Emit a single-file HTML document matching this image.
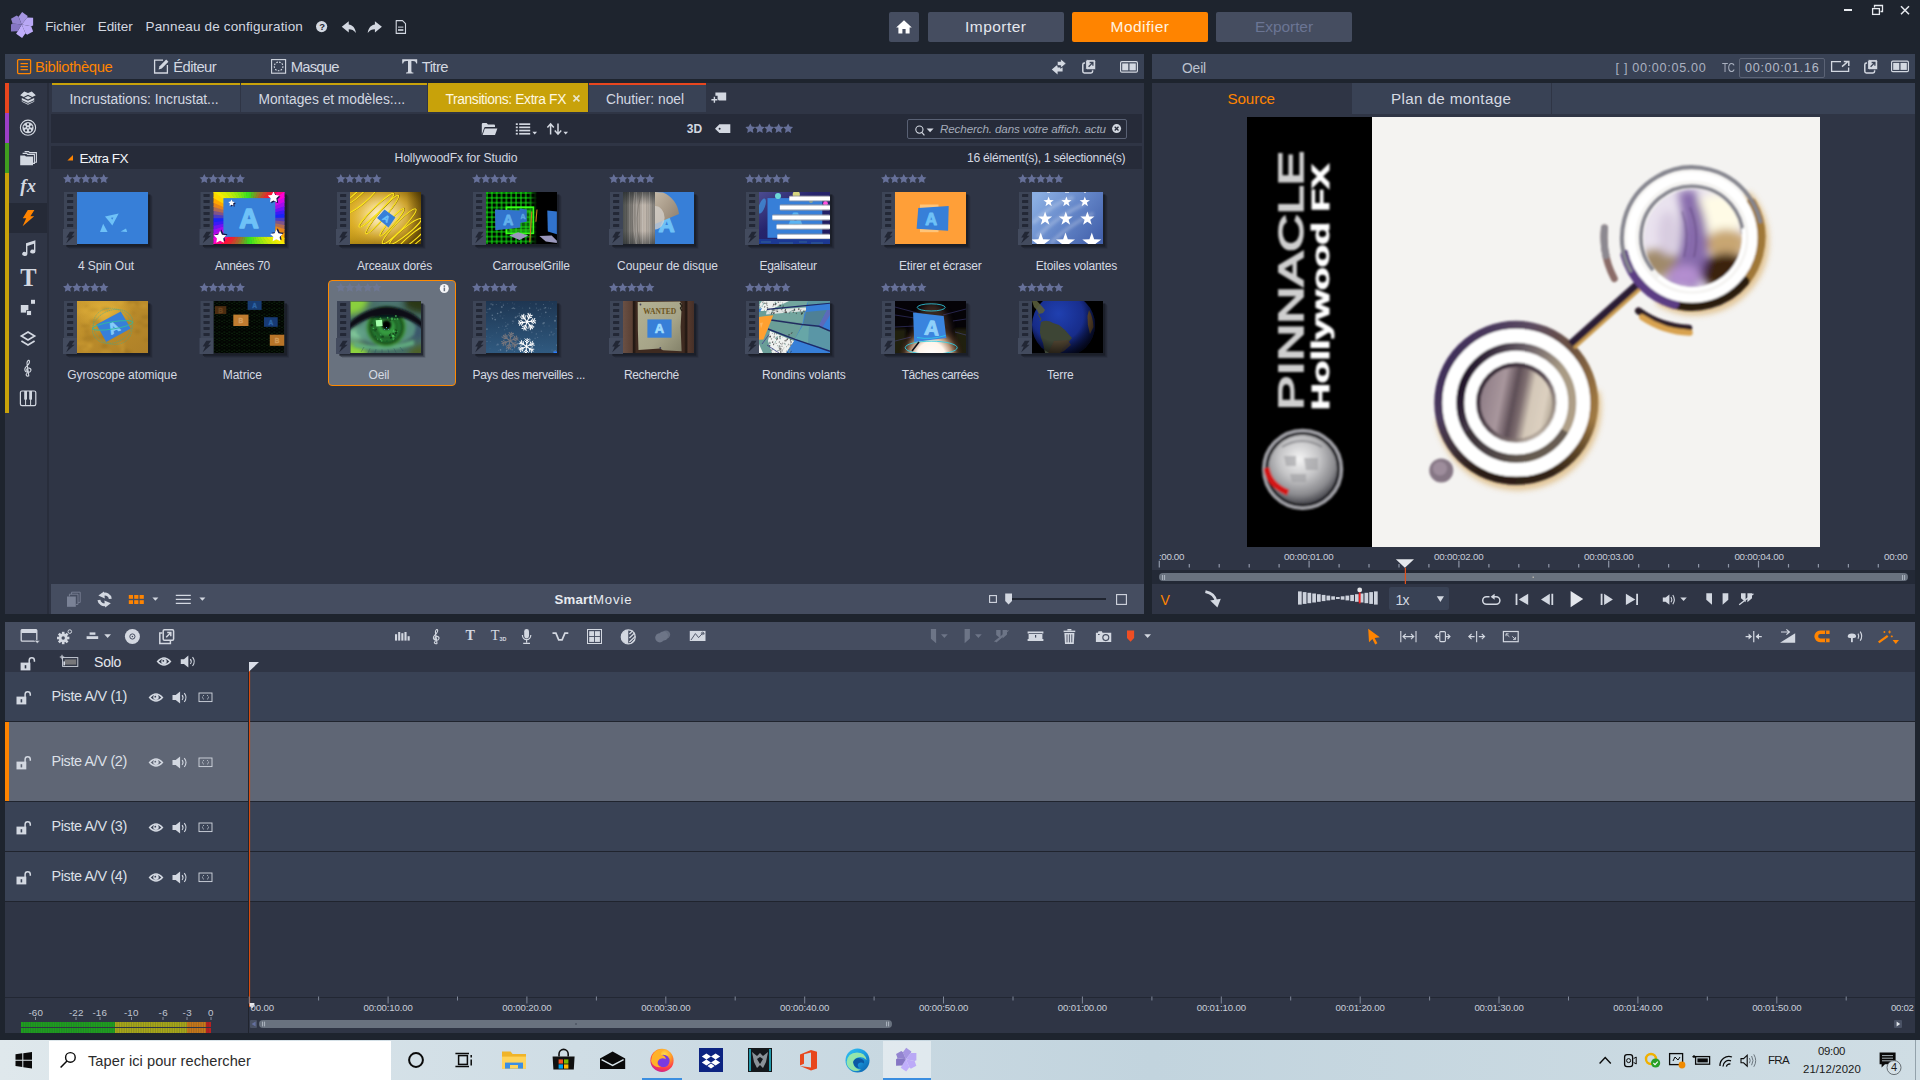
<!DOCTYPE html>
<html lang="fr"><head><meta charset="utf-8"><title>Pinnacle Studio</title><style>
html,body{margin:0;padding:0;}
body{width:1920px;height:1080px;overflow:hidden;background:#1e242e;position:relative;font-family:"Liberation Sans",sans-serif;}
.r{position:absolute;}
.t{position:absolute;white-space:nowrap;}
svg{position:absolute;overflow:visible;}
</style></head><body>
<!-- p_layout -->
<div class="r" style="left:5px;top:54px;width:1139px;height:25px;background:#394255;"></div>
<div class="r" style="left:1152px;top:54px;width:763px;height:25px;background:#394255;"></div>
<div class="r" style="left:5px;top:83px;width:1139px;height:531px;background:#2f3545;"></div>
<div class="r" style="left:47px;top:83px;width:1.5px;height:531px;background:#282d3b;"></div>
<div class="r" style="left:5px;top:83px;width:4px;height:30px;background:#e8461e;"></div>
<div class="r" style="left:5px;top:113px;width:4px;height:30px;background:#9b3fc8;"></div>
<div class="r" style="left:5px;top:143px;width:4px;height:30px;background:#3f9e1f;"></div>
<div class="r" style="left:5px;top:173px;width:4px;height:240px;background:#c8a20a;"></div>
<div class="r" style="left:9px;top:203px;width:38px;height:30px;background:#252a37;"></div>
<div class="r" style="left:52px;top:83px;width:188px;height:29px;background:#394255;border-top:2px solid #c8a20a;box-sizing:border-box;"></div>
<div class="r" style="left:241px;top:83px;width:186px;height:29px;background:#394255;border-top:2px solid #c8a20a;box-sizing:border-box;"></div>
<div class="r" style="left:428px;top:83px;width:160px;height:29px;background:#c8a20a;"></div>
<div class="r" style="left:589px;top:83px;width:117px;height:29px;background:#394255;border-top:2px solid #e8461e;box-sizing:border-box;"></div>
<div class="r" style="left:51px;top:114px;width:1091px;height:29px;background:#262b39;"></div>
<div class="r" style="left:51px;top:146px;width:1091px;height:23px;background:#262b39;"></div>
<div class="r" style="left:51px;top:584px;width:1093px;height:30px;background:#454d60;"></div>
<div class="r" style="left:1152px;top:83px;width:763px;height:531px;background:#2f3545;"></div>
<div class="r" style="left:1352px;top:83px;width:563px;height:31px;background:#394255;"></div>
<div class="r" style="left:1551px;top:83px;width:1px;height:31px;background:#2f3545;"></div>
<div class="r" style="left:5px;top:622px;width:1910px;height:28px;background:#454d60;"></div>
<div class="r" style="left:5px;top:650px;width:1910px;height:22px;background:#2f3545;"></div>
<div class="r" style="left:5px;top:672px;width:1910px;height:49px;background:#394255;"></div>
<div class="r" style="left:5px;top:722px;width:1910px;height:79px;background:#5f6675;"></div>
<div class="r" style="left:5px;top:722px;width:4px;height:79px;background:#ff8400;"></div>
<div class="r" style="left:5px;top:802px;width:1910px;height:49px;background:#394255;"></div>
<div class="r" style="left:5px;top:852px;width:1910px;height:49px;background:#394255;"></div>
<div class="r" style="left:5px;top:902px;width:1910px;height:95px;background:#2f3545;"></div>
<div class="r" style="left:5px;top:998px;width:1910px;height:35px;background:#2f3545;"></div>
<div class="r" style="left:5px;top:997px;width:1910px;height:1px;background:#222733;"></div>
<div class="r" style="left:0px;top:1040px;width:1920px;height:40px;background:linear-gradient(90deg,#dfe8ec 0%,#cfdde5 30%,#c2d4de 60%,#cfdde4 100%);"></div>
<div class="r" style="left:49px;top:1041px;width:342px;height:39px;background:#ffffff;"></div>
<!-- p_top -->
<div class="r" style="left:889px;top:12px;width:30px;height:30px;background:#454d60;border-radius:2px;"></div>
<div class="r" style="left:928px;top:12px;width:136px;height:30px;background:#454d60;border-radius:2px;"></div>
<div class="r" style="left:1072px;top:12px;width:136px;height:30px;background:#ff8400;border-radius:2px;"></div>
<div class="r" style="left:1216px;top:12px;width:136px;height:30px;background:#454d60;border-radius:2px;"></div>
<!-- p_library -->
<div class="r" style="left:907px;top:119px;width:220px;height:20px;background:#262b39;border:1px solid #596174;border-radius:2px;box-sizing:border-box;"></div>
<!-- p_thumbs -->
<div class="r" style="left:328.3px;top:279.6px;width:127.5px;height:106.39999999999998px;background:#69727f;border:1.6px solid #ff8a00;border-radius:4px;box-sizing:border-box;"></div>
<!-- p_preview -->
<div class="r" style="left:1739px;top:58px;width:86px;height:20px;background:transparent;border:1px solid #5b6375;border-radius:2px;box-sizing:border-box;"></div>
<div class="r" style="left:1247px;top:117px;width:125px;height:430px;background:#000;"></div>
<div class="r" style="left:1372px;top:117px;width:448px;height:430px;background:#f4f3f1;"></div>
<div class="r" style="left:1152px;top:570px;width:763px;height:14px;background:#232936;"></div>
<div class="r" style="left:1159px;top:573.4px;width:749px;height:7.800000000000068px;background:#69727f;border-radius:4px;"></div>
<div class="r" style="left:1389.3px;top:587.2px;width:59.299999999999955px;height:23.199999999999932px;background:#394255;border-radius:2px;"></div>
<!-- p_timeline -->
<div class="r" style="left:5px;top:721px;width:1910px;height:1px;background:#20242e;"></div>
<div class="r" style="left:5px;top:801px;width:1910px;height:1px;background:#20242e;"></div>
<div class="r" style="left:5px;top:851px;width:1910px;height:1px;background:#20242e;"></div>
<div class="r" style="left:5px;top:901px;width:1910px;height:1px;background:#20242e;"></div>
<div class="r" style="left:1908.5px;top:1003px;width:6.5px;height:13px;background:#2f3545;"></div>
<div class="r" style="left:259px;top:1020px;width:633px;height:8px;background:#69727f;border-radius:4px;"></div>
<div class="r" style="left:250px;top:1020px;width:7px;height:8px;background:#4a5265;border-radius:1px;"></div>
<div class="r" style="left:1894px;top:1020px;width:8px;height:8px;background:#4a5265;border-radius:1px;"></div>
<div class="r" style="left:248px;top:998px;width:1px;height:35px;background:#20242e;"></div>
<div class="r" style="left:21px;top:1022px;width:190px;height:5px;background:linear-gradient(90deg,#1e9e1e 0,#1ea01e 94px,#a8a818 94px,#a8a818 166px,#c87818 166px,#c87818 185px,#b82020 185px,#b82020 190px);"></div>
<div class="r" style="left:21px;top:1028px;width:190px;height:5px;background:linear-gradient(90deg,#1e9e1e 0,#1ea01e 94px,#a8a818 94px,#a8a818 166px,#c87818 166px,#c87818 185px,#b82020 185px,#b82020 190px);"></div>
<!-- p_taskbar -->
<div class="r" style="left:642px;top:1078px;width:40px;height:2px;background:#3b8ee0;"></div>
<div class="r" style="left:883px;top:1041px;width:48px;height:39px;background:rgba(255,255,255,0.45);"></div>
<div class="r" style="left:883px;top:1078px;width:48px;height:2px;background:#3b8ee0;"></div>
<div class="r" style="left:1915px;top:1040px;width:1px;height:40px;background:#93a2ab;"></div>
<svg width="1920" height="1080" viewBox="0 0 1920 1080" style="left:0;top:0">
<!-- p_layout -->
<!-- p_top -->
<g>
<polygon points="18.6,16.8 22.1,12.1 27.7,16.0 27.1,17.6 21.7,24.4" fill="#a696e2"/>
<polygon points="27.1,17.6 33.1,17.8 33.1,25.6 31.2,26.3 21.7,24.4" fill="#b9a8f5"/>
<polygon points="31.2,26.3 33.1,31.6 27.1,34.8 25.5,33.2 21.7,24.4" fill="#bcaaf8"/>
<polygon points="25.5,33.2 22.1,37.9 16.1,33.8 17.7,31.3 21.7,24.4" fill="#c0aefb"/>
<polygon points="17.7,31.3 11.0,31.6 11.0,24.4 12.6,23.4 21.7,24.4" fill="#8676c4"/>
<polygon points="12.6,23.4 11.0,18.7 16.7,15.6 18.6,16.8 21.7,24.4" fill="#9384d0"/>
</g>
<circle cx="321.6" cy="26.6" r="5.6" fill="#d3d8e1"/>
<path transform="translate(341.75,21.25)" d="M0,5.6 L7,0 L7,3.3 C10.5,3.5 13.4,6.5 14.2,11.8 C12,8.6 10,7.9 7,7.9 L7,11.2 Z" fill="#d3d8e1"/>
<path transform="translate(381.9,21.25) scale(-1,1)" d="M0,5.6 L7,0 L7,3.3 C10.5,3.5 13.4,6.5 14.2,11.8 C12,8.6 10,7.9 7,7.9 L7,11.2 Z" fill="#d3d8e1"/>
<path d="M396.2,20.6 h6.3 l3,3 v9.8 h-9.3 z" fill="none" stroke="#d3d8e1" stroke-width="1.1" stroke-linejoin="round"/><rect x="398" y="26.6" width="5.4" height="1" fill="#d3d8e1"/><rect x="398" y="29.2" width="5.4" height="1.6" fill="#d3d8e1"/>
<path d="M896.2,27.4 L904,20.2 L911.8,27.4 H909.6 V33.4 H905.6 V29 H902.4 V33.4 H898.4 V27.4 Z" fill="#ffffff"/>
<rect x="1844" y="9" width="8" height="2" fill="#e8ebf0"/>
<path d="M1874.5,7.5 v-2 h8 v6 h-2" fill="none" stroke="#e8ebf0" stroke-width="1.3"/><rect x="1872.6" y="8.6" width="6.8" height="5.8" fill="none" stroke="#e8ebf0" stroke-width="1.3"/>
<path d="M1901,6.2 l8,8 M1909,6.2 l-8,8" stroke="#e8ebf0" stroke-width="1.5"/>
<!-- p_library -->
<rect x="17.6" y="59.6" width="13" height="14" rx="1" fill="none" stroke="#ff8400" stroke-width="1.3"/><path d="M20.5,63.6 h7.4 M20.5,66.6 h7.4 M20.5,69.6 h7.4" stroke="#ff8400" stroke-width="1.2"/>
<path d="M163,60.2 h-8.4 v12.8 h12.8 v-8" fill="none" stroke="#d3d8e1" stroke-width="1.3"/><path d="M158.6,69.4 l1,-3.2 l6.6,-6.6 l2.2,2.2 l-6.6,6.6 z" fill="#d3d8e1"/>
<rect x="271.6" y="59.6" width="14" height="13.6" fill="none" stroke="#d3d8e1" stroke-width="1.1"/><circle cx="278.6" cy="66.4" r="4.3" fill="none" stroke="#d3d8e1" stroke-width="1.1" stroke-dasharray="1.6 1.3"/>
<path d="M402.2,59.2 h15 v4.4 h-1 c-0.3,-1.8 -1.2,-2.6 -3.2,-2.6 h-1.6 v10 c0,1 0.6,1.5 2,1.6 v1 h-7.4 v-1 c1.4,-0.1 2,-0.6 2,-1.6 v-10 h-1.6 c-2,0 -2.9,0.8 -3.2,2.6 h-1 z" fill="#d3d8e1"/>
<path d="M1062.600,67.400 h-5 v-2.800 l-5.800,4.900 l5.800,4.900 v-2.800 h5z" fill="#d3d8e1"/><path d="M1057.200,61.300 h3.500 v-2.600 l5.500,4.800 l-5.500,4.800 v-2.600 h-3.500z" fill="#d3d8e1" stroke="#394255" stroke-width="0.900"/>
<rect x="1082.8" y="63.1" width="9.8" height="9.8" rx="1.6" fill="none" stroke="#d3d8e1" stroke-width="1.5"/><rect x="1085.6" y="59.6" width="10.2" height="10.2" rx="1.6" fill="#d3d8e1" stroke="#394255" stroke-width="1"/><path d="M1088.6,66.8 l4.2,-4.200 M1089.6,62.5 h3.300 v3.300" fill="none" stroke="#394255" stroke-width="1.300"/>
<rect x="1120.6" y="61.7" width="16.8" height="10.4" rx="1.200" fill="none" stroke="#d3d8e1" stroke-width="1.200"/><rect x="1122.2" y="63.4" width="6.100" height="7" fill="#d3d8e1"/><rect x="1129.5" y="63.4" width="6.300" height="7" fill="#d3d8e1"/>
<path d="M573.4,95.4 l6,6 M579.4,95.4 l-6,6" stroke="#e9e4c6" stroke-width="1.7"/>
<path d="M715.4,92.6 h10.8 v8 h-7.4 l-1.2,-1.6 v-3.2 h-2.2z" fill="#d3d8e1"/><path d="M714.4,96.8 v6 M711.4,99.8 h6" stroke="#d3d8e1" stroke-width="1.4"/>
<path d="M481.8,134.8 v-10.6 q0,-1.2 1.2,-1.2 h3.6 l1.4,1.6 h6 q1,0 1,1 v1.4 h-9.6 q-1,0 -1.3,1 z" fill="#d3d8e1"/><path d="M482.6,134.9 l2.2,-6.3 h12.6 l-2.4,6.3 z" fill="#d3d8e1"/>
<rect x="515.8" y="123.3" width="2" height="1.7" fill="#d3d8e1"/><rect x="519.2" y="123.3" width="11" height="1.7" fill="#d3d8e1"/>
<rect x="515.8" y="126.5" width="2" height="1.7" fill="#d3d8e1"/><rect x="519.2" y="126.5" width="11" height="1.7" fill="#d3d8e1"/>
<rect x="515.8" y="129.7" width="2" height="1.7" fill="#d3d8e1"/><rect x="519.2" y="129.7" width="11" height="1.7" fill="#d3d8e1"/>
<rect x="515.8" y="132.9" width="2" height="1.7" fill="#d3d8e1"/><rect x="519.2" y="132.9" width="11" height="1.7" fill="#d3d8e1"/>
<path d="M532.4,131.8 h4.6 l-2.3,2.6z" fill="#d3d8e1"/>
<path d="M550.6,134.4 v-9.6 M547.4,127.6 l3.2,-3.6 l3.2,3.6 M558,123.6 v9.8 M554.8,130.6 l3.2,3.6 l3.2,-3.6" fill="none" stroke="#d3d8e1" stroke-width="1.5"/><path d="M563.4,131.8 h4.6 l-2.3,2.6z" fill="#d3d8e1"/>
<path d="M715,128.7 l4.4,-4.4 h10.9 v8.8 h-10.9 z" fill="#d3d8e1"/><circle cx="719.6" cy="128.7" r="1" fill="#262b39"/>
<polygon points="750.30,123.50 751.83,126.60 755.25,127.09 752.77,129.50 753.36,132.91 750.30,131.30 747.24,132.91 747.83,129.50 745.35,127.09 748.77,126.60" fill="#667099"/><polygon points="759.75,123.50 761.28,126.60 764.70,127.09 762.22,129.50 762.81,132.91 759.75,131.30 756.69,132.91 757.28,129.50 754.80,127.09 758.22,126.60" fill="#667099"/><polygon points="769.20,123.50 770.73,126.60 774.15,127.09 771.67,129.50 772.26,132.91 769.20,131.30 766.14,132.91 766.73,129.50 764.25,127.09 767.67,126.60" fill="#667099"/><polygon points="778.65,123.50 780.18,126.60 783.60,127.09 781.12,129.50 781.71,132.91 778.65,131.30 775.59,132.91 776.18,129.50 773.70,127.09 777.12,126.60" fill="#667099"/><polygon points="788.10,123.50 789.63,126.60 793.05,127.09 790.57,129.50 791.16,132.91 788.10,131.30 785.04,132.91 785.63,129.50 783.15,127.09 786.57,126.60" fill="#667099"/>
<circle cx="919.4" cy="129.6" r="3.6" fill="none" stroke="#d3d8e1" stroke-width="1.1"/><path d="M921.8,132.4 l2.6,3" stroke="#d3d8e1" stroke-width="1.2"/><path d="M926.6,128.6 h7 l-3.5,3.6z" fill="#d3d8e1"/>
<circle cx="1116.6" cy="128.6" r="4.5" fill="#d3d8e1"/><path d="M1114.7,126.7 l3.8,3.8 M1118.5,126.7 l-3.8,3.8" stroke="#262b39" stroke-width="1.3"/>
<path d="M73,155 v5.6 h-5.6 z" fill="#ff8400"/>
<g fill="#d3d8e1"><path d="M20.2,95.2 l4,-3.800 l3.800,1.700 l3.800,-1.700 l4,3.800 l-3.500,1.700 l-4.300,-2.100 l-4.300,2.100z"/><path d="M28,96 l3.600,1.800 l-3.600,1.600 l-3.600,-1.600z"/><path d="M21.800,98 l6.200,2.800 l6.200,-2.800 v3.800 l-6.200,3 l-6.200,-3z"/></g><path d="M21.800,100.600 l6.200,2.800 l6.200,-2.800" fill="none" stroke="#2f3545" stroke-width="0.900"/>
<circle cx="28" cy="127.7" r="7.6" fill="none" stroke="#d3d8e1" stroke-width="1.1"/><circle cx="28" cy="127.7" r="5.6" fill="#d3d8e1"/>
<circle cx="28.00" cy="124.30" r="1.15" fill="#2f3545"/>
<circle cx="31.23" cy="126.65" r="1.15" fill="#2f3545"/>
<circle cx="30.00" cy="130.45" r="1.15" fill="#2f3545"/>
<circle cx="26.00" cy="130.45" r="1.15" fill="#2f3545"/>
<circle cx="24.77" cy="126.65" r="1.15" fill="#2f3545"/>
<circle cx="28" cy="127.7" r="0.8" fill="#2f3545"/>
<path d="M24.6,151.6 h4 l1,1 h6.8 v9.6 h-1.6" fill="none" stroke="#d3d8e1" stroke-width="1.1"/><path d="M22.6,153.4 h4 l1,1 h6.8 v9 h-1.6" fill="none" stroke="#d3d8e1" stroke-width="1.1"/><path d="M20.2,155.4 h4.6 l1.2,1.2 h7 v8.6 h-12.8z" fill="#d3d8e1"/>
<path d="M27.8,210 h6.6 l-4,6.2 h3.8 l-11.6,10 l3.6,-8 h-3.4 z" fill="#ff8400"/>
<path d="M26,243.2 l9.4,-3 v11.4 a2.6,2 0 1 1 -1.4,-1.8 v-6 l-6.6,2.2 v8 a2.6,2 0 1 1 -1.4,-1.8 z" fill="#d3d8e1"/>
<rect x="20.8" y="305" width="7.6" height="7.6" fill="#d3d8e1"/><rect x="26.6" y="310.6" width="4.8" height="4.8" fill="#d3d8e1" stroke="#2f3545" stroke-width="0.8"/><rect x="31" y="299.8" width="4" height="4" fill="#d3d8e1"/>
<path d="M28,332 l6.6,4 l-6.6,4 l-6.6,-4z" fill="none" stroke="#d3d8e1" stroke-width="1.7" stroke-linejoin="miter"/><path d="M21.4,341 l6.6,4 l6.6,-4" fill="none" stroke="#d3d8e1" stroke-width="1.7"/>
<path d="M28.6,376 c-2.4,0.6 -3.2,-1.8 -1.6,-2.4 M28.8,375.8 l-1.8,-12.4 c-0.2,-2 1.6,-3.6 2.2,-3 c0.8,1.4 -0.2,3.6 -2.6,5.8 c-2.6,2.4 -2.6,5.600 1.400,6.200 c3.400,0.200 4,-3.800 1,-4.400 c-2.400,-0.200 -3.200,2.400 -1.400,3.200" fill="none" stroke="#d3d8e1" stroke-width="1.1" stroke-linecap="round"/>
<rect x="20.4" y="391" width="15.4" height="14.6" rx="1.6" fill="none" stroke="#d3d8e1" stroke-width="1.2"/><path d="M25.6,391 v14.6 M30.6,391 v14.6" stroke="#d3d8e1" stroke-width="1"/><rect x="24.2" y="391" width="2.8" height="8.6" fill="#d3d8e1"/><rect x="29.2" y="391" width="2.8" height="8.6" fill="#d3d8e1"/>
<path d="M69.400,596.400 v-2.200 h8.600 v10.200 h-2 M71.600,594.200 v-2 h8.600 v10.200 h-2" fill="none" stroke="#7a8296" stroke-width="0.900"/><rect x="67" y="596.500" width="8.800" height="10.300" fill="#7a8296"/>
<path d="M110.300,598.800 A5.300,5.300 0 0 0 102.800,594.600" fill="none" stroke="#d3d8e1" stroke-width="2.900"/><path d="M104,591.400 L98.400,595.600 L104.800,598.400z" fill="#d3d8e1"/><g transform="rotate(180 104.6 599.4)"><path d="M110.300,598.800 A5.300,5.300 0 0 0 102.800,594.600" fill="none" stroke="#d3d8e1" stroke-width="2.900"/><path d="M104,591.400 L98.400,595.600 L104.800,598.400z" fill="#d3d8e1"/></g>
<rect x="128.8" y="595.0" width="4.2" height="3.8" fill="#ff8400"/>
<rect x="134.2" y="595.0" width="4.2" height="3.8" fill="#ff8400"/>
<rect x="139.6" y="595.0" width="4.2" height="3.8" fill="#ff8400"/>
<rect x="128.8" y="600.2" width="4.2" height="3.8" fill="#ff8400"/>
<rect x="134.2" y="600.2" width="4.2" height="3.8" fill="#ff8400"/>
<rect x="139.6" y="600.2" width="4.2" height="3.8" fill="#ff8400"/>
<path d="M152.4,597.4 h6 l-3,3.400z" fill="#d3d8e1"/>
<path d="M175.800,595.400 h15 M175.800,599.400 h15 M175.800,603.400 h15" stroke="#d3d8e1" stroke-width="1.2"/><path d="M199.400,597.400 h6 l-3,3.400z" fill="#d3d8e1"/>
<rect x="989.6" y="595.6" width="6.8" height="6.8" fill="none" stroke="#d3d8e1" stroke-width="1.1"/><rect x="1116.600" y="594.600" width="9.800" height="9.800" fill="none" stroke="#d3d8e1" stroke-width="1.1"/><rect x="1008" y="598" width="98" height="2" fill="#1f242f"/><path d="M1005.2,593.400 h6.800 v7.600 l-3.400,3.600 l-3.400,-3.600z" fill="#d3d8e1"/>
<!-- p_thumbs -->
<defs>
<clipPath id="tc"><rect width="71" height="52"/></clipPath>
<filter id="fT1" x="-20%" y="-20%" width="140%" height="140%"><feGaussianBlur stdDeviation="1.6"/></filter>
<filter id="fT3" x="-30%" y="-30%" width="160%" height="160%"><feGaussianBlur stdDeviation="3.2"/></filter>
<filter id="fT1b" x="-20%" y="-20%" width="140%" height="140%"><feGaussianBlur stdDeviation="1.1"/></filter>
<filter id="fT05" x="-20%" y="-20%" width="140%" height="140%"><feGaussianBlur stdDeviation="0.45"/></filter>
<filter id="fT03" x="-20%" y="-20%" width="140%" height="140%"><feGaussianBlur stdDeviation="0.3"/></filter>
<radialGradient id="gGold" cx="0.42" cy="0.45" r="0.72"><stop offset="0" stop-color="#fff4d6"/><stop offset="0.28" stop-color="#f2d88a"/><stop offset="0.58" stop-color="#cfa530"/><stop offset="0.82" stop-color="#9a7412"/><stop offset="1" stop-color="#5e4606"/></radialGradient>
<linearGradient id="gGoldL" x1="0" x2="1"><stop offset="0" stop-color="#e8b820" stop-opacity="0.55"/><stop offset="0.35" stop-color="#e8b820" stop-opacity="0"/><stop offset="0.8" stop-color="#3a2a04" stop-opacity="0"/><stop offset="1" stop-color="#3a2a04" stop-opacity="0.45"/></linearGradient>
<pattern id="pGrid" width="4.85" height="4.85" patternUnits="userSpaceOnUse"><rect width="4.85" height="4.85" fill="#000600"/><path d="M1,0 V4.850 M0,1 H4.850" stroke="#12f012" stroke-width="1"/></pattern>
<linearGradient id="gGridFade" x1="0" x2="1"><stop offset="0.600" stop-color="#000" stop-opacity="0"/><stop offset="0.720" stop-color="#000" stop-opacity="1"/></linearGradient>
<linearGradient id="gMetal" x1="0" x2="1"><stop offset="0" stop-color="#4c504e"/><stop offset="0.200" stop-color="#6e6c68"/><stop offset="0.500" stop-color="#a8a098"/><stop offset="0.700" stop-color="#c0b6ac"/><stop offset="0.850" stop-color="#9c968e"/><stop offset="1" stop-color="#7e7c78"/></linearGradient>
<linearGradient id="gMetalV" x1="0" x2="0" y1="0" y2="1"><stop offset="0" stop-color="#20262a" stop-opacity="0.650"/><stop offset="0.250" stop-color="#20262a" stop-opacity="0"/><stop offset="0.750" stop-color="#20262a" stop-opacity="0"/><stop offset="1" stop-color="#20262a" stop-opacity="0.500"/></linearGradient>
<linearGradient id="gSaw" x1="0" x2="1" y1="0" y2="1"><stop offset="0" stop-color="#c4b8a6"/><stop offset="0.500" stop-color="#a89a88"/><stop offset="1" stop-color="#8a7c6c"/></linearGradient>
<linearGradient id="gEq" x1="0" x2="1" y1="0" y2="1"><stop offset="0" stop-color="#4c4c90"/><stop offset="0.400" stop-color="#26246c"/><stop offset="1" stop-color="#201a5c"/></linearGradient>
<linearGradient id="gBar" x1="0" x2="0" y1="0" y2="1"><stop offset="0" stop-color="#8a8a92" stop-opacity="0.7"/><stop offset="0.300" stop-color="#ffffff"/><stop offset="0.700" stop-color="#ffffff"/><stop offset="1" stop-color="#8a8a92" stop-opacity="0.7"/></linearGradient>
<linearGradient id="gSky" x1="0" x2="1" y1="0.200" y2="0.800"><stop offset="0" stop-color="#8aaee2"/><stop offset="0.500" stop-color="#6486c8"/><stop offset="1" stop-color="#4462ac"/></linearGradient>
<linearGradient id="gGold2" x1="0" x2="1" y1="0" y2="1"><stop offset="0" stop-color="#cc9c30"/><stop offset="0.500" stop-color="#b98a2a"/><stop offset="1" stop-color="#ae8028"/></linearGradient>
<radialGradient id="gGold2b" cx="0.400" cy="0.220" r="0.400"><stop offset="0" stop-color="#f0c040" stop-opacity="0.800"/><stop offset="1" stop-color="#f0c040" stop-opacity="0"/></radialGradient>
<pattern id="pMatrix" width="5" height="6" patternUnits="userSpaceOnUse"><rect x="0.500" y="0.500" width="0.800" height="1.200" fill="#1c5a1c"/><rect x="0.500" y="3" width="0.800" height="1.200" fill="#144014"/><rect x="3" y="1.800" width="0.800" height="1.200" fill="#1a4a1a"/><rect x="3" y="4.600" width="0.800" height="1" fill="#0e300e"/></pattern>
<linearGradient id="gEyeBg" x1="0" x2="1"><stop offset="0" stop-color="#86c24a"/><stop offset="0.500" stop-color="#6c9a7c"/><stop offset="1" stop-color="#44606e"/></linearGradient>
<linearGradient id="gEyeTop" x1="0" x2="1"><stop offset="0" stop-color="#78c23a"/><stop offset="0.450" stop-color="#4a7a44"/><stop offset="1" stop-color="#5a6a3a"/></linearGradient>
<radialGradient id="gIris" cx="0.500" cy="0.480" r="0.500"><stop offset="0" stop-color="#0a2a10"/><stop offset="0.350" stop-color="#2c8a34"/><stop offset="0.700" stop-color="#2a7a30"/><stop offset="0.880" stop-color="#144a20"/><stop offset="1" stop-color="#0c2a1a"/></radialGradient>
<linearGradient id="gEyeLow" x1="0" x2="1"><stop offset="0" stop-color="#8ed048"/><stop offset="0.400" stop-color="#6aa066"/><stop offset="1" stop-color="#3e5868"/></linearGradient>
<linearGradient id="gSnow" x1="0" x2="0" y1="0" y2="1"><stop offset="0" stop-color="#1e3652"/><stop offset="1" stop-color="#305a80"/></linearGradient>
<linearGradient id="gWood" x1="0" x2="1"><stop offset="0" stop-color="#6a5044"/><stop offset="0.130" stop-color="#5a4034"/><stop offset="0.150" stop-color="#1c1410"/><stop offset="0.190" stop-color="#3e2a20"/><stop offset="0.860" stop-color="#3e2a20"/><stop offset="0.890" stop-color="#1c1410"/><stop offset="0.920" stop-color="#54382c"/><stop offset="1" stop-color="#463028"/></linearGradient>
<linearGradient id="gPaper" x1="0" x2="1" y1="0" y2="1"><stop offset="0" stop-color="#b4b294"/><stop offset="0.600" stop-color="#a6a488"/><stop offset="1" stop-color="#84826a"/></linearGradient>
<radialGradient id="gGlow" cx="36" cy="56" r="34" gradientUnits="userSpaceOnUse" gradientTransform="translate(36 56) scale(1 1.05) translate(-36 -56)"><stop offset="0" stop-color="#ffffff"/><stop offset="0.420" stop-color="#fff4ea"/><stop offset="0.620" stop-color="#b89478"/><stop offset="0.800" stop-color="#4a3424" stop-opacity="0.850"/><stop offset="1" stop-color="#201008" stop-opacity="0"/></radialGradient>
<radialGradient id="gEarth" cx="0.420" cy="0.320" r="0.700"><stop offset="0" stop-color="#2040b0"/><stop offset="0.600" stop-color="#172c8a"/><stop offset="1" stop-color="#081040"/></radialGradient>
<radialGradient id="gEarthShade" cx="0.400" cy="0.350" r="0.680"><stop offset="0.600" stop-color="#000" stop-opacity="0"/><stop offset="1" stop-color="#000" stop-opacity="0.700"/></radialGradient>
</defs>
<polygon points="67.80,174.00 69.27,176.98 72.56,177.45 70.18,179.77 70.74,183.05 67.80,181.50 64.86,183.05 65.42,179.77 63.04,177.45 66.33,176.98" fill="#667099"/><polygon points="76.78,174.00 78.25,176.98 81.54,177.45 79.16,179.77 79.72,183.05 76.78,181.50 73.84,183.05 74.40,179.77 72.02,177.45 75.31,176.98" fill="#667099"/><polygon points="85.76,174.00 87.23,176.98 90.52,177.45 88.14,179.77 88.70,183.05 85.76,181.50 82.82,183.05 83.38,179.77 81.00,177.45 84.29,176.98" fill="#667099"/><polygon points="94.74,174.00 96.21,176.98 99.50,177.45 97.12,179.77 97.68,183.05 94.74,181.50 91.80,183.05 92.36,179.77 89.98,177.45 93.27,176.98" fill="#667099"/><polygon points="103.72,174.00 105.19,176.98 108.48,177.45 106.10,179.77 106.66,183.05 103.72,181.50 100.78,183.05 101.34,179.77 98.96,177.45 102.25,176.98" fill="#667099"/>
<g transform="translate(64.00,192)"><path d="M84,2.5 h2.400 v52.300 h-84 v-2.800 h81.600z" fill="#171b25" opacity="0.850"/><path d="M86.400,3.500 h1.200 v52.500 h-84 v-1.200 h82.800z" fill="#171b25" opacity="0.450"/><path d="M87.600,4.500 h0.800 v52.300 h-83.400 v-0.800 h82.600z" fill="#171b25" opacity="0.200"/><rect width="13" height="52" fill="#3d4557"/><rect x="-1" y="37" width="14" height="16" fill="#434b5e"/><rect x="3" y="2" width="6.200" height="2.900" rx="0.400" fill="#232836"/><rect x="3" y="8" width="6.200" height="2.900" rx="0.400" fill="#232836"/><rect x="3" y="14" width="6.200" height="2.900" rx="0.400" fill="#232836"/><rect x="3" y="20" width="6.200" height="2.900" rx="0.400" fill="#232836"/><rect x="3" y="26" width="6.200" height="2.900" rx="0.400" fill="#232836"/><rect x="3" y="32" width="6.200" height="2.900" rx="0.400" fill="#232836"/><path d="M5.800,39.800 h4.800 l-2.800,4 h2.800 l-8.400,7.400 l2.600,-5.600 h-2.600 z" fill="#222735"/><g transform="translate(13,0)" clip-path="url(#tc)"><rect width="71" height="52" fill="#377fd8"/><path d="M28,24.5 L41.7,21.6 L35.3,33.5 L32,29.2 Z M34,25.800 L35.200,27.800 L36.400,25.400Z" fill="#6ec1f7" fill-rule="evenodd"/><polygon points="23.0,40.0 26.2,31.8 30.6,40.0" fill="#6ec1f7" /><polygon points="43.7,39.4 49.0,36.5 50.2,40.0" fill="#6ec1f7" /></g></g>
<polygon points="204.30,174.00 205.77,176.98 209.06,177.45 206.68,179.77 207.24,183.05 204.30,181.50 201.36,183.05 201.92,179.77 199.54,177.45 202.83,176.98" fill="#667099"/><polygon points="213.28,174.00 214.75,176.98 218.04,177.45 215.66,179.77 216.22,183.05 213.28,181.50 210.34,183.05 210.90,179.77 208.52,177.45 211.81,176.98" fill="#667099"/><polygon points="222.26,174.00 223.73,176.98 227.02,177.45 224.64,179.77 225.20,183.05 222.26,181.50 219.32,183.05 219.88,179.77 217.50,177.45 220.79,176.98" fill="#667099"/><polygon points="231.24,174.00 232.71,176.98 236.00,177.45 233.62,179.77 234.18,183.05 231.24,181.50 228.30,183.05 228.86,179.77 226.48,177.45 229.77,176.98" fill="#667099"/><polygon points="240.22,174.00 241.69,176.98 244.98,177.45 242.60,179.77 243.16,183.05 240.22,181.50 237.28,183.05 237.84,179.77 235.46,177.45 238.75,176.98" fill="#667099"/>
<g transform="translate(200.50,192)"><path d="M84,2.5 h2.400 v52.300 h-84 v-2.800 h81.600z" fill="#171b25" opacity="0.850"/><path d="M86.400,3.500 h1.200 v52.500 h-84 v-1.200 h82.800z" fill="#171b25" opacity="0.450"/><path d="M87.600,4.500 h0.800 v52.300 h-83.400 v-0.800 h82.600z" fill="#171b25" opacity="0.200"/><rect width="13" height="52" fill="#3d4557"/><rect x="-1" y="37" width="14" height="16" fill="#434b5e"/><rect x="3" y="2" width="6.200" height="2.900" rx="0.400" fill="#232836"/><rect x="3" y="8" width="6.200" height="2.900" rx="0.400" fill="#232836"/><rect x="3" y="14" width="6.200" height="2.900" rx="0.400" fill="#232836"/><rect x="3" y="20" width="6.200" height="2.900" rx="0.400" fill="#232836"/><rect x="3" y="26" width="6.200" height="2.900" rx="0.400" fill="#232836"/><rect x="3" y="32" width="6.200" height="2.900" rx="0.400" fill="#232836"/><path d="M5.800,39.800 h4.800 l-2.800,4 h2.800 l-8.400,7.400 l2.600,-5.600 h-2.600 z" fill="#222735"/><g transform="translate(13,0)" clip-path="url(#tc)"><polygon points="35.5,26.0 -13.4,-8.8 -8.7,-14.6" fill="#f4ed02" /><polygon points="35.5,26.0 -9.5,-13.7 -4.2,-19.0" fill="#dcec05" /><polygon points="35.5,26.0 -5.1,-18.2 0.7,-22.9" fill="#c6ea09" /><polygon points="35.5,26.0 -0.3,-22.2 6.0,-26.3" fill="#aee90c" /><polygon points="35.5,26.0 5.0,-25.6 11.7,-29.1" fill="#98e710" /><polygon points="35.5,26.0 10.5,-28.6 17.6,-31.3" fill="#80e514" /><polygon points="35.5,26.0 16.4,-30.9 23.6,-32.8" fill="#6ae417" /><polygon points="35.5,26.0 22.4,-32.6 29.9,-33.7" fill="#52e21b" /><polygon points="35.5,26.0 28.6,-33.6 36.1,-34.0" fill="#3ce11e" /><polygon points="35.5,26.0 34.9,-34.0 42.4,-33.6" fill="#3ed221" /><polygon points="35.5,26.0 41.1,-33.7 48.6,-32.6" fill="#5ab523" /><polygon points="35.5,26.0 47.4,-32.8 54.6,-30.9" fill="#779925" /><polygon points="35.5,26.0 53.4,-31.3 60.5,-28.6" fill="#937d28" /><polygon points="35.5,26.0 59.3,-29.1 66.0,-25.6" fill="#af602a" /><polygon points="35.5,26.0 65.0,-26.3 71.3,-22.2" fill="#cb442c" /><polygon points="35.5,26.0 70.3,-22.9 76.1,-18.2" fill="#e7282e" /><polygon points="35.5,26.0 75.2,-19.0 80.5,-13.7" fill="#ff0f3d" /><polygon points="35.5,26.0 79.7,-14.6 84.4,-8.8" fill="#ff0888" /><polygon points="35.5,26.0 83.7,-9.8 87.8,-3.5" fill="#ff01d3" /><polygon points="35.5,26.0 87.1,-4.5 90.6,2.2" fill="#d406e6" /><polygon points="35.5,26.0 90.1,1.0 92.8,8.1" fill="#a10dec" /><polygon points="35.5,26.0 92.4,6.9 94.3,14.1" fill="#6e13f3" /><polygon points="35.5,26.0 94.1,12.9 95.2,20.4" fill="#3b1af9" /><polygon points="35.5,26.0 95.1,19.1 95.5,26.6" fill="#1924f6" /><polygon points="35.5,26.0 95.5,25.4 95.1,32.9" fill="#4c3cbf" /><polygon points="35.5,26.0 95.2,31.6 94.1,39.1" fill="#7f5489" /><polygon points="35.5,26.0 94.3,37.9 92.4,45.1" fill="#b26c52" /><polygon points="35.5,26.0 92.8,43.9 90.1,51.0" fill="#e5841b" /><polygon points="35.5,26.0 90.6,49.8 87.1,56.5" fill="#ffa800" /><polygon points="35.5,26.0 87.8,55.5 83.7,61.8" fill="#ffd600" /><polygon points="35.5,26.0 84.4,60.8 79.7,66.6" fill="#f4ed02" /><polygon points="35.5,26.0 80.5,65.7 75.2,71.0" fill="#dcec05" /><polygon points="35.5,26.0 76.1,70.2 70.3,74.9" fill="#c6ea09" /><polygon points="35.5,26.0 71.3,74.2 65.0,78.3" fill="#aee90c" /><polygon points="35.5,26.0 66.0,77.6 59.3,81.1" fill="#98e710" /><polygon points="35.5,26.0 60.5,80.6 53.4,83.3" fill="#80e514" /><polygon points="35.5,26.0 54.6,82.9 47.4,84.8" fill="#6ae417" /><polygon points="35.5,26.0 48.6,84.6 41.1,85.7" fill="#52e21b" /><polygon points="35.5,26.0 42.4,85.6 34.9,86.0" fill="#3ce11e" /><polygon points="35.5,26.0 36.1,86.0 28.6,85.6" fill="#3ed221" /><polygon points="35.5,26.0 29.9,85.7 22.4,84.6" fill="#5ab523" /><polygon points="35.5,26.0 23.6,84.8 16.4,82.9" fill="#779925" /><polygon points="35.5,26.0 17.6,83.3 10.5,80.6" fill="#937d28" /><polygon points="35.5,26.0 11.7,81.1 5.0,77.6" fill="#af602a" /><polygon points="35.5,26.0 6.0,78.3 -0.3,74.2" fill="#cb442c" /><polygon points="35.5,26.0 0.7,74.9 -5.1,70.2" fill="#e7282e" /><polygon points="35.5,26.0 -4.2,71.0 -9.5,65.7" fill="#ff0f3d" /><polygon points="35.5,26.0 -8.7,66.6 -13.4,60.8" fill="#ff0888" /><polygon points="35.5,26.0 -12.7,61.8 -16.8,55.5" fill="#ff01d3" /><polygon points="35.5,26.0 -16.1,56.5 -19.6,49.8" fill="#d406e6" /><polygon points="35.5,26.0 -19.1,51.0 -21.8,43.9" fill="#a10dec" /><polygon points="35.5,26.0 -21.4,45.1 -23.3,37.9" fill="#6e13f3" /><polygon points="35.5,26.0 -23.1,39.1 -24.2,31.6" fill="#3b1af9" /><polygon points="35.5,26.0 -24.1,32.9 -24.5,25.4" fill="#1924f6" /><polygon points="35.5,26.0 -24.5,26.6 -24.1,19.1" fill="#4c3cbf" /><polygon points="35.5,26.0 -24.2,20.4 -23.1,12.9" fill="#7f5489" /><polygon points="35.5,26.0 -23.3,14.1 -21.4,6.9" fill="#b26c52" /><polygon points="35.5,26.0 -21.8,8.1 -19.1,1.0" fill="#e5841b" /><polygon points="35.5,26.0 -19.6,2.2 -16.1,-4.5" fill="#ffa800" /><polygon points="35.5,26.0 -16.8,-3.5 -12.7,-9.8" fill="#ffd600" /><rect x="9.9" y="6.1" width="51.9" height="38.8" fill="#377fd8"/><text x="35.6" y="35.87" font-size="27" font-weight="bold" text-anchor="middle" fill="#6ec1f7" stroke="#6ec1f7" stroke-width="1.49" stroke-linejoin="round" opacity="1">A</text><polygon points="19.20,8.60 20.20,10.62 22.43,10.95 20.82,12.53 21.20,14.75 19.20,13.70 17.20,14.75 17.58,12.53 15.97,10.95 18.20,10.62" fill="#14184a"/><polygon points="18.00,7.60 19.00,9.62 21.23,9.95 19.62,11.53 20.00,13.75 18.00,12.70 16.00,13.75 16.38,11.53 14.77,9.95 17.00,9.62" fill="#ffffff"/><polygon points="61.20,0.40 62.96,3.97 66.91,4.55 64.05,7.33 64.73,11.25 61.20,9.40 57.67,11.25 58.35,7.33 55.49,4.55 59.44,3.97" fill="#14184a"/><polygon points="60.00,-0.60 61.76,2.97 65.71,3.55 62.85,6.33 63.53,10.25 60.00,8.40 56.47,10.25 57.15,6.33 54.29,3.55 58.24,2.97" fill="#ffffff"/><polygon points="7.80,37.60 9.74,41.53 14.08,42.16 10.94,45.22 11.68,49.54 7.80,47.50 3.92,49.54 4.66,45.22 1.52,42.16 5.86,41.53" fill="#14184a"/><polygon points="6.60,38.80 8.54,42.73 12.88,43.36 9.74,46.42 10.48,50.74 6.60,48.70 2.72,50.74 3.46,46.42 0.32,43.36 4.66,42.73" fill="#ffffff"/><polygon points="64.20,36.20 66.14,40.13 70.48,40.76 67.34,43.82 68.08,48.14 64.20,46.10 60.32,48.14 61.06,43.82 57.92,40.76 62.26,40.13" fill="#14184a"/><polygon points="63.00,37.40 64.94,41.33 69.28,41.96 66.14,45.02 66.88,49.34 63.00,47.30 59.12,49.34 59.86,45.02 56.72,41.96 61.06,41.33" fill="#ffffff"/></g></g>
<polygon points="340.80,174.00 342.27,176.98 345.56,177.45 343.18,179.77 343.74,183.05 340.80,181.50 337.86,183.05 338.42,179.77 336.04,177.45 339.33,176.98" fill="#667099"/><polygon points="349.78,174.00 351.25,176.98 354.54,177.45 352.16,179.77 352.72,183.05 349.78,181.50 346.84,183.05 347.40,179.77 345.02,177.45 348.31,176.98" fill="#667099"/><polygon points="358.76,174.00 360.23,176.98 363.52,177.45 361.14,179.77 361.70,183.05 358.76,181.50 355.82,183.05 356.38,179.77 354.00,177.45 357.29,176.98" fill="#667099"/><polygon points="367.74,174.00 369.21,176.98 372.50,177.45 370.12,179.77 370.68,183.05 367.74,181.50 364.80,183.05 365.36,179.77 362.98,177.45 366.27,176.98" fill="#667099"/><polygon points="376.72,174.00 378.19,176.98 381.48,177.45 379.10,179.77 379.66,183.05 376.72,181.50 373.78,183.05 374.34,179.77 371.96,177.45 375.25,176.98" fill="#667099"/>
<g transform="translate(337.00,192)"><path d="M84,2.5 h2.400 v52.300 h-84 v-2.800 h81.600z" fill="#171b25" opacity="0.850"/><path d="M86.400,3.500 h1.200 v52.500 h-84 v-1.200 h82.800z" fill="#171b25" opacity="0.450"/><path d="M87.600,4.500 h0.800 v52.300 h-83.400 v-0.800 h82.600z" fill="#171b25" opacity="0.200"/><rect width="13" height="52" fill="#3d4557"/><rect x="-1" y="37" width="14" height="16" fill="#434b5e"/><rect x="3" y="2" width="6.200" height="2.900" rx="0.400" fill="#232836"/><rect x="3" y="8" width="6.200" height="2.900" rx="0.400" fill="#232836"/><rect x="3" y="14" width="6.200" height="2.900" rx="0.400" fill="#232836"/><rect x="3" y="20" width="6.200" height="2.900" rx="0.400" fill="#232836"/><rect x="3" y="26" width="6.200" height="2.900" rx="0.400" fill="#232836"/><rect x="3" y="32" width="6.200" height="2.900" rx="0.400" fill="#232836"/><path d="M5.800,39.800 h4.800 l-2.800,4 h2.800 l-8.400,7.400 l2.600,-5.600 h-2.600 z" fill="#222735"/><g transform="translate(13,0)" clip-path="url(#tc)"><rect width="71" height="52" fill="url(#gGold)"/><rect width="71" height="52" fill="url(#gGoldL)"/><ellipse cx="4.7" cy="2.3" rx="20" ry="5" transform="rotate(-40 4 2)" fill="none" stroke="#6a4c04" stroke-width="1" opacity="0.8"/><ellipse cx="4" cy="2" rx="20" ry="5" transform="rotate(-40 4 2)" fill="none" stroke="#ffe81c" stroke-width="1.1"/><ellipse cx="10.7" cy="6.3" rx="25" ry="6.5" transform="rotate(-40 10 6)" fill="none" stroke="#6a4c04" stroke-width="1" opacity="0.8"/><ellipse cx="10" cy="6" rx="25" ry="6.5" transform="rotate(-40 10 6)" fill="none" stroke="#ffe81c" stroke-width="1.1"/><ellipse cx="27.099999999999998" cy="18.5" rx="24" ry="3.2" transform="rotate(-44 26.4 18.2)" fill="none" stroke="#6a4c04" stroke-width="1" opacity="0.8"/><ellipse cx="26.4" cy="18.2" rx="24" ry="3.2" transform="rotate(-44 26.4 18.2)" fill="none" stroke="#ffe81c" stroke-width="1.1"/><ellipse cx="32.900000000000006" cy="22.8" rx="25" ry="3.6" transform="rotate(-49.5 32.2 22.5)" fill="none" stroke="#6a4c04" stroke-width="1" opacity="0.8"/><ellipse cx="32.2" cy="22.5" rx="25" ry="3.6" transform="rotate(-49.5 32.2 22.5)" fill="none" stroke="#ffe81c" stroke-width="1.1"/><ellipse cx="42.6" cy="30.6" rx="18" ry="2.6" transform="rotate(-49 41.9 30.3)" fill="none" stroke="#6a4c04" stroke-width="1" opacity="0.8"/><ellipse cx="41.9" cy="30.3" rx="18" ry="2.6" transform="rotate(-49 41.9 30.3)" fill="none" stroke="#ffe81c" stroke-width="1.1"/><ellipse cx="49.900000000000006" cy="34.599999999999994" rx="24" ry="4" transform="rotate(-46 49.2 34.3)" fill="none" stroke="#6a4c04" stroke-width="1" opacity="0.8"/><ellipse cx="49.2" cy="34.3" rx="24" ry="4" transform="rotate(-46 49.2 34.3)" fill="none" stroke="#ffe81c" stroke-width="1.1"/><ellipse cx="56.2" cy="39.699999999999996" rx="20" ry="3.4" transform="rotate(-39 55.5 39.4)" fill="none" stroke="#6a4c04" stroke-width="1" opacity="0.8"/><ellipse cx="55.5" cy="39.4" rx="20" ry="3.4" transform="rotate(-39 55.5 39.4)" fill="none" stroke="#ffe81c" stroke-width="1.1"/><ellipse cx="62.7" cy="46.3" rx="18" ry="3.2" transform="rotate(-40 62 46)" fill="none" stroke="#6a4c04" stroke-width="1" opacity="0.8"/><ellipse cx="62" cy="46" rx="18" ry="3.2" transform="rotate(-40 62 46)" fill="none" stroke="#ffe81c" stroke-width="1.1"/><ellipse cx="70.7" cy="52.3" rx="14" ry="3" transform="rotate(-40 70 52)" fill="none" stroke="#6a4c04" stroke-width="1" opacity="0.8"/><ellipse cx="70" cy="52" rx="14" ry="3" transform="rotate(-40 70 52)" fill="none" stroke="#ffe81c" stroke-width="1.1"/><polygon points="27.0,26.0 34.5,17.5 45.4,25.6 38.5,35.4" fill="#377fd8" /><text x="36.3" y="29.62" font-size="9" font-weight="bold" text-anchor="middle" fill="#6ec1f7" stroke="#6ec1f7" stroke-width="0.49" stroke-linejoin="round" opacity="1" transform="rotate(35 36.3 26.4)">A</text></g></g>
<polygon points="476.80,174.00 478.27,176.98 481.56,177.45 479.18,179.77 479.74,183.05 476.80,181.50 473.86,183.05 474.42,179.77 472.04,177.45 475.33,176.98" fill="#667099"/><polygon points="485.78,174.00 487.25,176.98 490.54,177.45 488.16,179.77 488.72,183.05 485.78,181.50 482.84,183.05 483.40,179.77 481.02,177.45 484.31,176.98" fill="#667099"/><polygon points="494.76,174.00 496.23,176.98 499.52,177.45 497.14,179.77 497.70,183.05 494.76,181.50 491.82,183.05 492.38,179.77 490.00,177.45 493.29,176.98" fill="#667099"/><polygon points="503.74,174.00 505.21,176.98 508.50,177.45 506.12,179.77 506.68,183.05 503.74,181.50 500.80,183.05 501.36,179.77 498.98,177.45 502.27,176.98" fill="#667099"/><polygon points="512.72,174.00 514.19,176.98 517.48,177.45 515.10,179.77 515.66,183.05 512.72,181.50 509.78,183.05 510.34,179.77 507.96,177.45 511.25,176.98" fill="#667099"/>
<g transform="translate(473.00,192)"><path d="M84,2.5 h2.400 v52.300 h-84 v-2.800 h81.600z" fill="#171b25" opacity="0.850"/><path d="M86.400,3.500 h1.200 v52.500 h-84 v-1.200 h82.800z" fill="#171b25" opacity="0.450"/><path d="M87.600,4.500 h0.800 v52.300 h-83.400 v-0.800 h82.600z" fill="#171b25" opacity="0.200"/><rect width="13" height="52" fill="#3d4557"/><rect x="-1" y="37" width="14" height="16" fill="#434b5e"/><rect x="3" y="2" width="6.200" height="2.900" rx="0.400" fill="#232836"/><rect x="3" y="8" width="6.200" height="2.900" rx="0.400" fill="#232836"/><rect x="3" y="14" width="6.200" height="2.900" rx="0.400" fill="#232836"/><rect x="3" y="20" width="6.200" height="2.900" rx="0.400" fill="#232836"/><rect x="3" y="26" width="6.200" height="2.900" rx="0.400" fill="#232836"/><rect x="3" y="32" width="6.200" height="2.900" rx="0.400" fill="#232836"/><path d="M5.800,39.800 h4.800 l-2.800,4 h2.800 l-8.400,7.400 l2.600,-5.600 h-2.600 z" fill="#222735"/><g transform="translate(13,0)" clip-path="url(#tc)"><rect width="71" height="52" fill="#000"/><rect width="52" height="52" fill="url(#pGrid)"/><rect width="71" height="52" fill="url(#gGridFade)"/><rect x="20.4" y="15.2" width="27" height="26.2" fill="#22c81a" opacity="0.450"/><rect x="20.4" y="15.2" width="27" height="26.2" fill="none" stroke="#38ff18" stroke-width="1.6"/><rect x="24" y="19" width="20" height="19" fill="none" stroke="#2cd814" stroke-width="1"/><polygon points="33.5,16.6 40.8,17.6 40.8,29.8 33.5,31.0" fill="#2f6fc4" /><text x="37" y="26.86" font-size="8" font-weight="bold" text-anchor="middle" fill="#5aa6e0" stroke="#5aa6e0" stroke-width="0.44" stroke-linejoin="round" opacity="1">A</text><polygon points="9.0,17.5 34.7,18.4 34.4,35.6 9.3,38.2" fill="#3173cc" /><text x="22.4" y="33.01" font-size="14" font-weight="bold" text-anchor="middle" fill="#62b0ec" stroke="#62b0ec" stroke-width="0.77" stroke-linejoin="round" opacity="1">A</text><path d="M45.8,19.5 L43.8,50.2 M51,17.5 L49.9,29.8" stroke="#c87820" stroke-width="1.1"/><polygon points="61.3,18.4 70.9,19.5 70.9,42.3 61.8,39.4" fill="#3173cc" /><polygon points="23.3,43.6 32.1,40.3 42.3,43.6 33.5,48.0" fill="#9a98bc" /><polygon points="53.4,44.0 65.6,43.6 70.9,48.7 70.9,50.9 59.8,49.4" fill="#9a98bc" /></g></g>
<polygon points="613.80,174.00 615.27,176.98 618.56,177.45 616.18,179.77 616.74,183.05 613.80,181.50 610.86,183.05 611.42,179.77 609.04,177.45 612.33,176.98" fill="#667099"/><polygon points="622.78,174.00 624.25,176.98 627.54,177.45 625.16,179.77 625.72,183.05 622.78,181.50 619.84,183.05 620.40,179.77 618.02,177.45 621.31,176.98" fill="#667099"/><polygon points="631.76,174.00 633.23,176.98 636.52,177.45 634.14,179.77 634.70,183.05 631.76,181.50 628.82,183.05 629.38,179.77 627.00,177.45 630.29,176.98" fill="#667099"/><polygon points="640.74,174.00 642.21,176.98 645.50,177.45 643.12,179.77 643.68,183.05 640.74,181.50 637.80,183.05 638.36,179.77 635.98,177.45 639.27,176.98" fill="#667099"/><polygon points="649.72,174.00 651.19,176.98 654.48,177.45 652.10,179.77 652.66,183.05 649.72,181.50 646.78,183.05 647.34,179.77 644.96,177.45 648.25,176.98" fill="#667099"/>
<g transform="translate(610.00,192)"><path d="M84,2.5 h2.400 v52.300 h-84 v-2.800 h81.600z" fill="#171b25" opacity="0.850"/><path d="M86.400,3.500 h1.200 v52.500 h-84 v-1.200 h82.800z" fill="#171b25" opacity="0.450"/><path d="M87.600,4.500 h0.800 v52.300 h-83.400 v-0.800 h82.600z" fill="#171b25" opacity="0.200"/><rect width="13" height="52" fill="#3d4557"/><rect x="-1" y="37" width="14" height="16" fill="#434b5e"/><rect x="3" y="2" width="6.200" height="2.900" rx="0.400" fill="#232836"/><rect x="3" y="8" width="6.200" height="2.900" rx="0.400" fill="#232836"/><rect x="3" y="14" width="6.200" height="2.900" rx="0.400" fill="#232836"/><rect x="3" y="20" width="6.200" height="2.900" rx="0.400" fill="#232836"/><rect x="3" y="26" width="6.200" height="2.900" rx="0.400" fill="#232836"/><rect x="3" y="32" width="6.200" height="2.900" rx="0.400" fill="#232836"/><path d="M5.800,39.800 h4.800 l-2.800,4 h2.800 l-8.400,7.400 l2.600,-5.600 h-2.600 z" fill="#222735"/><g transform="translate(13,0)" clip-path="url(#tc)"><rect width="71" height="52" fill="#377fd8"/><text x="43.5" y="39.66" font-size="22.5" font-weight="bold" text-anchor="middle" fill="#6ec1f7" stroke="#6ec1f7" stroke-width="1.24" stroke-linejoin="round" opacity="1">A</text><rect width="32" height="52" fill="url(#gMetal)"/><rect width="32" height="52" fill="url(#gMetalV)"/><rect x="3" y="0" width="0.5" height="52" fill="#222" opacity="0.35"/><rect x="6.5" y="0" width="0.5" height="52" fill="#ddd" opacity="0.35"/><rect x="9" y="0" width="0.5" height="52" fill="#333" opacity="0.35"/><rect x="13" y="0" width="0.5" height="52" fill="#eee" opacity="0.35"/><rect x="16" y="0" width="0.5" height="52" fill="#444" opacity="0.35"/><rect x="19.5" y="0" width="0.5" height="52" fill="#fff" opacity="0.35"/><rect x="23" y="0" width="0.5" height="52" fill="#555" opacity="0.35"/><rect x="26" y="0" width="0.5" height="52" fill="#eee" opacity="0.35"/><rect x="29" y="0" width="0.5" height="52" fill="#444" opacity="0.35"/><path d="M12,0 Q8,26 13,52" stroke="#d8d0c8" stroke-width="0.5" fill="none" opacity="0.6"/><path d="M19,0 Q10,26 17,52" stroke="#55524c" stroke-width="0.6" fill="none" opacity="0.6"/><path d="M32,0 L40,0.500 A26,26 0 0 1 56,22 L32,32 Z" fill="url(#gSaw)"/><path d="M32,14 A9,11 0 0 1 32,37.500 Z" fill="#d6d2cc" opacity="0.75"/></g></g>
<polygon points="749.80,174.00 751.27,176.98 754.56,177.45 752.18,179.77 752.74,183.05 749.80,181.50 746.86,183.05 747.42,179.77 745.04,177.45 748.33,176.98" fill="#667099"/><polygon points="758.78,174.00 760.25,176.98 763.54,177.45 761.16,179.77 761.72,183.05 758.78,181.50 755.84,183.05 756.40,179.77 754.02,177.45 757.31,176.98" fill="#667099"/><polygon points="767.76,174.00 769.23,176.98 772.52,177.45 770.14,179.77 770.70,183.05 767.76,181.50 764.82,183.05 765.38,179.77 763.00,177.45 766.29,176.98" fill="#667099"/><polygon points="776.74,174.00 778.21,176.98 781.50,177.45 779.12,179.77 779.68,183.05 776.74,181.50 773.80,183.05 774.36,179.77 771.98,177.45 775.27,176.98" fill="#667099"/><polygon points="785.72,174.00 787.19,176.98 790.48,177.45 788.10,179.77 788.66,183.05 785.72,181.50 782.78,183.05 783.34,179.77 780.96,177.45 784.25,176.98" fill="#667099"/>
<g transform="translate(746.00,192)"><path d="M84,2.5 h2.400 v52.300 h-84 v-2.800 h81.600z" fill="#171b25" opacity="0.850"/><path d="M86.400,3.500 h1.200 v52.500 h-84 v-1.200 h82.800z" fill="#171b25" opacity="0.450"/><path d="M87.600,4.500 h0.800 v52.300 h-83.400 v-0.800 h82.600z" fill="#171b25" opacity="0.200"/><rect width="13" height="52" fill="#3d4557"/><rect x="-1" y="37" width="14" height="16" fill="#434b5e"/><rect x="3" y="2" width="6.200" height="2.900" rx="0.400" fill="#232836"/><rect x="3" y="8" width="6.200" height="2.900" rx="0.400" fill="#232836"/><rect x="3" y="14" width="6.200" height="2.900" rx="0.400" fill="#232836"/><rect x="3" y="20" width="6.200" height="2.900" rx="0.400" fill="#232836"/><rect x="3" y="26" width="6.200" height="2.900" rx="0.400" fill="#232836"/><rect x="3" y="32" width="6.200" height="2.900" rx="0.400" fill="#232836"/><path d="M5.800,39.800 h4.800 l-2.800,4 h2.800 l-8.400,7.400 l2.600,-5.600 h-2.600 z" fill="#222735"/><g transform="translate(13,0)" clip-path="url(#tc)"><rect width="71" height="52" fill="url(#gEq)"/><ellipse cx="3" cy="14" rx="3" ry="8" fill="#40b0ff" opacity="0.55" transform="rotate(20 3 14)"/><rect x="8.500" y="6.100" width="54.800" height="39.700" fill="#377fd8"/><circle cx="19" cy="4" r="3" fill="#70e8e0" opacity="0.9"/><circle cx="37.300" cy="2.600" r="3.600" fill="#e8e880" opacity="0.9"/><circle cx="66.500" cy="11.400" r="2.400" fill="#ff50e0"/><circle cx="52" cy="9" r="2" fill="#c8c060" opacity="0.6"/><text x="36.5" y="35.88" font-size="22" font-weight="bold" text-anchor="middle" fill="#5ab4f4" stroke="#5ab4f4" stroke-width="1.21" stroke-linejoin="round" opacity="1">A</text><rect x="30.3" y="3.4" width="40.7" height="6.2" rx="1.2" fill="url(#gBar)"/><rect x="20.8" y="12.3" width="50.2" height="6.4" rx="1.2" fill="url(#gBar)"/><rect x="13.3" y="22.3" width="57.7" height="6.4" rx="1.2" fill="url(#gBar)"/><rect x="17.5" y="31.8" width="53.5" height="6" rx="1.2" fill="url(#gBar)"/><rect x="18.3" y="41.5" width="52.7" height="6.4" rx="1.2" fill="url(#gBar)"/><rect y="47" width="71" height="5" fill="#1c3c98" opacity="0.9"/><path d="M2,50 h10 M20,51 h14 M40,50 h8 M52,51 h12" stroke="#50a0a0" stroke-width="0.6" opacity="0.7"/></g></g>
<polygon points="885.80,174.00 887.27,176.98 890.56,177.45 888.18,179.77 888.74,183.05 885.80,181.50 882.86,183.05 883.42,179.77 881.04,177.45 884.33,176.98" fill="#667099"/><polygon points="894.78,174.00 896.25,176.98 899.54,177.45 897.16,179.77 897.72,183.05 894.78,181.50 891.84,183.05 892.40,179.77 890.02,177.45 893.31,176.98" fill="#667099"/><polygon points="903.76,174.00 905.23,176.98 908.52,177.45 906.14,179.77 906.70,183.05 903.76,181.50 900.82,183.05 901.38,179.77 899.00,177.45 902.29,176.98" fill="#667099"/><polygon points="912.74,174.00 914.21,176.98 917.50,177.45 915.12,179.77 915.68,183.05 912.74,181.50 909.80,183.05 910.36,179.77 907.98,177.45 911.27,176.98" fill="#667099"/><polygon points="921.72,174.00 923.19,176.98 926.48,177.45 924.10,179.77 924.66,183.05 921.72,181.50 918.78,183.05 919.34,179.77 916.96,177.45 920.25,176.98" fill="#667099"/>
<g transform="translate(882.00,192)"><path d="M84,2.5 h2.400 v52.300 h-84 v-2.800 h81.600z" fill="#171b25" opacity="0.850"/><path d="M86.400,3.500 h1.200 v52.500 h-84 v-1.200 h82.800z" fill="#171b25" opacity="0.450"/><path d="M87.600,4.500 h0.800 v52.300 h-83.400 v-0.800 h82.600z" fill="#171b25" opacity="0.200"/><rect width="13" height="52" fill="#3d4557"/><rect x="-1" y="37" width="14" height="16" fill="#434b5e"/><rect x="3" y="2" width="6.200" height="2.900" rx="0.400" fill="#232836"/><rect x="3" y="8" width="6.200" height="2.900" rx="0.400" fill="#232836"/><rect x="3" y="14" width="6.200" height="2.900" rx="0.400" fill="#232836"/><rect x="3" y="20" width="6.200" height="2.900" rx="0.400" fill="#232836"/><rect x="3" y="26" width="6.200" height="2.900" rx="0.400" fill="#232836"/><rect x="3" y="32" width="6.200" height="2.900" rx="0.400" fill="#232836"/><path d="M5.800,39.800 h4.800 l-2.800,4 h2.800 l-8.400,7.400 l2.600,-5.600 h-2.600 z" fill="#222735"/><g transform="translate(13,0)" clip-path="url(#tc)"><rect width="71" height="52" fill="#ff9f38"/><rect x="25" y="12.500" width="18.500" height="27.700" fill="#ffc478"/><polygon points="23.3,16.0 53.7,14.0 53.1,38.8 21.6,36.7" fill="#377fd8" /><text x="36.2" y="32.51" font-size="16.5" font-weight="bold" text-anchor="middle" fill="#6ec1f7" stroke="#6ec1f7" stroke-width="0.91" stroke-linejoin="round" opacity="1">A</text></g></g>
<polygon points="1022.80,174.00 1024.27,176.98 1027.56,177.45 1025.18,179.77 1025.74,183.05 1022.80,181.50 1019.86,183.05 1020.42,179.77 1018.04,177.45 1021.33,176.98" fill="#667099"/><polygon points="1031.78,174.00 1033.25,176.98 1036.54,177.45 1034.16,179.77 1034.72,183.05 1031.78,181.50 1028.84,183.05 1029.40,179.77 1027.02,177.45 1030.31,176.98" fill="#667099"/><polygon points="1040.76,174.00 1042.23,176.98 1045.52,177.45 1043.14,179.77 1043.70,183.05 1040.76,181.50 1037.82,183.05 1038.38,179.77 1036.00,177.45 1039.29,176.98" fill="#667099"/><polygon points="1049.74,174.00 1051.21,176.98 1054.50,177.45 1052.12,179.77 1052.68,183.05 1049.74,181.50 1046.80,183.05 1047.36,179.77 1044.98,177.45 1048.27,176.98" fill="#667099"/><polygon points="1058.72,174.00 1060.19,176.98 1063.48,177.45 1061.10,179.77 1061.66,183.05 1058.72,181.50 1055.78,183.05 1056.34,179.77 1053.96,177.45 1057.25,176.98" fill="#667099"/>
<g transform="translate(1019.00,192)"><path d="M84,2.5 h2.400 v52.300 h-84 v-2.800 h81.600z" fill="#171b25" opacity="0.850"/><path d="M86.400,3.500 h1.200 v52.500 h-84 v-1.200 h82.800z" fill="#171b25" opacity="0.450"/><path d="M87.600,4.500 h0.800 v52.300 h-83.400 v-0.800 h82.600z" fill="#171b25" opacity="0.200"/><rect width="13" height="52" fill="#3d4557"/><rect x="-1" y="37" width="14" height="16" fill="#434b5e"/><rect x="3" y="2" width="6.200" height="2.900" rx="0.400" fill="#232836"/><rect x="3" y="8" width="6.200" height="2.900" rx="0.400" fill="#232836"/><rect x="3" y="14" width="6.200" height="2.900" rx="0.400" fill="#232836"/><rect x="3" y="20" width="6.200" height="2.900" rx="0.400" fill="#232836"/><rect x="3" y="26" width="6.200" height="2.900" rx="0.400" fill="#232836"/><rect x="3" y="32" width="6.200" height="2.900" rx="0.400" fill="#232836"/><path d="M5.800,39.800 h4.800 l-2.800,4 h2.800 l-8.400,7.400 l2.600,-5.600 h-2.600 z" fill="#222735"/><g transform="translate(13,0)" clip-path="url(#tc)"><rect width="71" height="52" fill="url(#gSky)"/><path d="M2,30 Q20,12 40,6 M6,44 Q26,24 52,12 M20,50 Q36,34 60,22" stroke="#fff" stroke-width="4" fill="none" opacity="0.22" stroke-linecap="round" filter="url(#fT1)"/><polygon points="16.60,4.40 17.87,8.05 21.74,8.13 18.65,10.47 19.77,14.17 16.60,11.96 13.43,14.17 14.55,10.47 11.46,8.13 15.33,8.05" fill="#ffffff"/><polygon points="34.40,4.40 35.67,8.05 39.54,8.13 36.45,10.47 37.57,14.17 34.40,11.96 31.23,14.17 32.35,10.47 29.26,8.13 33.13,8.05" fill="#ffffff"/><polygon points="52.80,4.40 54.07,8.05 57.94,8.13 54.85,10.47 55.97,14.17 52.80,11.96 49.63,14.17 50.75,10.47 47.66,8.13 51.53,8.05" fill="#ffffff"/><polygon points="13.10,19.40 14.84,24.41 20.14,24.51 15.92,27.71 17.45,32.79 13.10,29.76 8.75,32.79 10.28,27.71 6.06,24.51 11.36,24.41" fill="#ffffff"/><polygon points="33.80,19.40 35.54,24.41 40.84,24.51 36.62,27.71 38.15,32.79 33.80,29.76 29.45,32.79 30.98,27.71 26.76,24.51 32.06,24.41" fill="#ffffff"/><polygon points="55.40,19.40 57.14,24.41 62.44,24.51 58.22,27.71 59.75,32.79 55.40,29.76 51.05,32.79 52.58,27.71 48.36,24.51 53.66,24.41" fill="#ffffff"/><polygon points="8.75,40.50 11.10,47.26 18.26,47.41 12.55,51.74 14.63,58.59 8.75,54.50 2.87,58.59 4.95,51.74 -0.76,47.41 6.40,47.26" fill="#ffffff"/><polygon points="33.50,40.50 35.85,47.26 43.01,47.41 37.30,51.74 39.38,58.59 33.50,54.50 27.62,58.59 29.70,51.74 23.99,47.41 31.15,47.26" fill="#ffffff"/><polygon points="59.80,40.50 62.15,47.26 69.31,47.41 63.60,51.74 65.68,58.59 59.80,54.50 53.92,58.59 56.00,51.74 50.29,47.41 57.45,47.26" fill="#ffffff"/><path d="M15,0.300 h3 M33,0.300 h4 M52,0.300 h2" stroke="#fff" stroke-width="0.8"/></g></g>
<polygon points="67.80,282.70 69.27,285.68 72.56,286.15 70.18,288.47 70.74,291.75 67.80,290.20 64.86,291.75 65.42,288.47 63.04,286.15 66.33,285.68" fill="#667099"/><polygon points="76.78,282.70 78.25,285.68 81.54,286.15 79.16,288.47 79.72,291.75 76.78,290.20 73.84,291.75 74.40,288.47 72.02,286.15 75.31,285.68" fill="#667099"/><polygon points="85.76,282.70 87.23,285.68 90.52,286.15 88.14,288.47 88.70,291.75 85.76,290.20 82.82,291.75 83.38,288.47 81.00,286.15 84.29,285.68" fill="#667099"/><polygon points="94.74,282.70 96.21,285.68 99.50,286.15 97.12,288.47 97.68,291.75 94.74,290.20 91.80,291.75 92.36,288.47 89.98,286.15 93.27,285.68" fill="#667099"/><polygon points="103.72,282.70 105.19,285.68 108.48,286.15 106.10,288.47 106.66,291.75 103.72,290.20 100.78,291.75 101.34,288.47 98.96,286.15 102.25,285.68" fill="#667099"/>
<g transform="translate(64.00,301)"><path d="M84,2.5 h2.400 v52.300 h-84 v-2.800 h81.600z" fill="#171b25" opacity="0.850"/><path d="M86.400,3.500 h1.200 v52.500 h-84 v-1.200 h82.800z" fill="#171b25" opacity="0.450"/><path d="M87.600,4.500 h0.800 v52.300 h-83.400 v-0.800 h82.600z" fill="#171b25" opacity="0.200"/><rect width="13" height="52" fill="#3d4557"/><rect x="-1" y="37" width="14" height="16" fill="#434b5e"/><rect x="3" y="2" width="6.200" height="2.900" rx="0.400" fill="#232836"/><rect x="3" y="8" width="6.200" height="2.900" rx="0.400" fill="#232836"/><rect x="3" y="14" width="6.200" height="2.900" rx="0.400" fill="#232836"/><rect x="3" y="20" width="6.200" height="2.900" rx="0.400" fill="#232836"/><rect x="3" y="26" width="6.200" height="2.900" rx="0.400" fill="#232836"/><rect x="3" y="32" width="6.200" height="2.900" rx="0.400" fill="#232836"/><path d="M5.800,39.800 h4.800 l-2.800,4 h2.800 l-8.400,7.400 l2.600,-5.600 h-2.600 z" fill="#222735"/><g transform="translate(13,0)" clip-path="url(#tc)"><rect width="71" height="52" fill="url(#gGold2)"/><rect width="71" height="52" fill="url(#gGold2b)"/><g filter="url(#fT1)" opacity="0.35"><ellipse cx="11.7" cy="35.9" rx="4.5" ry="2.0" fill="#8a6418"/><ellipse cx="70.3" cy="24.7" rx="5.9" ry="1.4" fill="#8a6418"/><ellipse cx="56.0" cy="0.7" rx="5.7" ry="1.9" fill="#8a6418"/><ellipse cx="56.4" cy="12.1" rx="2.9" ry="1.1" fill="#966e1c"/><ellipse cx="43.7" cy="1.8" rx="3.3" ry="2.0" fill="#e8b840"/><ellipse cx="46.1" cy="48.8" rx="2.1" ry="2.5" fill="#e8b840"/><ellipse cx="8.9" cy="48.3" rx="3.8" ry="2.1" fill="#d8a838"/><ellipse cx="28.5" cy="7.9" rx="4.7" ry="1.9" fill="#8a6418"/><ellipse cx="5.3" cy="10.3" rx="4.7" ry="2.6" fill="#e8b840"/><ellipse cx="8.7" cy="24.8" rx="5.3" ry="1.4" fill="#8a6418"/><ellipse cx="63.0" cy="21.3" rx="3.5" ry="1.9" fill="#966e1c"/><ellipse cx="22.6" cy="25.2" rx="3.1" ry="2.7" fill="#8a6418"/><ellipse cx="51.0" cy="51.6" rx="4.0" ry="2.0" fill="#8a6418"/><ellipse cx="40.6" cy="16.6" rx="5.9" ry="1.2" fill="#8a6418"/><ellipse cx="44.5" cy="43.4" rx="3.3" ry="2.5" fill="#d8a838"/><ellipse cx="17.4" cy="8.8" rx="5.7" ry="1.3" fill="#966e1c"/><ellipse cx="26.6" cy="35.5" rx="4.7" ry="2.8" fill="#8a6418"/><ellipse cx="28.9" cy="51.4" rx="5.8" ry="2.2" fill="#d8a838"/><ellipse cx="34.9" cy="19.5" rx="3.0" ry="2.8" fill="#8a6418"/><ellipse cx="39.9" cy="22.8" rx="3.6" ry="2.5" fill="#e8b840"/><ellipse cx="59.4" cy="2.7" rx="3.0" ry="1.6" fill="#966e1c"/><ellipse cx="17.7" cy="20.5" rx="5.5" ry="2.3" fill="#8a6418"/><ellipse cx="69.8" cy="38.8" rx="3.9" ry="1.5" fill="#966e1c"/><ellipse cx="2.0" cy="11.0" rx="5.4" ry="2.6" fill="#d8a838"/><ellipse cx="42.7" cy="22.2" rx="4.3" ry="2.7" fill="#d8a838"/><ellipse cx="9.9" cy="30.6" rx="2.6" ry="2.4" fill="#966e1c"/><ellipse cx="48.7" cy="49.6" rx="2.1" ry="2.2" fill="#8a6418"/><ellipse cx="60.5" cy="30.4" rx="3.0" ry="1.8" fill="#8a6418"/><ellipse cx="9.5" cy="4.9" rx="2.4" ry="1.1" fill="#966e1c"/><ellipse cx="55.8" cy="3.7" rx="2.5" ry="1.6" fill="#d8a838"/><ellipse cx="38.2" cy="16.9" rx="4.0" ry="1.4" fill="#8a6418"/><ellipse cx="12.9" cy="44.6" rx="2.8" ry="2.5" fill="#e8b840"/><ellipse cx="42.9" cy="26.3" rx="5.0" ry="1.1" fill="#e8b840"/><ellipse cx="27.5" cy="45.0" rx="3.6" ry="2.1" fill="#8a6418"/><ellipse cx="18.0" cy="36.2" rx="3.3" ry="1.1" fill="#966e1c"/><ellipse cx="11.1" cy="37.8" rx="6.0" ry="2.6" fill="#966e1c"/><ellipse cx="67.3" cy="5.1" rx="4.4" ry="2.0" fill="#d8a838"/><ellipse cx="68.7" cy="16.1" rx="4.8" ry="2.1" fill="#8a6418"/><ellipse cx="4.5" cy="42.4" rx="5.9" ry="1.7" fill="#d8a838"/><ellipse cx="46.7" cy="21.9" rx="5.5" ry="2.3" fill="#966e1c"/></g><polygon points="19.5,23.5 43.8,10.4 53.7,27.6 29.2,41.0" fill="#377fd8" /><text x="36.6" y="31.77" font-size="15" font-weight="bold" text-anchor="middle" fill="#84ccfa" stroke="#84ccfa" stroke-width="0.82" stroke-linejoin="round" opacity="1" transform="rotate(-27 36.6 26.4)">A</text><ellipse cx="35.700" cy="25.400" rx="21" ry="16" fill="none" stroke="#3aa898" stroke-width="0.6" stroke-dasharray="1.4 0.7" transform="rotate(-25 35.7 25.4)" opacity="0.85"/><ellipse cx="35.700" cy="25.400" rx="20" ry="17.500" fill="none" stroke="#3aa898" stroke-width="0.55" stroke-dasharray="1.4 0.7" transform="rotate(30 35.7 25.4)" opacity="0.7"/><ellipse cx="35.700" cy="24.400" rx="20.500" ry="3.600" fill="none" stroke="#30b8a0" stroke-width="0.9" transform="rotate(-9 35.7 24.4)"/></g></g>
<polygon points="204.30,282.70 205.77,285.68 209.06,286.15 206.68,288.47 207.24,291.75 204.30,290.20 201.36,291.75 201.92,288.47 199.54,286.15 202.83,285.68" fill="#667099"/><polygon points="213.28,282.70 214.75,285.68 218.04,286.15 215.66,288.47 216.22,291.75 213.28,290.20 210.34,291.75 210.90,288.47 208.52,286.15 211.81,285.68" fill="#667099"/><polygon points="222.26,282.70 223.73,285.68 227.02,286.15 224.64,288.47 225.20,291.75 222.26,290.20 219.32,291.75 219.88,288.47 217.50,286.15 220.79,285.68" fill="#667099"/><polygon points="231.24,282.70 232.71,285.68 236.00,286.15 233.62,288.47 234.18,291.75 231.24,290.20 228.30,291.75 228.86,288.47 226.48,286.15 229.77,285.68" fill="#667099"/><polygon points="240.22,282.70 241.69,285.68 244.98,286.15 242.60,288.47 243.16,291.75 240.22,290.20 237.28,291.75 237.84,288.47 235.46,286.15 238.75,285.68" fill="#667099"/>
<g transform="translate(200.50,301)"><path d="M84,2.5 h2.400 v52.300 h-84 v-2.800 h81.600z" fill="#171b25" opacity="0.850"/><path d="M86.400,3.500 h1.200 v52.500 h-84 v-1.200 h82.800z" fill="#171b25" opacity="0.450"/><path d="M87.600,4.500 h0.800 v52.300 h-83.400 v-0.800 h82.600z" fill="#171b25" opacity="0.200"/><rect width="13" height="52" fill="#3d4557"/><rect x="-1" y="37" width="14" height="16" fill="#434b5e"/><rect x="3" y="2" width="6.200" height="2.900" rx="0.400" fill="#232836"/><rect x="3" y="8" width="6.200" height="2.900" rx="0.400" fill="#232836"/><rect x="3" y="14" width="6.200" height="2.900" rx="0.400" fill="#232836"/><rect x="3" y="20" width="6.200" height="2.900" rx="0.400" fill="#232836"/><rect x="3" y="26" width="6.200" height="2.900" rx="0.400" fill="#232836"/><rect x="3" y="32" width="6.200" height="2.900" rx="0.400" fill="#232836"/><path d="M5.800,39.800 h4.800 l-2.800,4 h2.800 l-8.400,7.400 l2.600,-5.600 h-2.600 z" fill="#222735"/><g transform="translate(13,0)" clip-path="url(#tc)"><rect width="71" height="52" fill="#020402"/><rect width="71" height="52" fill="url(#pMatrix)" opacity="0.9"/><rect x="1.5" y="5.1" width="11.3" height="7.9" fill="#4a2c10"/><text x="7.15" y="11.68" font-size="6.5" font-weight="bold" text-anchor="middle" fill="#6a4420" stroke="#6a4420" stroke-width="0.36" stroke-linejoin="round" opacity="1">B</text><rect x="34.1" y="0" width="14.0" height="8.9" fill="#183c72"/><text x="41.1" y="7.08" font-size="6.5" font-weight="bold" text-anchor="middle" fill="#2e64a4" stroke="#2e64a4" stroke-width="0.36" stroke-linejoin="round" opacity="1">A</text><rect x="19.8" y="13.6" width="15.2" height="11.4" fill="#c07c30"/><text x="27.4" y="21.93" font-size="6.5" font-weight="bold" text-anchor="middle" fill="#d8a060" stroke="#d8a060" stroke-width="0.36" stroke-linejoin="round" opacity="1">B</text><rect x="50.5" y="16.2" width="13.7" height="9.6" fill="#173a74"/><text x="57.35" y="23.63" font-size="6.5" font-weight="bold" text-anchor="middle" fill="#2e66a8" stroke="#2e66a8" stroke-width="0.36" stroke-linejoin="round" opacity="1">A</text><rect x="56.3" y="33.7" width="14.7" height="11.1" fill="#b87428"/><text x="63.65" y="41.88" font-size="6.5" font-weight="bold" text-anchor="middle" fill="#d49c58" stroke="#d49c58" stroke-width="0.36" stroke-linejoin="round" opacity="1">B</text></g></g>
<polygon points="340.80,282.70 342.27,285.68 345.56,286.15 343.18,288.47 343.74,291.75 340.80,290.20 337.86,291.75 338.42,288.47 336.04,286.15 339.33,285.68" fill="#6e7792"/><polygon points="349.78,282.70 351.25,285.68 354.54,286.15 352.16,288.47 352.72,291.75 349.78,290.20 346.84,291.75 347.40,288.47 345.02,286.15 348.31,285.68" fill="#6e7792"/><polygon points="358.76,282.70 360.23,285.68 363.52,286.15 361.14,288.47 361.70,291.75 358.76,290.20 355.82,291.75 356.38,288.47 354.00,286.15 357.29,285.68" fill="#6e7792"/><polygon points="367.74,282.70 369.21,285.68 372.50,286.15 370.12,288.47 370.68,291.75 367.74,290.20 364.80,291.75 365.36,288.47 362.98,286.15 366.27,285.68" fill="#6e7792"/><polygon points="376.72,282.70 378.19,285.68 381.48,286.15 379.10,288.47 379.66,291.75 376.72,290.20 373.78,291.75 374.34,288.47 371.96,286.15 375.25,285.68" fill="#6e7792"/>
<g transform="translate(337.00,301)"><path d="M84,2.5 h2.400 v52.300 h-84 v-2.800 h81.600z" fill="#171b25" opacity="0.850"/><path d="M86.400,3.500 h1.200 v52.500 h-84 v-1.200 h82.800z" fill="#171b25" opacity="0.450"/><path d="M87.600,4.500 h0.800 v52.300 h-83.400 v-0.800 h82.600z" fill="#171b25" opacity="0.200"/><rect width="13" height="52" fill="#3d4557"/><rect x="-1" y="37" width="14" height="16" fill="#434b5e"/><rect x="3" y="2" width="6.200" height="2.900" rx="0.400" fill="#232836"/><rect x="3" y="8" width="6.200" height="2.900" rx="0.400" fill="#232836"/><rect x="3" y="14" width="6.200" height="2.900" rx="0.400" fill="#232836"/><rect x="3" y="20" width="6.200" height="2.900" rx="0.400" fill="#232836"/><rect x="3" y="26" width="6.200" height="2.900" rx="0.400" fill="#232836"/><rect x="3" y="32" width="6.200" height="2.900" rx="0.400" fill="#232836"/><path d="M5.800,39.800 h4.800 l-2.800,4 h2.800 l-8.400,7.400 l2.600,-5.600 h-2.600 z" fill="#222735"/><g transform="translate(13,0)" clip-path="url(#tc)"><rect width="71" height="52" fill="#456c64"/><g filter="url(#fT3)"><ellipse cx="-2" cy="0" rx="20" ry="14" fill="#8ad03c"/><ellipse cx="74" cy="-2" rx="22" ry="14" fill="#2c3818"/><ellipse cx="38" cy="-1" rx="16" ry="6" fill="#4e7672"/><ellipse cx="-2" cy="54" rx="20" ry="12" fill="#8ed43e"/><ellipse cx="74" cy="54" rx="16" ry="10" fill="#4e6026"/><ellipse cx="6" cy="33" rx="10" ry="6" fill="#84cc9c"/><ellipse cx="66" cy="30" rx="10" ry="9" fill="#3a566c"/></g><g filter="url(#fT1)"><path d="M6,30 Q16,14 36,12 Q56,12 66,26 L64,34 Q54,43 34,44 Q16,43 6,32Z" fill="#5c9c84" opacity="0.8"/><path d="M4,41 Q30,50 64,39 L64,44 Q34,53 4,46Z" fill="#60ac80"/><circle cx="36.2" cy="26.1" r="20" fill="#3a9032"/><circle cx="36.2" cy="26.1" r="17.4" fill="#103616"/><circle cx="36.2" cy="26.1" r="15" fill="#267c30"/><circle cx="36.2" cy="26.1" r="11.5" fill="#1a5622"/><circle cx="36.2" cy="26.1" r="9" fill="#369c40"/></g><g filter="url(#fT1b)"><path d="M-2,23 Q14,7 36,5.500 Q58,6 73,21 L73,28 Q58,14.500 36,14 Q15,15 -2,30Z" fill="#080a16"/><ellipse cx="38" cy="13" rx="20" ry="4.500" fill="#080a16" opacity="0.800"/><circle cx="36.500" cy="23.900" r="4.700" fill="#000201"/></g><g filter="url(#fT05)"><circle cx="25.2" cy="29.5" r="1.2" fill="#165020" opacity="0.7"/><circle cx="36.9" cy="39.9" r="0.7" fill="#165020" opacity="0.7"/><circle cx="30.7" cy="38.3" r="0.7" fill="#3cae50" opacity="0.7"/><circle cx="43.3" cy="34.9" r="1.2" fill="#4cc458" opacity="0.7"/><circle cx="32.9" cy="35.7" r="0.9" fill="#0e3014" opacity="0.7"/><circle cx="30.8" cy="38.6" r="0.6" fill="#4cc458" opacity="0.7"/><circle cx="39.5" cy="34.4" r="0.6" fill="#165020" opacity="0.7"/><circle cx="40.6" cy="37.0" r="0.7" fill="#0e3014" opacity="0.7"/><circle cx="31.4" cy="36.0" r="1.1" fill="#165020" opacity="0.7"/><circle cx="30.4" cy="17.6" r="1.0" fill="#4cc458" opacity="0.7"/><circle cx="30.6" cy="33.8" r="0.8" fill="#3cae50" opacity="0.7"/><circle cx="46.8" cy="30.5" r="0.7" fill="#4cc458" opacity="0.7"/><circle cx="42.0" cy="17.8" r="1.3" fill="#4cc458" opacity="0.7"/><circle cx="45.3" cy="37.3" r="0.6" fill="#165020" opacity="0.7"/><circle cx="26.2" cy="28.2" r="0.7" fill="#0e3014" opacity="0.7"/><circle cx="37.8" cy="17.1" r="0.7" fill="#3cae50" opacity="0.7"/><circle cx="45.8" cy="29.7" r="1.2" fill="#0e3014" opacity="0.7"/><circle cx="40.6" cy="32.6" r="0.6" fill="#165020" opacity="0.7"/><circle cx="41.2" cy="36.4" r="0.9" fill="#0e3014" opacity="0.7"/><circle cx="23.3" cy="28.7" r="0.9" fill="#165020" opacity="0.7"/><circle cx="44.6" cy="32.2" r="0.7" fill="#3cae50" opacity="0.7"/><circle cx="45.9" cy="15.0" r="1.0" fill="#4cc458" opacity="0.7"/><circle cx="42.7" cy="33.9" r="1.2" fill="#4cc458" opacity="0.7"/><circle cx="43.6" cy="29.5" r="0.9" fill="#4cc458" opacity="0.7"/><circle cx="37.6" cy="16.6" r="0.8" fill="#4cc458" opacity="0.7"/><circle cx="43.8" cy="30.4" r="1.0" fill="#4cc458" opacity="0.7"/><circle cx="32.8" cy="35.5" r="0.9" fill="#165020" opacity="0.7"/><circle cx="40.2" cy="19.1" r="0.9" fill="#0e3014" opacity="0.7"/><circle cx="39.9" cy="34.1" r="1.0" fill="#0e3014" opacity="0.7"/><circle cx="45.1" cy="34.2" r="1.0" fill="#165020" opacity="0.7"/><circle cx="44.9" cy="18.1" r="0.9" fill="#4cc458" opacity="0.7"/><circle cx="45.3" cy="32.4" r="0.8" fill="#165020" opacity="0.7"/><circle cx="43.5" cy="37.5" r="1.0" fill="#3cae50" opacity="0.7"/><circle cx="21.9" cy="24.3" r="1.3" fill="#0e3014" opacity="0.7"/><circle cx="43.1" cy="35.3" r="1.2" fill="#4cc458" opacity="0.7"/><circle cx="43.2" cy="38.6" r="0.7" fill="#4cc458" opacity="0.7"/><circle cx="45.5" cy="30.4" r="0.8" fill="#4cc458" opacity="0.7"/><circle cx="43.2" cy="33.1" r="1.0" fill="#0e3014" opacity="0.7"/><circle cx="43.1" cy="30.4" r="0.9" fill="#3cae50" opacity="0.7"/><circle cx="29.3" cy="15.7" r="1.0" fill="#0e3014" opacity="0.7"/><circle cx="31.7" cy="39.8" r="0.9" fill="#3cae50" opacity="0.7"/><circle cx="27.7" cy="38.1" r="0.6" fill="#4cc458" opacity="0.7"/><circle cx="23.4" cy="27.5" r="0.8" fill="#4cc458" opacity="0.7"/><circle cx="46.1" cy="31.7" r="1.1" fill="#0e3014" opacity="0.7"/><circle cx="25.3" cy="35.4" r="0.8" fill="#165020" opacity="0.7"/><circle cx="47.5" cy="17.9" r="0.9" fill="#4cc458" opacity="0.7"/><rect x="26" y="19" width="6.300" height="6.300" fill="#a4ffac" transform="rotate(-6 29 22)"/><circle cx="36.500" cy="26.600" r="0.600" fill="#6aa8e0"/><circle cx="34.600" cy="28.600" r="0.500" fill="#5a98d0"/><circle cx="38.400" cy="28.600" r="0.500" fill="#5a98d0"/><path d="M14,46 l-3,5 M20,47.500 l-2,4.500 M26,48 l-1,4 M32,48.500 v3.500 M38,48.500 l1,3.500 M44,47.500 l2,4 M50,46 l3,4" stroke="#284858" stroke-width="0.800" opacity="0.400"/></g><path d="M0.300,52 V0.300 H70.700" fill="none" stroke="#2a3048" stroke-width="0.600"/></g></g>
<polygon points="476.80,282.70 478.27,285.68 481.56,286.15 479.18,288.47 479.74,291.75 476.80,290.20 473.86,291.75 474.42,288.47 472.04,286.15 475.33,285.68" fill="#667099"/><polygon points="485.78,282.70 487.25,285.68 490.54,286.15 488.16,288.47 488.72,291.75 485.78,290.20 482.84,291.75 483.40,288.47 481.02,286.15 484.31,285.68" fill="#667099"/><polygon points="494.76,282.70 496.23,285.68 499.52,286.15 497.14,288.47 497.70,291.75 494.76,290.20 491.82,291.75 492.38,288.47 490.00,286.15 493.29,285.68" fill="#667099"/><polygon points="503.74,282.70 505.21,285.68 508.50,286.15 506.12,288.47 506.68,291.75 503.74,290.20 500.80,291.75 501.36,288.47 498.98,286.15 502.27,285.68" fill="#667099"/><polygon points="512.72,282.70 514.19,285.68 517.48,286.15 515.10,288.47 515.66,291.75 512.72,290.20 509.78,291.75 510.34,288.47 507.96,286.15 511.25,285.68" fill="#667099"/>
<g transform="translate(473.00,301)"><path d="M84,2.5 h2.400 v52.300 h-84 v-2.800 h81.600z" fill="#171b25" opacity="0.850"/><path d="M86.400,3.500 h1.200 v52.500 h-84 v-1.200 h82.800z" fill="#171b25" opacity="0.450"/><path d="M87.600,4.500 h0.800 v52.300 h-83.400 v-0.800 h82.600z" fill="#171b25" opacity="0.200"/><rect width="13" height="52" fill="#3d4557"/><rect x="-1" y="37" width="14" height="16" fill="#434b5e"/><rect x="3" y="2" width="6.200" height="2.900" rx="0.400" fill="#232836"/><rect x="3" y="8" width="6.200" height="2.900" rx="0.400" fill="#232836"/><rect x="3" y="14" width="6.200" height="2.900" rx="0.400" fill="#232836"/><rect x="3" y="20" width="6.200" height="2.900" rx="0.400" fill="#232836"/><rect x="3" y="26" width="6.200" height="2.900" rx="0.400" fill="#232836"/><rect x="3" y="32" width="6.200" height="2.900" rx="0.400" fill="#232836"/><path d="M5.800,39.800 h4.800 l-2.800,4 h2.800 l-8.400,7.400 l2.600,-5.600 h-2.600 z" fill="#222735"/><g transform="translate(13,0)" clip-path="url(#tc)"><rect width="71" height="52" fill="url(#gSnow)"/><circle cx="44.2" cy="38.6" r="0.9" fill="#a8b8c8" opacity="0.43"/><circle cx="52.5" cy="48.0" r="0.3" fill="#a8b8c8" opacity="0.29"/><circle cx="67.0" cy="33.7" r="0.9" fill="#a8b8c8" opacity="0.18"/><circle cx="33.3" cy="12.8" r="0.7" fill="#a8b8c8" opacity="0.32"/><circle cx="0.9" cy="11.3" r="0.5" fill="#a8b8c8" opacity="0.42"/><circle cx="54.4" cy="8.3" r="0.9" fill="#a8b8c8" opacity="0.19"/><circle cx="43.8" cy="6.6" r="0.3" fill="#a8b8c8" opacity="0.41"/><circle cx="14.9" cy="11.2" r="1.0" fill="#a8b8c8" opacity="0.41"/><circle cx="20.5" cy="50.0" r="0.7" fill="#a8b8c8" opacity="0.35"/><circle cx="14.5" cy="48.9" r="0.8" fill="#a8b8c8" opacity="0.44"/><circle cx="63.5" cy="15.5" r="0.6" fill="#a8b8c8" opacity="0.20"/><circle cx="10.3" cy="3.4" r="0.5" fill="#a8b8c8" opacity="0.33"/><circle cx="0.2" cy="35.3" r="0.5" fill="#a8b8c8" opacity="0.24"/><circle cx="58.1" cy="25.0" r="0.5" fill="#a8b8c8" opacity="0.29"/><circle cx="50.0" cy="3.0" r="1.0" fill="#a8b8c8" opacity="0.16"/><circle cx="53.2" cy="43.9" r="0.3" fill="#a8b8c8" opacity="0.39"/><circle cx="26.0" cy="30.1" r="0.3" fill="#a8b8c8" opacity="0.16"/><circle cx="12.8" cy="49.7" r="0.4" fill="#a8b8c8" opacity="0.38"/><circle cx="66.0" cy="49.0" r="0.5" fill="#a8b8c8" opacity="0.26"/><circle cx="37.3" cy="40.3" r="0.4" fill="#a8b8c8" opacity="0.37"/><circle cx="56.6" cy="44.7" r="0.3" fill="#a8b8c8" opacity="0.43"/><circle cx="6.5" cy="17.7" r="0.7" fill="#a8b8c8" opacity="0.43"/><circle cx="24.1" cy="48.1" r="0.7" fill="#a8b8c8" opacity="0.24"/><circle cx="22.5" cy="9.2" r="0.4" fill="#a8b8c8" opacity="0.19"/><circle cx="48.9" cy="51.8" r="0.4" fill="#a8b8c8" opacity="0.16"/><circle cx="70.1" cy="27.7" r="0.6" fill="#a8b8c8" opacity="0.22"/><circle cx="42.2" cy="43.0" r="0.6" fill="#a8b8c8" opacity="0.28"/><circle cx="4.0" cy="47.6" r="0.3" fill="#a8b8c8" opacity="0.30"/><circle cx="59.5" cy="6.8" r="0.8" fill="#a8b8c8" opacity="0.43"/><circle cx="44.8" cy="41.0" r="0.4" fill="#a8b8c8" opacity="0.28"/><circle cx="10.6" cy="43.9" r="0.5" fill="#a8b8c8" opacity="0.29"/><circle cx="71.0" cy="44.3" r="1.0" fill="#a8b8c8" opacity="0.29"/><circle cx="34.7" cy="37.9" r="0.6" fill="#a8b8c8" opacity="0.24"/><circle cx="28.7" cy="7.6" r="0.6" fill="#a8b8c8" opacity="0.45"/><circle cx="68.1" cy="32.6" r="0.6" fill="#a8b8c8" opacity="0.25"/><circle cx="6.3" cy="14.2" r="0.8" fill="#a8b8c8" opacity="0.41"/><circle cx="25.7" cy="40.9" r="0.8" fill="#a8b8c8" opacity="0.36"/><circle cx="47.1" cy="39.5" r="0.6" fill="#a8b8c8" opacity="0.36"/><circle cx="19.9" cy="25.3" r="0.8" fill="#a8b8c8" opacity="0.36"/><circle cx="20.9" cy="49.2" r="0.8" fill="#a8b8c8" opacity="0.32"/><circle cx="0.8" cy="28.4" r="0.5" fill="#a8b8c8" opacity="0.35"/><circle cx="32.9" cy="42.5" r="0.8" fill="#a8b8c8" opacity="0.39"/><circle cx="24.7" cy="33.5" r="0.8" fill="#a8b8c8" opacity="0.40"/><circle cx="24.9" cy="43.8" r="0.9" fill="#a8b8c8" opacity="0.36"/><circle cx="69.3" cy="49.7" r="0.7" fill="#a8b8c8" opacity="0.31"/><circle cx="11.8" cy="43.5" r="1.0" fill="#a8b8c8" opacity="0.29"/><circle cx="49.1" cy="37.4" r="0.8" fill="#a8b8c8" opacity="0.20"/><circle cx="55.4" cy="30.2" r="0.8" fill="#a8b8c8" opacity="0.28"/><circle cx="44.3" cy="40.3" r="0.7" fill="#a8b8c8" opacity="0.37"/><circle cx="2.0" cy="8.3" r="0.6" fill="#a8b8c8" opacity="0.35"/><circle cx="15.6" cy="35.7" r="0.7" fill="#a8b8c8" opacity="0.16"/><circle cx="33.5" cy="11.8" r="0.3" fill="#a8b8c8" opacity="0.19"/><circle cx="22.5" cy="9.4" r="0.4" fill="#a8b8c8" opacity="0.16"/><circle cx="33.0" cy="19.8" r="0.7" fill="#a8b8c8" opacity="0.33"/><circle cx="16.9" cy="47.0" r="0.3" fill="#a8b8c8" opacity="0.27"/><circle cx="19.8" cy="21.3" r="0.4" fill="#a8b8c8" opacity="0.40"/><circle cx="26.5" cy="1.9" r="0.7" fill="#a8b8c8" opacity="0.18"/><circle cx="38.7" cy="17.6" r="0.7" fill="#a8b8c8" opacity="0.44"/><circle cx="58.1" cy="21.8" r="0.9" fill="#a8b8c8" opacity="0.34"/><circle cx="26.2" cy="7.4" r="0.7" fill="#a8b8c8" opacity="0.32"/><circle cx="68.0" cy="50.3" r="0.7" fill="#a8b8c8" opacity="0.26"/><circle cx="63.4" cy="0.0" r="0.4" fill="#a8b8c8" opacity="0.32"/><circle cx="43.7" cy="7.3" r="0.7" fill="#a8b8c8" opacity="0.42"/><circle cx="26.7" cy="22.4" r="0.5" fill="#a8b8c8" opacity="0.24"/><circle cx="69.0" cy="19.7" r="1.0" fill="#a8b8c8" opacity="0.42"/><circle cx="42.3" cy="13.5" r="1.0" fill="#a8b8c8" opacity="0.30"/><circle cx="29.5" cy="16.6" r="1.0" fill="#a8b8c8" opacity="0.30"/><circle cx="20.3" cy="24.8" r="0.4" fill="#a8b8c8" opacity="0.34"/><circle cx="31.5" cy="15.2" r="0.8" fill="#a8b8c8" opacity="0.40"/><circle cx="0.9" cy="27.7" r="0.5" fill="#a8b8c8" opacity="0.43"/><circle cx="55.5" cy="12.8" r="0.5" fill="#a8b8c8" opacity="0.20"/><circle cx="70.2" cy="15.2" r="0.7" fill="#a8b8c8" opacity="0.29"/><circle cx="45.8" cy="31.4" r="0.8" fill="#a8b8c8" opacity="0.19"/><circle cx="54.0" cy="15.6" r="0.7" fill="#a8b8c8" opacity="0.25"/><circle cx="21.1" cy="27.6" r="0.6" fill="#a8b8c8" opacity="0.26"/><circle cx="52.9" cy="30.7" r="0.3" fill="#a8b8c8" opacity="0.23"/><circle cx="32.3" cy="47.7" r="0.9" fill="#a8b8c8" opacity="0.31"/><circle cx="1.0" cy="40.5" r="0.6" fill="#a8b8c8" opacity="0.32"/><circle cx="50.3" cy="32.9" r="0.6" fill="#a8b8c8" opacity="0.42"/><circle cx="27.4" cy="20.4" r="0.9" fill="#a8b8c8" opacity="0.21"/><circle cx="21.0" cy="43.2" r="0.3" fill="#a8b8c8" opacity="0.40"/><circle cx="49.3" cy="22.5" r="0.5" fill="#a8b8c8" opacity="0.38"/><circle cx="64.7" cy="7.4" r="0.6" fill="#a8b8c8" opacity="0.31"/><circle cx="35.3" cy="17.2" r="0.4" fill="#a8b8c8" opacity="0.33"/><circle cx="57.6" cy="3.6" r="0.5" fill="#a8b8c8" opacity="0.40"/><circle cx="56.2" cy="34.5" r="0.3" fill="#a8b8c8" opacity="0.37"/><circle cx="69.5" cy="51.9" r="0.8" fill="#a8b8c8" opacity="0.16"/><circle cx="59.8" cy="11.4" r="0.8" fill="#a8b8c8" opacity="0.44"/><circle cx="50.6" cy="7.0" r="0.5" fill="#a8b8c8" opacity="0.43"/><circle cx="10.6" cy="31.8" r="0.6" fill="#a8b8c8" opacity="0.20"/><circle cx="44.2" cy="2.3" r="0.4" fill="#a8b8c8" opacity="0.26"/><circle cx="5.1" cy="3.0" r="0.7" fill="#a8b8c8" opacity="0.37"/><circle cx="62.4" cy="7.0" r="0.6" fill="#a8b8c8" opacity="0.24"/><circle cx="42.6" cy="25.5" r="1.0" fill="#a8b8c8" opacity="0.26"/><circle cx="4.0" cy="36.3" r="0.4" fill="#a8b8c8" opacity="0.34"/><circle cx="35.9" cy="47.3" r="0.7" fill="#a8b8c8" opacity="0.34"/><circle cx="18.7" cy="28.7" r="0.5" fill="#a8b8c8" opacity="0.38"/><circle cx="36.7" cy="7.0" r="0.5" fill="#a8b8c8" opacity="0.26"/><circle cx="52.3" cy="9.3" r="0.8" fill="#a8b8c8" opacity="0.35"/><circle cx="6.1" cy="34.7" r="0.4" fill="#a8b8c8" opacity="0.19"/><circle cx="42.2" cy="12.4" r="0.9" fill="#a8b8c8" opacity="0.29"/><circle cx="23.0" cy="41.4" r="0.3" fill="#a8b8c8" opacity="0.37"/><circle cx="3.8" cy="7.8" r="1.0" fill="#a8b8c8" opacity="0.35"/><circle cx="15.8" cy="6.0" r="1.0" fill="#a8b8c8" opacity="0.35"/><circle cx="58.3" cy="7.3" r="0.7" fill="#a8b8c8" opacity="0.26"/><circle cx="16.7" cy="17.3" r="0.7" fill="#a8b8c8" opacity="0.25"/><circle cx="27.4" cy="7.1" r="0.9" fill="#a8b8c8" opacity="0.34"/><circle cx="57.1" cy="22.5" r="0.9" fill="#a8b8c8" opacity="0.31"/><circle cx="42.1" cy="29.8" r="0.8" fill="#a8b8c8" opacity="0.27"/><circle cx="6.9" cy="1.7" r="0.4" fill="#a8b8c8" opacity="0.16"/><circle cx="63.1" cy="25.0" r="0.8" fill="#a8b8c8" opacity="0.15"/><circle cx="33.4" cy="46.3" r="0.7" fill="#a8b8c8" opacity="0.28"/><circle cx="33.1" cy="5.2" r="0.4" fill="#a8b8c8" opacity="0.20"/><circle cx="26.6" cy="20.1" r="0.9" fill="#a8b8c8" opacity="0.20"/><circle cx="18.0" cy="14.4" r="0.4" fill="#a8b8c8" opacity="0.24"/><circle cx="16.7" cy="25.1" r="0.3" fill="#a8b8c8" opacity="0.43"/><circle cx="26.2" cy="48.8" r="0.8" fill="#a8b8c8" opacity="0.35"/><circle cx="33.5" cy="49.2" r="0.4" fill="#a8b8c8" opacity="0.35"/><circle cx="20.7" cy="35.1" r="0.8" fill="#a8b8c8" opacity="0.20"/><circle cx="14.3" cy="1.3" r="0.5" fill="#a8b8c8" opacity="0.17"/><circle cx="28.5" cy="50.6" r="0.6" fill="#a8b8c8" opacity="0.24"/><circle cx="33.2" cy="14.7" r="0.8" fill="#a8b8c8" opacity="0.37"/><circle cx="11.6" cy="12.5" r="0.8" fill="#a8b8c8" opacity="0.43"/><circle cx="45.9" cy="22.4" r="1.0" fill="#a8b8c8" opacity="0.15"/><circle cx="4.3" cy="40.5" r="0.6" fill="#a8b8c8" opacity="0.16"/><circle cx="38.9" cy="51.5" r="0.7" fill="#a8b8c8" opacity="0.26"/><circle cx="6.7" cy="3.7" r="0.9" fill="#a8b8c8" opacity="0.30"/><circle cx="66.4" cy="2.8" r="0.5" fill="#a8b8c8" opacity="0.17"/><circle cx="28.2" cy="3.1" r="0.5" fill="#a8b8c8" opacity="0.27"/><circle cx="21.7" cy="2.7" r="0.3" fill="#a8b8c8" opacity="0.44"/><circle cx="12.7" cy="26.4" r="0.6" fill="#a8b8c8" opacity="0.31"/><circle cx="6.0" cy="16.3" r="0.4" fill="#a8b8c8" opacity="0.31"/><circle cx="65.4" cy="31.1" r="0.9" fill="#a8b8c8" opacity="0.21"/><circle cx="1.2" cy="28.1" r="0.6" fill="#a8b8c8" opacity="0.32"/><circle cx="26.7" cy="32.5" r="0.8" fill="#a8b8c8" opacity="0.42"/><circle cx="21.8" cy="23.4" r="0.9" fill="#a8b8c8" opacity="0.22"/><circle cx="8.2" cy="16.2" r="0.4" fill="#a8b8c8" opacity="0.38"/><circle cx="58.2" cy="16.3" r="0.4" fill="#a8b8c8" opacity="0.17"/><circle cx="17.4" cy="4.4" r="0.6" fill="#a8b8c8" opacity="0.32"/><circle cx="17.4" cy="3.2" r="0.8" fill="#a8b8c8" opacity="0.16"/><circle cx="14.2" cy="14.9" r="0.6" fill="#a8b8c8" opacity="0.18"/><circle cx="29.9" cy="16.3" r="0.8" fill="#a8b8c8" opacity="0.32"/><circle cx="63.6" cy="34.0" r="0.8" fill="#a8b8c8" opacity="0.32"/><circle cx="31.4" cy="42.5" r="0.8" fill="#a8b8c8" opacity="0.44"/><circle cx="51.7" cy="36.5" r="0.5" fill="#a8b8c8" opacity="0.39"/><circle cx="27.2" cy="6.8" r="0.3" fill="#a8b8c8" opacity="0.20"/><circle cx="18.6" cy="35.1" r="0.5" fill="#a8b8c8" opacity="0.17"/><circle cx="54.2" cy="29.0" r="0.3" fill="#a8b8c8" opacity="0.17"/><circle cx="9.2" cy="18.6" r="0.9" fill="#a8b8c8" opacity="0.43"/><circle cx="43.5" cy="12.0" r="0.6" fill="#a8b8c8" opacity="0.26"/><g transform="translate(23.9,39.8) rotate(10)" stroke="#78767c" stroke-linecap="round" fill="none"><g transform="rotate(0)"><path d="M0,0 V-8.5" stroke-width="1.10"/><path d="M0,-3.83 l-2.38,-2.12 M0,-3.83 l2.38,-2.12 M0,-6.12 l-2.21,-1.87 M0,-6.12 l2.21,-1.87" stroke-width="1.02"/></g><g transform="rotate(60)"><path d="M0,0 V-8.5" stroke-width="1.10"/><path d="M0,-3.83 l-2.38,-2.12 M0,-3.83 l2.38,-2.12 M0,-6.12 l-2.21,-1.87 M0,-6.12 l2.21,-1.87" stroke-width="1.02"/></g><g transform="rotate(120)"><path d="M0,0 V-8.5" stroke-width="1.10"/><path d="M0,-3.83 l-2.38,-2.12 M0,-3.83 l2.38,-2.12 M0,-6.12 l-2.21,-1.87 M0,-6.12 l2.21,-1.87" stroke-width="1.02"/></g><g transform="rotate(180)"><path d="M0,0 V-8.5" stroke-width="1.10"/><path d="M0,-3.83 l-2.38,-2.12 M0,-3.83 l2.38,-2.12 M0,-6.12 l-2.21,-1.87 M0,-6.12 l2.21,-1.87" stroke-width="1.02"/></g><g transform="rotate(240)"><path d="M0,0 V-8.5" stroke-width="1.10"/><path d="M0,-3.83 l-2.38,-2.12 M0,-3.83 l2.38,-2.12 M0,-6.12 l-2.21,-1.87 M0,-6.12 l2.21,-1.87" stroke-width="1.02"/></g><g transform="rotate(300)"><path d="M0,0 V-8.5" stroke-width="1.10"/><path d="M0,-3.83 l-2.38,-2.12 M0,-3.83 l2.38,-2.12 M0,-6.12 l-2.21,-1.87 M0,-6.12 l2.21,-1.87" stroke-width="1.02"/></g></g><g transform="translate(41.1,20.9) rotate(22)" stroke="#ffffff" stroke-linecap="round" fill="none"><g transform="rotate(0)"><path d="M0,0 V-8.6" stroke-width="1.12"/><path d="M0,-3.87 l-2.41,-2.15 M0,-3.87 l2.41,-2.15 M0,-6.19 l-2.24,-1.89 M0,-6.19 l2.24,-1.89" stroke-width="1.03"/></g><g transform="rotate(60)"><path d="M0,0 V-8.6" stroke-width="1.12"/><path d="M0,-3.87 l-2.41,-2.15 M0,-3.87 l2.41,-2.15 M0,-6.19 l-2.24,-1.89 M0,-6.19 l2.24,-1.89" stroke-width="1.03"/></g><g transform="rotate(120)"><path d="M0,0 V-8.6" stroke-width="1.12"/><path d="M0,-3.87 l-2.41,-2.15 M0,-3.87 l2.41,-2.15 M0,-6.19 l-2.24,-1.89 M0,-6.19 l2.24,-1.89" stroke-width="1.03"/></g><g transform="rotate(180)"><path d="M0,0 V-8.6" stroke-width="1.12"/><path d="M0,-3.87 l-2.41,-2.15 M0,-3.87 l2.41,-2.15 M0,-6.19 l-2.24,-1.89 M0,-6.19 l2.24,-1.89" stroke-width="1.03"/></g><g transform="rotate(240)"><path d="M0,0 V-8.6" stroke-width="1.12"/><path d="M0,-3.87 l-2.41,-2.15 M0,-3.87 l2.41,-2.15 M0,-6.19 l-2.24,-1.89 M0,-6.19 l2.24,-1.89" stroke-width="1.03"/></g><g transform="rotate(300)"><path d="M0,0 V-8.6" stroke-width="1.12"/><path d="M0,-3.87 l-2.41,-2.15 M0,-3.87 l2.41,-2.15 M0,-6.19 l-2.24,-1.89 M0,-6.19 l2.24,-1.89" stroke-width="1.03"/></g></g><g transform="translate(40.5,45.5) rotate(5)" stroke="#ffffff" stroke-linecap="round" fill="none"><g transform="rotate(0)"><path d="M0,0 V-8" stroke-width="1.04"/><path d="M0,-3.60 l-2.24,-2.00 M0,-3.60 l2.24,-2.00 M0,-5.76 l-2.08,-1.76 M0,-5.76 l2.08,-1.76" stroke-width="0.96"/></g><g transform="rotate(60)"><path d="M0,0 V-8" stroke-width="1.04"/><path d="M0,-3.60 l-2.24,-2.00 M0,-3.60 l2.24,-2.00 M0,-5.76 l-2.08,-1.76 M0,-5.76 l2.08,-1.76" stroke-width="0.96"/></g><g transform="rotate(120)"><path d="M0,0 V-8" stroke-width="1.04"/><path d="M0,-3.60 l-2.24,-2.00 M0,-3.60 l2.24,-2.00 M0,-5.76 l-2.08,-1.76 M0,-5.76 l2.08,-1.76" stroke-width="0.96"/></g><g transform="rotate(180)"><path d="M0,0 V-8" stroke-width="1.04"/><path d="M0,-3.60 l-2.24,-2.00 M0,-3.60 l2.24,-2.00 M0,-5.76 l-2.08,-1.76 M0,-5.76 l2.08,-1.76" stroke-width="0.96"/></g><g transform="rotate(240)"><path d="M0,0 V-8" stroke-width="1.04"/><path d="M0,-3.60 l-2.24,-2.00 M0,-3.60 l2.24,-2.00 M0,-5.76 l-2.08,-1.76 M0,-5.76 l2.08,-1.76" stroke-width="0.96"/></g><g transform="rotate(300)"><path d="M0,0 V-8" stroke-width="1.04"/><path d="M0,-3.60 l-2.24,-2.00 M0,-3.60 l2.24,-2.00 M0,-5.76 l-2.08,-1.76 M0,-5.76 l2.08,-1.76" stroke-width="0.96"/></g></g><rect x="67.500" y="50.500" width="3.500" height="1.500" fill="#2a7cff"/></g></g>
<polygon points="613.80,282.70 615.27,285.68 618.56,286.15 616.18,288.47 616.74,291.75 613.80,290.20 610.86,291.75 611.42,288.47 609.04,286.15 612.33,285.68" fill="#667099"/><polygon points="622.78,282.70 624.25,285.68 627.54,286.15 625.16,288.47 625.72,291.75 622.78,290.20 619.84,291.75 620.40,288.47 618.02,286.15 621.31,285.68" fill="#667099"/><polygon points="631.76,282.70 633.23,285.68 636.52,286.15 634.14,288.47 634.70,291.75 631.76,290.20 628.82,291.75 629.38,288.47 627.00,286.15 630.29,285.68" fill="#667099"/><polygon points="640.74,282.70 642.21,285.68 645.50,286.15 643.12,288.47 643.68,291.75 640.74,290.20 637.80,291.75 638.36,288.47 635.98,286.15 639.27,285.68" fill="#667099"/><polygon points="649.72,282.70 651.19,285.68 654.48,286.15 652.10,288.47 652.66,291.75 649.72,290.20 646.78,291.75 647.34,288.47 644.96,286.15 648.25,285.68" fill="#667099"/>
<g transform="translate(610.00,301)"><path d="M84,2.5 h2.400 v52.300 h-84 v-2.800 h81.600z" fill="#171b25" opacity="0.850"/><path d="M86.400,3.500 h1.200 v52.500 h-84 v-1.200 h82.800z" fill="#171b25" opacity="0.450"/><path d="M87.600,4.500 h0.800 v52.300 h-83.400 v-0.800 h82.600z" fill="#171b25" opacity="0.200"/><rect width="13" height="52" fill="#3d4557"/><rect x="-1" y="37" width="14" height="16" fill="#434b5e"/><rect x="3" y="2" width="6.200" height="2.900" rx="0.400" fill="#232836"/><rect x="3" y="8" width="6.200" height="2.900" rx="0.400" fill="#232836"/><rect x="3" y="14" width="6.200" height="2.900" rx="0.400" fill="#232836"/><rect x="3" y="20" width="6.200" height="2.900" rx="0.400" fill="#232836"/><rect x="3" y="26" width="6.200" height="2.900" rx="0.400" fill="#232836"/><rect x="3" y="32" width="6.200" height="2.900" rx="0.400" fill="#232836"/><path d="M5.800,39.800 h4.800 l-2.800,4 h2.800 l-8.400,7.400 l2.600,-5.600 h-2.600 z" fill="#222735"/><g transform="translate(13,0)" clip-path="url(#tc)"><rect width="71" height="52" fill="url(#gWood)"/><path d="M14.7,0.900 L57,0.500 L58.800,3 L57.600,26 L58.600,50.200 L40,49.300 L37,47.400 L15.500,49 L14.900,30 Z" fill="url(#gPaper)"/><text x="36.800" y="12.800" font-family="Liberation Serif,serif" font-weight="bold" font-size="7.600" text-anchor="middle" fill="#6b5420" textLength="33" lengthAdjust="spacingAndGlyphs">WANTED</text><rect x="24.400" y="18.400" width="24.200" height="18.300" fill="#377fd8"/><text x="36.5" y="32.45" font-size="13" font-weight="bold" text-anchor="middle" fill="#9fdcff" stroke="#9fdcff" stroke-width="0.71" stroke-linejoin="round" opacity="1">A</text><circle cx="17.500" cy="3.500" r="0.900" fill="#44445a"/><circle cx="37.300" cy="47" r="0.900" fill="#44445a"/><path d="M57,2 l2,3 l-1.500,2 l1.500,3" stroke="#2a2218" stroke-width="1.400" fill="none"/></g></g>
<polygon points="749.80,282.70 751.27,285.68 754.56,286.15 752.18,288.47 752.74,291.75 749.80,290.20 746.86,291.75 747.42,288.47 745.04,286.15 748.33,285.68" fill="#667099"/><polygon points="758.78,282.70 760.25,285.68 763.54,286.15 761.16,288.47 761.72,291.75 758.78,290.20 755.84,291.75 756.40,288.47 754.02,286.15 757.31,285.68" fill="#667099"/><polygon points="767.76,282.70 769.23,285.68 772.52,286.15 770.14,288.47 770.70,291.75 767.76,290.20 764.82,291.75 765.38,288.47 763.00,286.15 766.29,285.68" fill="#667099"/><polygon points="776.74,282.70 778.21,285.68 781.50,286.15 779.12,288.47 779.68,291.75 776.74,290.20 773.80,291.75 774.36,288.47 771.98,286.15 775.27,285.68" fill="#667099"/><polygon points="785.72,282.70 787.19,285.68 790.48,286.15 788.10,288.47 788.66,291.75 785.72,290.20 782.78,291.75 783.34,288.47 780.96,286.15 784.25,285.68" fill="#667099"/>
<g transform="translate(746.00,301)"><path d="M84,2.5 h2.400 v52.300 h-84 v-2.800 h81.600z" fill="#171b25" opacity="0.850"/><path d="M86.400,3.500 h1.200 v52.500 h-84 v-1.200 h82.800z" fill="#171b25" opacity="0.450"/><path d="M87.600,4.500 h0.800 v52.300 h-83.400 v-0.800 h82.600z" fill="#171b25" opacity="0.200"/><rect width="13" height="52" fill="#3d4557"/><rect x="-1" y="37" width="14" height="16" fill="#434b5e"/><rect x="3" y="2" width="6.200" height="2.900" rx="0.400" fill="#232836"/><rect x="3" y="8" width="6.200" height="2.900" rx="0.400" fill="#232836"/><rect x="3" y="14" width="6.200" height="2.900" rx="0.400" fill="#232836"/><rect x="3" y="20" width="6.200" height="2.900" rx="0.400" fill="#232836"/><rect x="3" y="26" width="6.200" height="2.900" rx="0.400" fill="#232836"/><rect x="3" y="32" width="6.200" height="2.900" rx="0.400" fill="#232836"/><path d="M5.800,39.800 h4.800 l-2.800,4 h2.800 l-8.400,7.400 l2.600,-5.600 h-2.600 z" fill="#222735"/><g transform="translate(13,0)" clip-path="url(#tc)"><rect width="71" height="52" fill="#377fd8"/><polygon points="0.0,0.0 49.0,0.0 46.0,8.0 43.0,24.0 36.0,38.0 27.0,52.0 0.0,52.0" fill="#6a9e98" /><polygon points="20.0,0.0 49.0,0.0 46.0,8.0 44.0,22.0 30.0,20.0 14.0,18.0" fill="#78aaa2" opacity="0.6"/><polygon points="49.0,0.0 71.0,0.0 71.0,2.2 48.5,4.6" fill="#5a98a0" /><polygon points="47.0,11.0 68.0,9.0 60.0,24.5 44.0,23.0" fill="#4e8096" /><polygon points="68.0,9.0 71.0,9.0 71.0,14.0 63.0,27.0 60.0,24.5" fill="#5c6aba" /><polygon points="44.0,24.0 60.0,25.5 71.0,30.0 71.0,49.5 36.0,38.0" fill="#5a96a6" /><polygon points="44.0,24.0 50.0,24.6 49.0,43.0 36.0,38.0" fill="#6aaaa8" opacity="0.8"/><polygon points="0.0,0.0 30.0,0.0 9.0,10.0 1.0,10.0" fill="#eef0ee" /><polygon points="8.0,9.0 47.0,6.6 47.0,10.0 7.0,13.4" fill="#e2e6e4" /><polygon points="11.0,30.0 35.0,40.0 27.0,52.0 13.0,52.0 9.0,40.0" fill="#f0f2f0" /><polygon points="0.0,43.0 4.0,52.0 0.0,52.0" fill="#f0f2f0" /><rect x="5.7" y="4.9" width="0.8" height="1.6" fill="#1a1a1a" opacity="0.75" transform="rotate(25 5.7 4.9)"/><rect x="14.5" y="8.2" width="0.9" height="1.5" fill="#444" opacity="0.75" transform="rotate(25 14.5 8.2)"/><rect x="23.9" y="4.2" width="1.3" height="1.4" fill="#444" opacity="0.75" transform="rotate(25 23.9 4.2)"/><rect x="5.6" y="1.4" width="1.3" height="1.2" fill="#1a1a1a" opacity="0.75" transform="rotate(25 5.6 1.4)"/><rect x="16.1" y="0.6" width="1.2" height="1.5" fill="#6a9e98" opacity="0.75" transform="rotate(25 16.1 0.6)"/><rect x="18.7" y="7.4" width="0.7" height="1.6" fill="#888" opacity="0.75" transform="rotate(25 18.7 7.4)"/><rect x="17.1" y="8.3" width="0.9" height="1.9" fill="#888" opacity="0.75" transform="rotate(25 17.1 8.3)"/><rect x="23.1" y="1.2" width="0.8" height="0.7" fill="#888" opacity="0.75" transform="rotate(25 23.1 1.2)"/><rect x="5.2" y="8.7" width="0.9" height="1.6" fill="#6a9e98" opacity="0.75" transform="rotate(25 5.2 8.7)"/><rect x="10.1" y="7.5" width="1.0" height="1.5" fill="#888" opacity="0.75" transform="rotate(25 10.1 7.5)"/><rect x="14.0" y="8.1" width="1.1" height="2.1" fill="#6a9e98" opacity="0.75" transform="rotate(25 14.0 8.1)"/><rect x="23.8" y="6.0" width="0.6" height="2.0" fill="#1a1a1a" opacity="0.75" transform="rotate(25 23.8 6.0)"/><rect x="17.1" y="1.9" width="1.2" height="1.5" fill="#6a9e98" opacity="0.75" transform="rotate(25 17.1 1.9)"/><rect x="3.0" y="4.3" width="1.1" height="1.4" fill="#6a9e98" opacity="0.75" transform="rotate(25 3.0 4.3)"/><rect x="19.2" y="3.7" width="0.6" height="1.1" fill="#888" opacity="0.75" transform="rotate(25 19.2 3.7)"/><rect x="20.9" y="0.4" width="1.1" height="0.7" fill="#6a9e98" opacity="0.75" transform="rotate(25 20.9 0.4)"/><rect x="13.2" y="8.3" width="0.8" height="1.0" fill="#1a1a1a" opacity="0.75" transform="rotate(25 13.2 8.3)"/><rect x="7.4" y="0.7" width="1.0" height="0.7" fill="#444" opacity="0.75" transform="rotate(25 7.4 0.7)"/><rect x="23.3" y="2.6" width="0.7" height="1.7" fill="#6a9e98" opacity="0.75" transform="rotate(25 23.3 2.6)"/><rect x="7.5" y="8.6" width="1.3" height="1.2" fill="#888" opacity="0.75" transform="rotate(25 7.5 8.6)"/><rect x="20.9" y="3.5" width="1.3" height="1.7" fill="#1a1a1a" opacity="0.75" transform="rotate(25 20.9 3.5)"/><rect x="14.9" y="8.5" width="1.0" height="1.3" fill="#444" opacity="0.75" transform="rotate(25 14.9 8.5)"/><rect x="22.5" y="3.9" width="0.7" height="1.1" fill="#6a9e98" opacity="0.75" transform="rotate(25 22.5 3.9)"/><rect x="0.3" y="3.7" width="1.0" height="0.6" fill="#444" opacity="0.75" transform="rotate(25 0.3 3.7)"/><rect x="1.4" y="5.6" width="0.9" height="1.7" fill="#6a9e98" opacity="0.75" transform="rotate(25 1.4 5.6)"/><rect x="14.6" y="2.5" width="0.9" height="1.5" fill="#1a1a1a" opacity="0.75" transform="rotate(25 14.6 2.5)"/><rect x="23.1" y="2.3" width="0.9" height="1.5" fill="#6a9e98" opacity="0.75" transform="rotate(25 23.1 2.3)"/><rect x="4.3" y="1.7" width="1.2" height="2.0" fill="#6a9e98" opacity="0.75" transform="rotate(25 4.3 1.7)"/><rect x="7.2" y="3.4" width="1.2" height="0.6" fill="#444" opacity="0.75" transform="rotate(25 7.2 3.4)"/><rect x="7.4" y="2.0" width="1.2" height="1.0" fill="#444" opacity="0.75" transform="rotate(25 7.4 2.0)"/><rect x="16.3" y="5.8" width="0.6" height="1.6" fill="#6a9e98" opacity="0.75" transform="rotate(25 16.3 5.8)"/><rect x="16.2" y="2.0" width="1.2" height="2.1" fill="#1a1a1a" opacity="0.75" transform="rotate(25 16.2 2.0)"/><rect x="8.1" y="5.9" width="1.3" height="1.3" fill="#444" opacity="0.75" transform="rotate(25 8.1 5.9)"/><rect x="18.9" y="0.3" width="1.4" height="1.1" fill="#444" opacity="0.75" transform="rotate(25 18.9 0.3)"/><rect x="20.7" y="3.1" width="1.2" height="0.7" fill="#6a9e98" opacity="0.75" transform="rotate(25 20.7 3.1)"/><rect x="14.1" y="3.8" width="1.0" height="2.0" fill="#888" opacity="0.75" transform="rotate(25 14.1 3.8)"/><rect x="8.3" y="3.8" width="0.9" height="1.3" fill="#888" opacity="0.75" transform="rotate(25 8.3 3.8)"/><rect x="3.7" y="0.0" width="1.3" height="2.0" fill="#888" opacity="0.75" transform="rotate(25 3.7 0.0)"/><rect x="13.4" y="8.9" width="1.1" height="0.7" fill="#888" opacity="0.75" transform="rotate(25 13.4 8.9)"/><rect x="20.1" y="6.0" width="1.0" height="1.1" fill="#6a9e98" opacity="0.75" transform="rotate(25 20.1 6.0)"/><rect x="42.7" y="11.3" width="1.3" height="2.2" fill="#1a1a1a" opacity="0.75" transform="rotate(25 42.7 11.3)"/><rect x="39.6" y="7.2" width="1.3" height="1.7" fill="#444" opacity="0.75" transform="rotate(25 39.6 7.2)"/><rect x="43.0" y="11.5" width="1.0" height="0.6" fill="#1a1a1a" opacity="0.75" transform="rotate(25 43.0 11.5)"/><rect x="14.7" y="8.5" width="1.1" height="1.4" fill="#888" opacity="0.75" transform="rotate(25 14.7 8.5)"/><rect x="10.1" y="11.6" width="0.6" height="0.8" fill="#888" opacity="0.75" transform="rotate(25 10.1 11.6)"/><rect x="39.7" y="7.3" width="0.7" height="0.8" fill="#1a1a1a" opacity="0.75" transform="rotate(25 39.7 7.3)"/><rect x="14.7" y="11.0" width="1.3" height="1.9" fill="#1a1a1a" opacity="0.75" transform="rotate(25 14.7 11.0)"/><rect x="27.0" y="9.9" width="0.9" height="1.8" fill="#444" opacity="0.75" transform="rotate(25 27.0 9.9)"/><rect x="18.5" y="9.6" width="0.9" height="1.4" fill="#1a1a1a" opacity="0.75" transform="rotate(25 18.5 9.6)"/><rect x="41.4" y="10.9" width="0.5" height="0.7" fill="#888" opacity="0.75" transform="rotate(25 41.4 10.9)"/><rect x="46.0" y="11.3" width="0.6" height="1.4" fill="#6a9e98" opacity="0.75" transform="rotate(25 46.0 11.3)"/><rect x="14.1" y="7.4" width="0.8" height="1.2" fill="#6a9e98" opacity="0.75" transform="rotate(25 14.1 7.4)"/><rect x="22.1" y="8.0" width="0.8" height="0.8" fill="#1a1a1a" opacity="0.75" transform="rotate(25 22.1 8.0)"/><rect x="35.9" y="8.9" width="0.6" height="0.9" fill="#6a9e98" opacity="0.75" transform="rotate(25 35.9 8.9)"/><rect x="26.0" y="10.3" width="1.0" height="1.6" fill="#1a1a1a" opacity="0.75" transform="rotate(25 26.0 10.3)"/><rect x="32.3" y="9.2" width="0.8" height="1.4" fill="#6a9e98" opacity="0.75" transform="rotate(25 32.3 9.2)"/><rect x="24.4" y="10.5" width="0.9" height="1.0" fill="#6a9e98" opacity="0.75" transform="rotate(25 24.4 10.5)"/><rect x="35.1" y="7.4" width="0.9" height="1.3" fill="#1a1a1a" opacity="0.75" transform="rotate(25 35.1 7.4)"/><rect x="44.5" y="8.9" width="1.3" height="1.9" fill="#6a9e98" opacity="0.75" transform="rotate(25 44.5 8.9)"/><rect x="12.7" y="10.5" width="1.3" height="1.8" fill="#888" opacity="0.75" transform="rotate(25 12.7 10.5)"/><rect x="34.0" y="10.7" width="1.0" height="0.8" fill="#1a1a1a" opacity="0.75" transform="rotate(25 34.0 10.7)"/><rect x="26.5" y="8.2" width="0.8" height="1.4" fill="#1a1a1a" opacity="0.75" transform="rotate(25 26.5 8.2)"/><rect x="33.7" y="8.9" width="1.2" height="1.1" fill="#1a1a1a" opacity="0.75" transform="rotate(25 33.7 8.9)"/><rect x="9.0" y="7.6" width="0.9" height="1.7" fill="#6a9e98" opacity="0.75" transform="rotate(25 9.0 7.6)"/><rect x="30.6" y="11.0" width="0.5" height="1.8" fill="#444" opacity="0.75" transform="rotate(25 30.6 11.0)"/><rect x="12.2" y="10.7" width="1.3" height="0.7" fill="#6a9e98" opacity="0.75" transform="rotate(25 12.2 10.7)"/><rect x="41.9" y="7.9" width="0.6" height="2.2" fill="#444" opacity="0.75" transform="rotate(25 41.9 7.9)"/><rect x="25.7" y="10.5" width="1.3" height="1.0" fill="#888" opacity="0.75" transform="rotate(25 25.7 10.5)"/><rect x="44.6" y="9.8" width="1.4" height="1.2" fill="#444" opacity="0.75" transform="rotate(25 44.6 9.8)"/><rect x="45.9" y="9.1" width="1.2" height="0.9" fill="#888" opacity="0.75" transform="rotate(25 45.9 9.1)"/><rect x="14.1" y="9.0" width="1.3" height="0.9" fill="#888" opacity="0.75" transform="rotate(25 14.1 9.0)"/><rect x="37.2" y="11.6" width="1.0" height="1.3" fill="#444" opacity="0.75" transform="rotate(25 37.2 11.6)"/><rect x="13.3" y="10.8" width="0.6" height="1.4" fill="#444" opacity="0.75" transform="rotate(25 13.3 10.8)"/><rect x="41.2" y="9.7" width="1.2" height="1.7" fill="#888" opacity="0.75" transform="rotate(25 41.2 9.7)"/><rect x="31.2" y="9.9" width="1.4" height="2.0" fill="#6a9e98" opacity="0.75" transform="rotate(25 31.2 9.9)"/><rect x="8.9" y="9.4" width="0.8" height="0.9" fill="#6a9e98" opacity="0.75" transform="rotate(25 8.9 9.4)"/><rect x="17.3" y="9.4" width="1.3" height="1.3" fill="#888" opacity="0.75" transform="rotate(25 17.3 9.4)"/><rect x="35.4" y="8.0" width="1.0" height="2.0" fill="#1a1a1a" opacity="0.75" transform="rotate(25 35.4 8.0)"/><rect x="26.8" y="10.6" width="1.3" height="1.2" fill="#1a1a1a" opacity="0.75" transform="rotate(25 26.8 10.6)"/><rect x="26.2" y="8.1" width="0.7" height="1.7" fill="#1a1a1a" opacity="0.75" transform="rotate(25 26.2 8.1)"/><rect x="45.4" y="11.3" width="0.7" height="0.9" fill="#6a9e98" opacity="0.75" transform="rotate(25 45.4 11.3)"/><rect x="13.4" y="10.1" width="1.1" height="0.7" fill="#6a9e98" opacity="0.75" transform="rotate(25 13.4 10.1)"/><rect x="14.6" y="7.2" width="0.7" height="0.7" fill="#1a1a1a" opacity="0.75" transform="rotate(25 14.6 7.2)"/><rect x="12.6" y="8.3" width="1.3" height="0.7" fill="#888" opacity="0.75" transform="rotate(25 12.6 8.3)"/><rect x="30.6" y="10.4" width="0.5" height="1.1" fill="#888" opacity="0.75" transform="rotate(25 30.6 10.4)"/><rect x="22.8" y="7.4" width="1.1" height="1.8" fill="#888" opacity="0.75" transform="rotate(25 22.8 7.4)"/><rect x="23.2" y="9.7" width="0.6" height="1.0" fill="#888" opacity="0.75" transform="rotate(25 23.2 9.7)"/><rect x="12.4" y="11.4" width="1.3" height="0.8" fill="#6a9e98" opacity="0.75" transform="rotate(25 12.4 11.4)"/><rect x="34.5" y="8.8" width="0.9" height="1.7" fill="#6a9e98" opacity="0.75" transform="rotate(25 34.5 8.8)"/><rect x="12.2" y="11.7" width="0.8" height="1.5" fill="#1a1a1a" opacity="0.75" transform="rotate(25 12.2 11.7)"/><rect x="25.3" y="41.7" width="0.6" height="1.1" fill="#444" opacity="0.75" transform="rotate(25 25.3 41.7)"/><rect x="24.9" y="46.3" width="0.6" height="1.2" fill="#888" opacity="0.75" transform="rotate(25 24.9 46.3)"/><rect x="12.8" y="50.6" width="0.6" height="1.1" fill="#888" opacity="0.75" transform="rotate(25 12.8 50.6)"/><rect x="22.8" y="44.6" width="0.9" height="1.1" fill="#444" opacity="0.75" transform="rotate(25 22.8 44.6)"/><rect x="26.2" y="33.3" width="0.7" height="1.5" fill="#888" opacity="0.75" transform="rotate(25 26.2 33.3)"/><rect x="18.3" y="36.6" width="0.8" height="2.0" fill="#1a1a1a" opacity="0.75" transform="rotate(25 18.3 36.6)"/><rect x="21.0" y="36.7" width="1.1" height="1.4" fill="#6a9e98" opacity="0.75" transform="rotate(25 21.0 36.7)"/><rect x="31.7" y="40.4" width="1.2" height="0.7" fill="#888" opacity="0.75" transform="rotate(25 31.7 40.4)"/><rect x="29.5" y="33.4" width="0.7" height="0.8" fill="#1a1a1a" opacity="0.75" transform="rotate(25 29.5 33.4)"/><rect x="23.0" y="50.1" width="0.6" height="1.7" fill="#888" opacity="0.75" transform="rotate(25 23.0 50.1)"/><rect x="25.4" y="39.2" width="1.4" height="0.8" fill="#444" opacity="0.75" transform="rotate(25 25.4 39.2)"/><rect x="29.8" y="47.8" width="1.0" height="0.9" fill="#444" opacity="0.75" transform="rotate(25 29.8 47.8)"/><rect x="14.6" y="36.3" width="1.2" height="0.6" fill="#888" opacity="0.75" transform="rotate(25 14.6 36.3)"/><rect x="30.5" y="50.9" width="0.8" height="1.5" fill="#6a9e98" opacity="0.75" transform="rotate(25 30.5 50.9)"/><rect x="24.6" y="51.5" width="1.1" height="1.1" fill="#888" opacity="0.75" transform="rotate(25 24.6 51.5)"/><rect x="10.7" y="35.0" width="1.1" height="0.8" fill="#444" opacity="0.75" transform="rotate(25 10.7 35.0)"/><rect x="21.3" y="42.0" width="0.9" height="0.9" fill="#444" opacity="0.75" transform="rotate(25 21.3 42.0)"/><rect x="10.9" y="41.5" width="1.1" height="1.3" fill="#6a9e98" opacity="0.75" transform="rotate(25 10.9 41.5)"/><rect x="32.1" y="49.7" width="0.6" height="1.9" fill="#1a1a1a" opacity="0.75" transform="rotate(25 32.1 49.7)"/><rect x="10.6" y="44.0" width="1.0" height="1.4" fill="#1a1a1a" opacity="0.75" transform="rotate(25 10.6 44.0)"/><rect x="31.4" y="37.8" width="1.3" height="1.7" fill="#444" opacity="0.75" transform="rotate(25 31.4 37.8)"/><rect x="11.9" y="48.6" width="1.2" height="0.7" fill="#1a1a1a" opacity="0.75" transform="rotate(25 11.9 48.6)"/><rect x="27.0" y="38.2" width="1.2" height="2.1" fill="#444" opacity="0.75" transform="rotate(25 27.0 38.2)"/><rect x="20.1" y="46.9" width="0.9" height="0.8" fill="#1a1a1a" opacity="0.75" transform="rotate(25 20.1 46.9)"/><rect x="19.4" y="48.8" width="1.1" height="1.2" fill="#888" opacity="0.75" transform="rotate(25 19.4 48.8)"/><rect x="26.1" y="42.3" width="0.9" height="1.6" fill="#6a9e98" opacity="0.75" transform="rotate(25 26.1 42.3)"/><rect x="10.5" y="40.6" width="1.1" height="1.3" fill="#888" opacity="0.75" transform="rotate(25 10.5 40.6)"/><rect x="30.7" y="46.1" width="0.8" height="1.2" fill="#6a9e98" opacity="0.75" transform="rotate(25 30.7 46.1)"/><rect x="23.7" y="35.7" width="0.5" height="0.9" fill="#6a9e98" opacity="0.75" transform="rotate(25 23.7 35.7)"/><rect x="13.3" y="40.7" width="0.7" height="0.9" fill="#444" opacity="0.75" transform="rotate(25 13.3 40.7)"/><rect x="23.4" y="41.6" width="1.1" height="0.8" fill="#444" opacity="0.75" transform="rotate(25 23.4 41.6)"/><rect x="20.2" y="34.9" width="1.3" height="1.2" fill="#6a9e98" opacity="0.75" transform="rotate(25 20.2 34.9)"/><rect x="19.4" y="45.8" width="0.5" height="1.2" fill="#888" opacity="0.75" transform="rotate(25 19.4 45.8)"/><rect x="21.3" y="50.1" width="1.3" height="1.0" fill="#888" opacity="0.75" transform="rotate(25 21.3 50.1)"/><rect x="20.9" y="34.5" width="1.1" height="1.2" fill="#1a1a1a" opacity="0.75" transform="rotate(25 20.9 34.5)"/><rect x="23.7" y="48.0" width="0.8" height="2.2" fill="#888" opacity="0.75" transform="rotate(25 23.7 48.0)"/><rect x="28.2" y="51.2" width="0.9" height="1.5" fill="#1a1a1a" opacity="0.75" transform="rotate(25 28.2 51.2)"/><rect x="28.7" y="44.2" width="0.8" height="0.7" fill="#888" opacity="0.75" transform="rotate(25 28.7 44.2)"/><rect x="32.3" y="43.4" width="0.5" height="0.6" fill="#1a1a1a" opacity="0.75" transform="rotate(25 32.3 43.4)"/><rect x="10.4" y="41.6" width="0.9" height="0.9" fill="#6a9e98" opacity="0.75" transform="rotate(25 10.4 41.6)"/><rect x="14.6" y="51.5" width="0.9" height="1.9" fill="#6a9e98" opacity="0.75" transform="rotate(25 14.6 51.5)"/><rect x="31.6" y="31.7" width="0.8" height="1.6" fill="#888" opacity="0.75" transform="rotate(25 31.6 31.7)"/><rect x="12.0" y="37.2" width="1.3" height="0.8" fill="#888" opacity="0.75" transform="rotate(25 12.0 37.2)"/><rect x="22.6" y="42.3" width="1.2" height="1.2" fill="#888" opacity="0.75" transform="rotate(25 22.6 42.3)"/><rect x="29.2" y="42.6" width="1.3" height="1.2" fill="#888" opacity="0.75" transform="rotate(25 29.2 42.6)"/><rect x="20.1" y="40.3" width="1.1" height="1.2" fill="#444" opacity="0.75" transform="rotate(25 20.1 40.3)"/><rect x="21.7" y="46.8" width="1.3" height="1.7" fill="#888" opacity="0.75" transform="rotate(25 21.7 46.8)"/><rect x="11.0" y="34.6" width="1.2" height="1.9" fill="#1a1a1a" opacity="0.75" transform="rotate(25 11.0 34.6)"/><rect x="27.4" y="45.2" width="0.6" height="1.0" fill="#1a1a1a" opacity="0.75" transform="rotate(25 27.4 45.2)"/><rect x="30.2" y="49.3" width="0.9" height="2.0" fill="#6a9e98" opacity="0.75" transform="rotate(25 30.2 49.3)"/><rect x="32.9" y="31.0" width="0.7" height="1.9" fill="#1a1a1a" opacity="0.75" transform="rotate(25 32.9 31.0)"/><rect x="17.8" y="37.5" width="0.9" height="1.9" fill="#444" opacity="0.75" transform="rotate(25 17.8 37.5)"/><rect x="15.5" y="32.0" width="0.6" height="1.6" fill="#1a1a1a" opacity="0.75" transform="rotate(25 15.5 32.0)"/><rect x="12.6" y="37.0" width="0.7" height="2.0" fill="#888" opacity="0.75" transform="rotate(25 12.6 37.0)"/><rect x="21.6" y="50.1" width="0.8" height="2.0" fill="#444" opacity="0.75" transform="rotate(25 21.6 50.1)"/><rect x="20.8" y="44.1" width="0.5" height="1.9" fill="#1a1a1a" opacity="0.75" transform="rotate(25 20.8 44.1)"/><rect x="29.8" y="33.1" width="1.3" height="1.0" fill="#1a1a1a" opacity="0.75" transform="rotate(25 29.8 33.1)"/><rect x="20.7" y="35.7" width="1.2" height="1.6" fill="#888" opacity="0.75" transform="rotate(25 20.7 35.7)"/><rect x="27.5" y="49.3" width="0.8" height="1.6" fill="#888" opacity="0.75" transform="rotate(25 27.5 49.3)"/><rect x="27.9" y="37.1" width="1.4" height="1.3" fill="#888" opacity="0.75" transform="rotate(25 27.9 37.1)"/><rect x="14.7" y="42.3" width="0.9" height="1.8" fill="#1a1a1a" opacity="0.75" transform="rotate(25 14.7 42.3)"/><rect x="17.9" y="35.0" width="1.2" height="2.1" fill="#6a9e98" opacity="0.75" transform="rotate(25 17.9 35.0)"/><rect x="19.7" y="44.6" width="1.0" height="0.9" fill="#6a9e98" opacity="0.75" transform="rotate(25 19.7 44.6)"/><rect x="29.3" y="32.3" width="0.7" height="1.3" fill="#6a9e98" opacity="0.75" transform="rotate(25 29.3 32.3)"/><rect x="15.0" y="34.5" width="1.3" height="1.8" fill="#888" opacity="0.75" transform="rotate(25 15.0 34.5)"/><rect x="31.4" y="42.3" width="0.9" height="2.1" fill="#888" opacity="0.75" transform="rotate(25 31.4 42.3)"/><rect x="21.1" y="47.2" width="0.9" height="2.2" fill="#1a1a1a" opacity="0.75" transform="rotate(25 21.1 47.2)"/><rect x="16.7" y="50.6" width="0.7" height="0.8" fill="#444" opacity="0.75" transform="rotate(25 16.7 50.6)"/><rect x="16.8" y="41.9" width="1.1" height="0.7" fill="#444" opacity="0.75" transform="rotate(25 16.8 41.9)"/><rect x="16.3" y="40.1" width="0.8" height="1.8" fill="#6a9e98" opacity="0.75" transform="rotate(25 16.3 40.1)"/><rect x="13.3" y="40.3" width="1.3" height="1.3" fill="#444" opacity="0.75" transform="rotate(25 13.3 40.3)"/><rect x="13.5" y="47.0" width="1.1" height="2.2" fill="#6a9e98" opacity="0.75" transform="rotate(25 13.5 47.0)"/><rect x="31.7" y="40.1" width="1.3" height="1.4" fill="#444" opacity="0.75" transform="rotate(25 31.7 40.1)"/><rect x="18.3" y="48.9" width="0.8" height="1.3" fill="#6a9e98" opacity="0.75" transform="rotate(25 18.3 48.9)"/><rect x="28.6" y="37.2" width="0.7" height="1.9" fill="#1a1a1a" opacity="0.75" transform="rotate(25 28.6 37.2)"/><rect x="10.3" y="44.2" width="0.6" height="0.6" fill="#1a1a1a" opacity="0.75" transform="rotate(25 10.3 44.2)"/><rect x="10.0" y="51.7" width="1.2" height="1.2" fill="#6a9e98" opacity="0.75" transform="rotate(25 10.0 51.7)"/><rect x="32.5" y="31.7" width="0.7" height="0.6" fill="#888" opacity="0.75" transform="rotate(25 32.5 31.7)"/><rect x="30.8" y="48.5" width="1.0" height="1.9" fill="#888" opacity="0.75" transform="rotate(25 30.8 48.5)"/><rect x="17.2" y="36.2" width="1.2" height="1.3" fill="#6a9e98" opacity="0.75" transform="rotate(25 17.2 36.2)"/><rect x="17.8" y="31.6" width="0.5" height="2.2" fill="#444" opacity="0.75" transform="rotate(25 17.8 31.6)"/><rect x="31.0" y="48.0" width="0.7" height="0.8" fill="#888" opacity="0.75" transform="rotate(25 31.0 48.0)"/><rect x="21.7" y="48.5" width="1.0" height="1.0" fill="#444" opacity="0.75" transform="rotate(25 21.7 48.5)"/><rect x="11.0" y="41.2" width="0.6" height="1.9" fill="#888" opacity="0.75" transform="rotate(25 11.0 41.2)"/><rect x="20.8" y="45.0" width="1.3" height="1.9" fill="#888" opacity="0.75" transform="rotate(25 20.8 45.0)"/><rect x="18.5" y="44.3" width="0.8" height="0.7" fill="#444" opacity="0.75" transform="rotate(25 18.5 44.3)"/><rect x="32.8" y="42.5" width="0.9" height="1.2" fill="#888" opacity="0.75" transform="rotate(25 32.8 42.5)"/><rect x="16.4" y="36.4" width="0.8" height="1.4" fill="#6a9e98" opacity="0.75" transform="rotate(25 16.4 36.4)"/><rect x="13.2" y="31.8" width="0.9" height="1.0" fill="#888" opacity="0.75" transform="rotate(25 13.2 31.8)"/><rect x="31.4" y="43.9" width="0.5" height="1.5" fill="#1a1a1a" opacity="0.75" transform="rotate(25 31.4 43.9)"/><polygon points="0.0,0.0 3.0,0.0 0.0,4.0" fill="#6a9e98" /><polygon points="0.0,8.0 3.0,7.0 1.0,11.0 0.0,11.0" fill="#377fd8" /><path d="M8,8.400 L49,4.400 L71,2.300" stroke="#1e2a66" stroke-width="1.100" fill="none"/><path d="M12,19 L43,23.400 L60,25.200 L71,30" stroke="#222c60" stroke-width="1.500" fill="none"/><path d="M9,28 L36,38.400 L71,50.400" stroke="#1e2a66" stroke-width="1.500" fill="none"/><path d="M3,43 L10,33.500 M8,44 L20,52" stroke="#4a4a90" stroke-width="0.900" fill="none"/><polygon points="0.0,15.9 14.3,14.2 4.4,38.5 0.0,38.8" fill="#ffa030" /><path d="M1,22 l3,-0.600 l-2,6z" fill="#ffc070" opacity="0.7"/></g></g>
<polygon points="885.80,282.70 887.27,285.68 890.56,286.15 888.18,288.47 888.74,291.75 885.80,290.20 882.86,291.75 883.42,288.47 881.04,286.15 884.33,285.68" fill="#667099"/><polygon points="894.78,282.70 896.25,285.68 899.54,286.15 897.16,288.47 897.72,291.75 894.78,290.20 891.84,291.75 892.40,288.47 890.02,286.15 893.31,285.68" fill="#667099"/><polygon points="903.76,282.70 905.23,285.68 908.52,286.15 906.14,288.47 906.70,291.75 903.76,290.20 900.82,291.75 901.38,288.47 899.00,286.15 902.29,285.68" fill="#667099"/><polygon points="912.74,282.70 914.21,285.68 917.50,286.15 915.12,288.47 915.68,291.75 912.74,290.20 909.80,291.75 910.36,288.47 907.98,286.15 911.27,285.68" fill="#667099"/><polygon points="921.72,282.70 923.19,285.68 926.48,286.15 924.10,288.47 924.66,291.75 921.72,290.20 918.78,291.75 919.34,288.47 916.96,286.15 920.25,285.68" fill="#667099"/>
<g transform="translate(882.00,301)"><path d="M84,2.5 h2.400 v52.300 h-84 v-2.800 h81.600z" fill="#171b25" opacity="0.850"/><path d="M86.400,3.500 h1.200 v52.500 h-84 v-1.200 h82.800z" fill="#171b25" opacity="0.450"/><path d="M87.600,4.500 h0.800 v52.300 h-83.400 v-0.800 h82.600z" fill="#171b25" opacity="0.200"/><rect width="13" height="52" fill="#3d4557"/><rect x="-1" y="37" width="14" height="16" fill="#434b5e"/><rect x="3" y="2" width="6.200" height="2.900" rx="0.400" fill="#232836"/><rect x="3" y="8" width="6.200" height="2.900" rx="0.400" fill="#232836"/><rect x="3" y="14" width="6.200" height="2.900" rx="0.400" fill="#232836"/><rect x="3" y="20" width="6.200" height="2.900" rx="0.400" fill="#232836"/><rect x="3" y="26" width="6.200" height="2.900" rx="0.400" fill="#232836"/><rect x="3" y="32" width="6.200" height="2.900" rx="0.400" fill="#232836"/><path d="M5.800,39.800 h4.800 l-2.800,4 h2.800 l-8.400,7.400 l2.600,-5.600 h-2.600 z" fill="#222735"/><g transform="translate(13,0)" clip-path="url(#tc)"><rect width="71" height="52" fill="#050307"/><g filter="url(#fT1)"><rect x="-3" y="28" width="14" height="28" fill="#34340e" opacity="0.6"/><rect x="60" y="28" width="14" height="28" fill="#34340e" opacity="0.6"/></g><ellipse cx="37" cy="44" rx="20" ry="42" fill="#5a4030" opacity="0.6" filter="url(#fT3)"/><rect width="71" height="52" fill="url(#gGlow)"/><path d="M0,6 L30,14 M0,14 L26,18 M71,8 L48,14 M71,18 L58,20 M71,34 L60,31 M0,26 L20,25 M0,40 L16,36" stroke="#5a5ab8" stroke-width="0.700" opacity="0.55"/><ellipse cx="36.200" cy="6.400" rx="14" ry="3.600" fill="none" stroke="#30d0e8" stroke-width="0.800"/><polygon points="18.1,11.4 48.7,14.9 51.3,37.0 19.2,41.1" fill="#3a84de" /><text x="36.9" y="34.14" font-size="20.5" font-weight="bold" text-anchor="middle" fill="#8fd0fa" stroke="#8fd0fa" stroke-width="1.13" stroke-linejoin="round" opacity="1" transform="rotate(4 36.9 26.8)">A</text><path d="M22,36.500 Q36,39 50.500,34.500" fill="none" stroke="#30d0e8" stroke-width="0.800"/><ellipse cx="36.200" cy="46.700" rx="26" ry="6.500" fill="none" stroke="#30d0e8" stroke-width="0.900"/><path d="M17,50 L24,41" stroke="#101018" stroke-width="1.600"/></g></g>
<polygon points="1022.80,282.70 1024.27,285.68 1027.56,286.15 1025.18,288.47 1025.74,291.75 1022.80,290.20 1019.86,291.75 1020.42,288.47 1018.04,286.15 1021.33,285.68" fill="#667099"/><polygon points="1031.78,282.70 1033.25,285.68 1036.54,286.15 1034.16,288.47 1034.72,291.75 1031.78,290.20 1028.84,291.75 1029.40,288.47 1027.02,286.15 1030.31,285.68" fill="#667099"/><polygon points="1040.76,282.70 1042.23,285.68 1045.52,286.15 1043.14,288.47 1043.70,291.75 1040.76,290.20 1037.82,291.75 1038.38,288.47 1036.00,286.15 1039.29,285.68" fill="#667099"/><polygon points="1049.74,282.70 1051.21,285.68 1054.50,286.15 1052.12,288.47 1052.68,291.75 1049.74,290.20 1046.80,291.75 1047.36,288.47 1044.98,286.15 1048.27,285.68" fill="#667099"/><polygon points="1058.72,282.70 1060.19,285.68 1063.48,286.15 1061.10,288.47 1061.66,291.75 1058.72,290.20 1055.78,291.75 1056.34,288.47 1053.96,286.15 1057.25,285.68" fill="#667099"/>
<g transform="translate(1019.00,301)"><path d="M84,2.5 h2.400 v52.300 h-84 v-2.800 h81.600z" fill="#171b25" opacity="0.850"/><path d="M86.400,3.500 h1.200 v52.500 h-84 v-1.200 h82.800z" fill="#171b25" opacity="0.450"/><path d="M87.600,4.500 h0.800 v52.300 h-83.400 v-0.800 h82.600z" fill="#171b25" opacity="0.200"/><rect width="13" height="52" fill="#3d4557"/><rect x="-1" y="37" width="14" height="16" fill="#434b5e"/><rect x="3" y="2" width="6.200" height="2.900" rx="0.400" fill="#232836"/><rect x="3" y="8" width="6.200" height="2.900" rx="0.400" fill="#232836"/><rect x="3" y="14" width="6.200" height="2.900" rx="0.400" fill="#232836"/><rect x="3" y="20" width="6.200" height="2.900" rx="0.400" fill="#232836"/><rect x="3" y="26" width="6.200" height="2.900" rx="0.400" fill="#232836"/><rect x="3" y="32" width="6.200" height="2.900" rx="0.400" fill="#232836"/><path d="M5.800,39.800 h4.800 l-2.800,4 h2.800 l-8.400,7.400 l2.600,-5.600 h-2.600 z" fill="#222735"/><g transform="translate(13,0)" clip-path="url(#tc)"><rect width="71" height="52" fill="#000"/><circle cx="31.500" cy="24" r="31.500" fill="url(#gEarth)"/><g filter="url(#fT05)"><path d="M9,21 Q15,18 21,22 L27,24 L33,29 L40,37 L36,42 L31,47 L28,52 L13,52 L11,42 Q6,32 9,21Z" fill="#3c4436"/><path d="M22,40 L36,39 L39,44 L32,50 L28,52 L16,52 Z" fill="#4e3e2e" opacity="0.85"/><path d="M0,0 L5,0 Q10,5 13,9 L11,12 L7,13 L5,9 L2,6 Z" fill="#5a5c3c" opacity="0.9"/><path d="M6,13 L9,18 L8,20" stroke="#4a4c30" stroke-width="1" fill="none"/><path d="M57,9 Q61,16 61.500,26 L58,33 Q55,24 55.500,15Z" fill="#6a5030"/></g><circle cx="31.500" cy="24" r="31.500" fill="url(#gEarthShade)"/></g></g>
<circle cx="444.300" cy="288.500" r="4.500" fill="#f4f5f7"/><rect x="443.600" y="287.600" width="1.500" height="3.600" fill="#69727f"/><rect x="443.600" y="285.400" width="1.500" height="1.400" fill="#69727f"/>
<!-- p_preview -->
<path d="M1841,61.600 h-9.400 v9.800 h17 v-4" fill="none" stroke="#d3d8e1" stroke-width="1.3"/><path d="M1842,66.600 l5.400,-4.600 M1843.800,61.400 h5 v4.600" fill="none" stroke="#d3d8e1" stroke-width="1.5"/>
<rect x="1864.8" y="63.1" width="9.8" height="9.8" rx="1.6" fill="none" stroke="#d3d8e1" stroke-width="1.5"/><rect x="1867.6" y="59.6" width="10.2" height="10.2" rx="1.6" fill="#d3d8e1" stroke="#394255" stroke-width="1"/><path d="M1870.6,66.8 l4.2,-4.200 M1871.6,62.5 h3.300 v3.300" fill="none" stroke="#394255" stroke-width="1.300"/>
<rect x="1891.6" y="61.2" width="16.8" height="10.4" rx="1.200" fill="none" stroke="#d3d8e1" stroke-width="1.200"/><rect x="1893.2" y="62.9" width="6.100" height="7" fill="#d3d8e1"/><rect x="1900.5" y="62.9" width="6.300" height="7" fill="#d3d8e1"/>
<defs>
<filter id="fBlur" x="-10%" y="-10%" width="120%" height="120%"><feGaussianBlur stdDeviation="1.3"/></filter>
<filter id="fBlur2" x="-10%" y="-10%" width="120%" height="120%"><feGaussianBlur stdDeviation="0.9"/></filter>
<filter id="fBlur5" x="-30%" y="-30%" width="160%" height="160%"><feGaussianBlur stdDeviation="4.5"/></filter>
<filter id="fBlur3" x="-20%" y="-20%" width="140%" height="140%"><feGaussianBlur stdDeviation="3"/></filter>
<linearGradient id="gR1" x1="0" x2="1" y1="0.2" y2="0.8"><stop offset="0" stop-color="#3a2858"/><stop offset="0.35" stop-color="#5c4c62"/><stop offset="0.6" stop-color="#6a5040"/><stop offset="0.85" stop-color="#9a7440"/><stop offset="1" stop-color="#a88248"/></linearGradient>
<linearGradient id="gR1d" x1="0" x2="0" y1="0" y2="1"><stop offset="0.6" stop-color="#20140c" stop-opacity="0"/><stop offset="0.95" stop-color="#20140c" stop-opacity="0.85"/></linearGradient>
<linearGradient id="gR2" x1="0" x2="1" y1="0.3" y2="0.7"><stop offset="0" stop-color="#1c1026"/><stop offset="0.4" stop-color="#6a6068"/><stop offset="0.75" stop-color="#a89a84"/><stop offset="1" stop-color="#b0a088"/></linearGradient>
<linearGradient id="gS1" x1="0" x2="1" y1="0.4" y2="0.6"><stop offset="0" stop-color="#8c7a84"/><stop offset="0.3" stop-color="#a8969c"/><stop offset="0.46" stop-color="#5e4e56"/><stop offset="0.56" stop-color="#7e6e70"/><stop offset="0.68" stop-color="#d4c8b8"/><stop offset="0.85" stop-color="#dcd0c0"/><stop offset="1" stop-color="#a89c8a"/></linearGradient>
<linearGradient id="gS1rim" x1="0" x2="1" y1="0" y2="1"><stop offset="0" stop-color="#2e2230"/><stop offset="0.5" stop-color="#5a4c54"/><stop offset="1" stop-color="#b0a494" stop-opacity="0.3"/></linearGradient>
<linearGradient id="gS2" x1="0" x2="1" y1="0.25" y2="0.75"><stop offset="0" stop-color="#f0ecf2"/><stop offset="0.28" stop-color="#dcd2e2"/><stop offset="0.4" stop-color="#a890bc"/><stop offset="0.5" stop-color="#7a58a0"/><stop offset="0.58" stop-color="#64448a"/><stop offset="0.64" stop-color="#b89a70"/><stop offset="0.8" stop-color="#c8a470"/><stop offset="1" stop-color="#6a4a24"/></linearGradient>
<radialGradient id="gS2a" cx="0.66" cy="0.2" r="0.38"><stop offset="0" stop-color="#fffdf0"/><stop offset="0.6" stop-color="#fffbe8" stop-opacity="0.9"/><stop offset="1" stop-color="#fffbe8" stop-opacity="0"/></radialGradient>
<radialGradient id="gS2b" cx="0.8" cy="0.78" r="0.32"><stop offset="0" stop-color="#2a1608"/><stop offset="0.5" stop-color="#4a2c14" stop-opacity="0.8"/><stop offset="1" stop-color="#4a2c14" stop-opacity="0"/></radialGradient>
<radialGradient id="gS2c" cx="0.42" cy="0.86" r="0.3"><stop offset="0" stop-color="#b48cd0"/><stop offset="0.6" stop-color="#a078c0" stop-opacity="0.8"/><stop offset="1" stop-color="#a078c0" stop-opacity="0"/></radialGradient>
<radialGradient id="gS2d" cx="0.12" cy="0.68" r="0.28"><stop offset="0" stop-color="#a08868"/><stop offset="0.6" stop-color="#a89070" stop-opacity="0.7"/><stop offset="1" stop-color="#a89070" stop-opacity="0"/></radialGradient>
<clipPath id="cS2"><circle cx="1693" cy="238.3" r="49"/></clipPath>
<linearGradient id="gU1" x1="0" x2="1" y1="0" y2="1"><stop offset="0" stop-color="#9a9aa0"/><stop offset="0.45" stop-color="#8a8890"/><stop offset="0.7" stop-color="#4a3420"/><stop offset="1" stop-color="#c89848"/></linearGradient>
<linearGradient id="gRod" x1="0" x2="1" y1="0" y2="1" gradientUnits="objectBoundingBox"><stop offset="0" stop-color="#2a1c30"/><stop offset="1" stop-color="#2a1c30"/></linearGradient>
<radialGradient id="gLogoS" cx="0.450" cy="0.350" r="0.650"><stop offset="0" stop-color="#f4f4f4"/><stop offset="0.450" stop-color="#c4c4c6"/><stop offset="0.800" stop-color="#8a8a8e"/><stop offset="1" stop-color="#4a4a50"/></radialGradient>
</defs>
<g filter="url(#fBlur3)" opacity="0.75"><path d="M1596.1,394.1 A79,79 0 0 1 1440.5,421.5" fill="none" stroke="#d8aa60" stroke-width="7" stroke-linecap="round" /><path d="M1748.6,196.3 A70,70 0 0 1 1660.0,301.9" fill="none" stroke="#d8aa60" stroke-width="7" stroke-linecap="round" /></g>
<g filter="url(#fBlur)"><circle cx="1516.3" cy="402.8" r="74" fill="#ffffff"/><circle cx="1516.3" cy="402.8" r="78" fill="none" stroke="url(#gR1)" stroke-width="8"/><circle cx="1516.3" cy="402.8" r="78" fill="none" stroke="url(#gR1d)" stroke-width="8"/><circle cx="1516.3" cy="402.8" r="56" fill="none" stroke="url(#gR2)" stroke-width="8"/><path d="M1564.8,430.8 A56,56 0 0 1 1467.8,430.8" fill="none" stroke="#2e2626" stroke-width="8" stroke-linecap="butt" opacity="0.55"/><circle cx="1516.3" cy="402.8" r="39" fill="url(#gS1)"/><circle cx="1516.3" cy="402.8" r="38" fill="none" stroke="url(#gS1rim)" stroke-width="4.5"/><path d="M1571,344.5 L1637,285.5" stroke="#2c1e34" stroke-width="8.5"/><path d="M1574,348 L1640,289" stroke="#c89a50" stroke-width="3.5"/><path d="M1751.3,203.1 A68.5,68.5 0 0 1 1726.2,296.6" fill="none" stroke="#a07838" stroke-width="10" stroke-linecap="round" /><path d="M1744.5,281.3 A68.5,68.5 0 0 1 1668.6,301.7" fill="none" stroke="#2a1a10" stroke-width="10" stroke-linecap="round" /><path d="M1674.3,303.5 A68.5,68.5 0 0 1 1625.8,255.0" fill="none" stroke="#5c3c84" stroke-width="10.5" stroke-linecap="round" /><circle cx="1692" cy="237.3" r="70" fill="none" stroke="#85858e" stroke-width="4" stroke-dasharray="241.9 439.8" transform="rotate(150 1692 237.3)"/><circle cx="1692" cy="237.3" r="61" fill="none" stroke="#ffffff" stroke-width="9"/><g clip-path="url(#cS2)"><rect x="1642" y="187.3" width="102" height="102" fill="#e9e2ee"/><g filter="url(#fBlur5)"><ellipse cx="1718" cy="215.3" rx="26" ry="22" fill="#fffbe6"/><ellipse cx="1726" cy="243.3" rx="20" ry="14" fill="#c8a672"/><ellipse cx="1726" cy="271.3" rx="26" ry="18" fill="#3a2210"/><ellipse cx="1658" cy="263.3" rx="20" ry="14" fill="#a08a6a"/><path d="M1678,191.3 L1694,189.3 Q1714,231.3 1706,267.3 L1696,289.3 L1664,285.3 Q1690,247.3 1678,191.3Z" fill="#7656a0" opacity="0.85"/><ellipse cx="1684" cy="275.3" rx="16" ry="10" fill="#b48ed0"/><ellipse cx="1668" cy="233.3" rx="10" ry="22" fill="#d8cce0"/></g><path d="M1682,211.3 q8,22 2,46 M1690,207.3 q10,24 4,50" stroke="#4a3466" stroke-width="2" fill="none" opacity="0.35"/></g><circle cx="1692" cy="237.3" r="51" fill="none" stroke="#85858e" stroke-width="3.6" stroke-dasharray="192.3 320.4" transform="rotate(140 1692 237.3)"/><path d="M1743.2,228.3 A52,52 0 0 1 1658.6,277.1" fill="none" stroke="#ffffff" stroke-width="4" stroke-linecap="butt" /><path d="M1614.3,278.6 A88,88 0 0 1 1604.5,228.1" fill="none" stroke="#8a6c68" stroke-width="7" stroke-linecap="round" /><path d="M1605.9,255.6 A88,88 0 0 1 1604.5,228.1" fill="none" stroke="#8c8890" stroke-width="7" stroke-linecap="round" /><path d="M1688.8,328.2 A91,91 0 0 1 1638.5,310.9" fill="none" stroke="#2a1a28" stroke-width="7" stroke-linecap="round" /><path d="M1689.8,332.7 A91,91 0 0 1 1642.1,317.2" fill="none" stroke="#d8a250" stroke-width="6" stroke-linecap="round" /><circle cx="1441.3" cy="470.4" r="12" fill="#857684"/><circle cx="1440" cy="468.500" r="7" fill="#a494a2" opacity="0.800"/></g>
<g filter="url(#fBlur2)"><circle cx="1302.600" cy="469.300" r="39.500" fill="#1c1c20"/><circle cx="1302.600" cy="469.300" r="39" fill="none" stroke="#a4a4aa" stroke-width="3.200"/><circle cx="1302.600" cy="469.300" r="34.500" fill="url(#gLogoS)"/><path d="M1266.500,468 Q1269,485 1288,492.600" fill="none" stroke="#d41414" stroke-width="6"/><path d="M1284,456 h12 v10 h-10 z M1304,458 h14 v12 h-12z M1290,474 h16 v8 h-14z" fill="#9c9ca0" opacity="0.600"/><path d="M1282,447 q20,-12 40,0" fill="none" stroke="#77777c" stroke-width="2" opacity="0.7"/></g>
<g filter="url(#fBlur2)"><text transform="translate(1303.200,410) rotate(-90)" font-size="35" fill="#cfcfcf" textLength="259" lengthAdjust="spacingAndGlyphs" stroke="#cfcfcf" stroke-width="1.700">PINNACLE</text><text transform="translate(1329,410) rotate(-90)" font-size="24" font-weight="bold" fill="#ffffff" textLength="246" lengthAdjust="spacingAndGlyphs" stroke="#fff" stroke-width="0.900">Hollywood FX</text></g>
<path d="M1159.3,560.800 V567.600 M1189.3,564 V567.600 M1219.2,564 V567.600 M1249.2,564 V567.600 M1279.1,564 V567.600 M1309.1,560.800 V567.600 M1339.1,564 V567.600 M1369.0,564 V567.600 M1399.0,564 V567.600 M1428.9,564 V567.600 M1458.9,560.800 V567.600 M1488.9,564 V567.600 M1518.8,564 V567.600 M1548.8,564 V567.600 M1578.7,564 V567.600 M1608.7,560.800 V567.600 M1638.7,564 V567.600 M1668.6,564 V567.600 M1698.6,564 V567.600 M1728.5,564 V567.600 M1758.5,560.800 V567.600 M1788.5,564 V567.600 M1818.4,564 V567.600 M1848.4,564 V567.600 M1878.3,564 V567.600" stroke="#8f97a8" stroke-width="1.200"/>
<path d="M1162.600,575 v5 M1164.600,575 v5 M1902.600,575 v5 M1904.600,575 v5" stroke="#c0c6d0" stroke-width="0.800"/><rect x="1532.600" y="576.600" width="1.200" height="1.200" fill="#d8d0c0"/>
<path d="M1395.800,559.200 h18.200 l-9.100,8.600z" fill="#e6e8ec"/><path d="M1405.400,567.800 V584" stroke="#e0501a" stroke-width="1.200"/>
<path d="M1205.400,591.600 Q1214.800,593.600 1216,601.400" fill="none" stroke="#d3d8e1" stroke-width="2.800"/><path d="M1210.200,600.600 L1220.800,598.800 L1217.400,607.600z" fill="#d3d8e1"/>
<rect x="1298.00" y="591.40" width="3.700" height="13.20" fill="#cdd2dc"/><rect x="1302.75" y="592.10" width="3.700" height="11.80" fill="#cdd2dc"/><rect x="1307.50" y="592.80" width="3.700" height="10.40" fill="#cdd2dc"/><rect x="1312.25" y="593.50" width="3.700" height="9.00" fill="#cdd2dc"/><rect x="1317.00" y="594.20" width="3.700" height="7.60" fill="#cdd2dc"/><rect x="1321.75" y="594.90" width="3.700" height="6.20" fill="#cdd2dc"/><rect x="1326.50" y="595.60" width="3.700" height="4.80" fill="#cdd2dc"/><rect x="1331.25" y="596.30" width="3.700" height="3.40" fill="#cdd2dc"/><rect x="1336.00" y="597.00" width="3.700" height="2.00" fill="#cdd2dc"/><rect x="1340.75" y="596.30" width="3.700" height="3.40" fill="#cdd2dc"/><rect x="1345.50" y="595.60" width="3.700" height="4.80" fill="#cdd2dc"/><rect x="1350.25" y="594.90" width="3.700" height="6.20" fill="#cdd2dc"/><rect x="1355.00" y="594.20" width="3.700" height="7.60" fill="#cdd2dc"/><rect x="1359.75" y="593.50" width="3.700" height="9.00" fill="#cdd2dc"/><rect x="1364.50" y="592.80" width="3.700" height="10.40" fill="#cdd2dc"/><rect x="1369.25" y="592.10" width="3.700" height="11.80" fill="#cdd2dc"/><rect x="1374.00" y="591.40" width="3.700" height="13.20" fill="#cdd2dc"/><rect x="1358.800" y="592.400" width="1.800" height="11" fill="#ee1c1c"/><circle cx="1359.700" cy="589.900" r="2.400" fill="#e4e6ea"/>
<path d="M1436.800,596.200 h7.200 l-3.600,5.800z" fill="#d3d8e1"/>
<path d="M1489.500,596.700 h-3 a3.800,3.800 0 0 0 0,7.600 h9.600 a3.800,3.800 0 0 0 0,-7.600 h-2.200" fill="none" stroke="#d3d8e1" stroke-width="1.500"/><path d="M1494.600,593.700 l-4,3 l4,3z" fill="#d3d8e1"/>
<rect x="1515.600" y="593.750" width="1.800" height="11.250" fill="#d3d8e1"/><path d="M1528.200,593.750 v11.250 l-9.400,-5.600z" fill="#d3d8e1"/>
<rect x="1551.400" y="593.750" width="1.800" height="11.250" fill="#d3d8e1"/><path d="M1549.800,593.750 v11.250 l-8.800,-5.600z" fill="#d3d8e1"/>
<path d="M1570.600,591 v16.200 l12.600,-8.100z" fill="#e4e7ec"/>
<rect x="1600.700" y="593.750" width="1.800" height="11.250" fill="#d3d8e1"/><path d="M1604.100,593.750 v11.250 l8.800,-5.600z" fill="#d3d8e1"/>
<rect x="1636.200" y="593.750" width="1.800" height="11.250" fill="#d3d8e1"/><path d="M1625.900,593.750 v11.250 l9.400,-5.600z" fill="#d3d8e1"/>
<path d="M1662.800,597.400 h2.800 l3.800,-3 v10.400 l-3.800,-3 h-2.800z" fill="#d3d8e1"/><path d="M1671,597 q1.600,2.600 0,5.200 M1672.800,595 q3,4.600 0,9.200" fill="none" stroke="#d3d8e1" stroke-width="1.100"/><path d="M1680.300,597.400 h6.500 l-3.250,3.600z" fill="#d3d8e1"/>
<path d="M1706.300,593.300 h5.700 v11.400 l-5.700,-5z" fill="#d3d8e1"/><path d="M1722.600,593.300 h5.700 v6.400 l-5.700,5z" fill="#d3d8e1"/>
<path d="M1741,593.300 h4.600 v9 l-4.600,-4z M1747.400,593.300 h4.600 v5 l-4.600,4z" fill="#d3d8e1"/><path d="M1739.200,604.700 L1753.400,593.700" stroke="#d3d8e1" stroke-width="1.300"/>
<!-- p_timeline -->
<rect x="21.200" y="629.600" width="15.600" height="11.600" rx="1" fill="none" stroke="#d3d8e1" stroke-width="1.300"/><rect x="21.200" y="629.600" width="15.600" height="3.400" fill="#d3d8e1"/><path d="M34.400,640.400 h5.600 l-2.800,3.200z" fill="#d3d8e1" stroke="#454d60" stroke-width="0.600"/>
<rect x="61.900000000000006" y="631.8" width="2.600" height="3" fill="#d3d8e1" transform="rotate(0 63.2 638)"/><rect x="61.900000000000006" y="631.8" width="2.600" height="3" fill="#d3d8e1" transform="rotate(45 63.2 638)"/><rect x="61.900000000000006" y="631.8" width="2.600" height="3" fill="#d3d8e1" transform="rotate(90 63.2 638)"/><rect x="61.900000000000006" y="631.8" width="2.600" height="3" fill="#d3d8e1" transform="rotate(135 63.2 638)"/><rect x="61.900000000000006" y="631.8" width="2.600" height="3" fill="#d3d8e1" transform="rotate(180 63.2 638)"/><rect x="61.900000000000006" y="631.8" width="2.600" height="3" fill="#d3d8e1" transform="rotate(225 63.2 638)"/><rect x="61.900000000000006" y="631.8" width="2.600" height="3" fill="#d3d8e1" transform="rotate(270 63.2 638)"/><rect x="61.900000000000006" y="631.8" width="2.600" height="3" fill="#d3d8e1" transform="rotate(315 63.2 638)"/><circle cx="63.2" cy="638" r="4.400" fill="#d3d8e1"/><circle cx="63.2" cy="638" r="1.700" fill="#454d60"/><circle cx="69.800" cy="631.600" r="1.800" fill="none" stroke="#d3d8e1" stroke-width="1"/>
<rect x="86.600" y="636.200" width="11.600" height="2.800" fill="#d3d8e1"/><rect x="89.600" y="632.400" width="5.800" height="2.400" fill="#d3d8e1"/><path d="M104.250,634.250 h6.750 l-3.375,3.750z" fill="#d3d8e1"/>
<circle cx="132.400" cy="636.500" r="7.500" fill="#d3d8e1"/><circle cx="132.400" cy="636.500" r="2.600" fill="none" stroke="#454d60" stroke-width="1"/><circle cx="132.400" cy="636.500" r="0.800" fill="#454d60"/>
<path d="M162.4,633 h-2.600 v10.400 h10.600 v-2.600" fill="none" stroke="#d3d8e1" stroke-width="1.500"/><rect x="163.2" y="629.8" width="10.400" height="10.400" rx="1.200" fill="none" stroke="#d3d8e1" stroke-width="1.500"/><path d="M166.2,637.2 l4.200,-4.200 M167.2,632.6 h3.600 v3.600" fill="none" stroke="#d3d8e1" stroke-width="1.500"/>
<rect x="395.00" y="634.20" width="2.100" height="6.4" fill="#d3d8e1"/>
<rect x="398.15" y="632.00" width="2.100" height="8.6" fill="#d3d8e1"/>
<rect x="401.30" y="633.20" width="2.100" height="7.4" fill="#d3d8e1"/>
<rect x="404.45" y="632.00" width="2.100" height="8.6" fill="#d3d8e1"/>
<rect x="407.60" y="636.20" width="2.100" height="4.4" fill="#d3d8e1"/>
<path d="M436.800,643.600 c-2.400,0.600 -3.200,-1.600 -1.600,-2.200 M437,643.400 l-1.600,-11.200 c-0.200,-1.800 1.400,-3.200 2,-2.600 c0.800,1.200 -0.200,3.200 -2.400,5.200 c-2.400,2.200 -2.400,5 1.200,5.600 c3.200,0.200 3.800,-3.400 1,-4 c-2.200,-0.200 -3,2.200 -1.400,3" fill="none" stroke="#d3d8e1" stroke-width="1.100" stroke-linecap="round"/>
<rect x="524.200" y="629" width="4.800" height="9.400" rx="2.400" fill="#d3d8e1"/><path d="M522.400,635 a4.200,4.600 0 0 0 8.400,0 M526.600,640 v2.600 M523.200,643.400 h6.800" fill="none" stroke="#d3d8e1" stroke-width="1.200"/>
<path d="M552.500,633.200 h3.400 l2.800,6.600 h3.400 l2.800,-6.600 h3.400" fill="none" stroke="#d3d8e1" stroke-width="1.700"/>
<rect x="587.500" y="629.500" width="14" height="14" fill="none" stroke="#d3d8e1" stroke-width="1"/><rect x="589.200" y="631.200" width="4.900" height="4.900" fill="#d3d8e1"/><rect x="595" y="631.200" width="4.900" height="4.900" fill="#d3d8e1"/><rect x="589.200" y="637" width="4.900" height="4.900" fill="#d3d8e1"/><rect x="595" y="637" width="4.900" height="4.900" fill="#d3d8e1"/>
<circle cx="628.250" cy="636.900" r="7" fill="none" stroke="#d3d8e1" stroke-width="1.200"/><path d="M628.250,629.900 a7,7 0 0 0 0,14z" fill="#d3d8e1"/><path d="M629.400,634 l3.600,-3.400 M629.400,638 l5.400,-5.200 M629.400,642 l5.800,-5.600 M631.400,643.200 l3.400,-3.200" stroke="#d3d8e1" stroke-width="1.300"/>
<circle cx="659.800" cy="637.800" r="4.600" fill="#6d7587"/><circle cx="663.400" cy="636" r="4.600" fill="#6d7587"/><circle cx="666" cy="634.600" r="4.200" fill="#6d7587" opacity="0.800"/>
<rect x="689.750" y="630.900" width="15.750" height="10.100" fill="#d3d8e1"/><path d="M691,640 l4.400,-6.400 l3.200,4 l4.600,-5 l1,1.600" fill="none" stroke="#454d60" stroke-width="0.900"/><circle cx="702.600" cy="633.400" r="1.300" fill="none" stroke="#454d60" stroke-width="0.700"/>
<path d="M930.900,629 h5.200 v14.250 l-5.200,-4.600z" fill="#6d7587"/><path d="M941,634.250 h6.750 l-3.375,3.750z" fill="#6d7587"/>
<path d="M964.600,629 h5.300 v9.600 l-5.300,4.650z" fill="#6d7587"/><path d="M975,634.250 h6.750 l-3.375,3.750z" fill="#6d7587"/>
<path d="M996.200,630 h4.400 v8.600 l-4.400,-3.600z M1002.600,630 h4.400 v4.600 l-4.400,4z" fill="#6d7587"/><path d="M994.600,641.750 L1008.500,630.400 M996,642 L1003,636" stroke="#6d7587" stroke-width="1.100"/>
<path d="M1027.600,631.600 h15.800 v2 h-1 v5.400 h1 v2 h-15.800 v-2 h1 v-5.400 h-1z" fill="#d3d8e1"/><rect x="1035" y="635" width="1.200" height="2.600" fill="#454d60"/><rect x="1028.600" y="633.200" width="13.800" height="0.800" fill="#454d60"/>
<path d="M1064.400,633 h10 l-0.600,11 h-8.800z" fill="#d3d8e1"/><rect x="1063.600" y="630.600" width="11.650" height="1.500" fill="#d3d8e1"/><rect x="1067.400" y="629" width="4" height="1.600" fill="#d3d8e1"/><path d="M1067,634.400 v8 M1069.400,634.400 v8 M1071.800,634.400 v8" stroke="#454d60" stroke-width="0.900"/>
<path d="M1095.900,632.800 h2 l0.600,-1.500 h3.400 l0.600,1.500 h8.750 v9.300 h-15.350z" fill="#d3d8e1"/><circle cx="1105.800" cy="637.600" r="3" fill="none" stroke="#454d60" stroke-width="1.100"/><rect x="1098" y="634" width="1.600" height="1" fill="#454d60"/>
<path d="M1127,630.500 h7.100 v7.600 l-3.550,3.650 l-3.550,-3.650z" fill="#f04e23"/><path d="M1144.250,634.250 h6.750 l-3.375,3.750z" fill="#d3d8e1"/>
<path d="M1368.200,628.750 l11.600,8.600 l-5.200,0.600 l2.800,5.400 l-2.200,1.150 l-2.800,-5.500 l-3.400,3.200z" fill="#ff8400"/>
<path d="M1400.800,631 v11.200 M1416,631 v11.200 M1403,636.600 h10.800 M1405.800,634 l-2.800,2.600 l2.800,2.600 M1411,634 l2.800,2.600 l-2.800,2.600" fill="none" stroke="#d3d8e1" stroke-width="1.100"/>
<rect x="1439.800" y="631.600" width="5.600" height="10" rx="1" fill="none" stroke="#d3d8e1" stroke-width="1.100"/><path d="M1437.600,634.200 l-2.400,2.400 l2.400,2.400 M1447.600,634.200 l2.400,2.400 l-2.400,2.400 M1435.400,636.600 h4 M1446,636.600 h4" fill="none" stroke="#d3d8e1" stroke-width="1.100"/>
<path d="M1476.650,631 v11.200 M1469,636.600 h5.600 M1478.800,636.600 h5.600 M1471.600,634 l-2.800,2.600 l2.800,2.600 M1481.800,634 l2.800,2.600 l-2.800,2.600" fill="none" stroke="#d3d8e1" stroke-width="1.100"/>
<rect x="1503.400" y="631.500" width="14.800" height="10.200" fill="none" stroke="#d3d8e1" stroke-width="1.200"/><path d="M1506,636.200 v-2.400 h2.600 M1506.200,634 l3.200,2.800 M1515.600,637 v2.400 h-2.600 M1515.400,639.200 l-3.200,-2.800" fill="none" stroke="#d3d8e1" stroke-width="0.900"/>
<path d="M1753.750,631 v11.200 M1745.600,636.600 h5.600 M1756.200,636.600 h5.600" fill="none" stroke="#d3d8e1" stroke-width="1.200"/><path d="M1748.600,633.600 l3.400,3 l-3.400,3z M1759,633.600 l-3.400,3 l3.400,3z" fill="#d3d8e1"/>
<path d="M1780,642.750 h15.200 v-9.400z" fill="#d3d8e1"/><path d="M1781,632 h8 M1786.400,629.400 l3,2.600 l-3,2.600" fill="none" stroke="#d3d8e1" stroke-width="1.200"/>
<path d="M1829.600,630.500 h-9.400 a5.850,5.850 0 0 0 0,11.700 h9.400 v-3.600 h-9.200 a2.250,2.250 0 0 1 0,-4.500 h9.200z" fill="#ff8400"/><path d="M1825.600,630.500 v3.600 M1825.600,638.600 v3.600" stroke="#454d60" stroke-width="1"/>
<path d="M1847.700,636.600 a4.200,3 0 0 1 8.400,0 a4.200,1.600 0 0 1 -8.400,0z" fill="#d3d8e1"/><rect x="1851" y="637" width="1.800" height="5.200" fill="#d3d8e1"/><path d="M1858,633.600 q1.600,2.600 0,5.200 M1860.200,631.600 q3,4.600 0,9.200" fill="none" stroke="#d3d8e1" stroke-width="1.100"/>
<path d="M1878,641.400 l9,-6.400 l1.400,1.800 l-9,6.400z" fill="#ff8400"/><path d="M1889.600,630.500 v3 M1888.100,632 h3 M1884.400,631 v2 M1883.400,632 h2 M1891.800,635.400 v2 M1890.800,636.400 h2" stroke="#ff8400" stroke-width="0.900"/><path d="M1892.600,640 h6.400 l-3.200,4z" fill="#ff8400"/>
<path d="M29.200000000000003,663 v-2.600 a2.600,2.600 0 0 1 5.200,0 v1.400" fill="none" stroke="#d3d8e1" stroke-width="1.500"/><rect x="20.6" y="662.6" width="9.800" height="7.800" fill="#d3d8e1"/><rect x="24.700000000000003" y="665.2" width="1.600" height="3.200" fill="#2f3545"/>
<rect x="62.600" y="657.600" width="15.200" height="8.800" fill="none" stroke="#d3d8e1" stroke-width="0.900"/><rect x="64.600" y="659.400" width="11.600" height="5.200" fill="#77777a"/><rect x="63.400" y="661.400" width="1.600" height="4" fill="#d3d8e1"/><path d="M62,654.800 v4.400 M59.800,657 h4.400" stroke="#d3d8e1" stroke-width="1"/>
<path d="M157.6,661.6 q6.400,-7 12.800,0 q-6.400,7 -12.800,0z" fill="none" stroke="#d3d8e1" stroke-width="1.500"/><circle cx="164" cy="661.4" r="2.700" fill="#d3d8e1"/><circle cx="163.3" cy="660.8000000000001" r="0.900" fill="#2f3545"/>
<path d="M180.75,659.2 h3.200 l4.400,-3.600 v12 l-4.400,-3.600 h-3.200z" fill="#d3d8e1"/><path d="M190.35,659.2 q1.800,2.400 0,4.800 M192.55,657.2 q3.400,4.400 0,8.800" fill="none" stroke="#d3d8e1" stroke-width="1.100"/>
<rect x="248" y="672" width="1" height="361" fill="#20242e"/><rect x="249" y="671" width="1.1" height="336" fill="#d64c10"/><path d="M249,662 h10 l-10,9.600z" fill="#dadee8"/>
<path d="M25.1,697.0 v-2.600 a2.600,2.600 0 0 1 5.200,0 v1.400" fill="none" stroke="#d3d8e1" stroke-width="1.500"/><rect x="16.5" y="696.6" width="9.800" height="7.800" fill="#d3d8e1"/><rect x="20.6" y="699.2" width="1.600" height="3.200" fill="#394255"/>
<path d="M149.6,697.5 q6.400,-7 12.800,0 q-6.400,7 -12.800,0z" fill="none" stroke="#d3d8e1" stroke-width="1.500"/><circle cx="156" cy="697.3" r="2.700" fill="#d3d8e1"/><circle cx="155.3" cy="696.7" r="0.900" fill="#394255"/>
<path d="M172.5,695.1 h3.200 l4.400,-3.600 v12 l-4.400,-3.600 h-3.200z" fill="#d3d8e1"/><path d="M182.1,695.1 q1.800,2.400 0,4.800 M184.3,693.1 q3.400,4.400 0,8.800" fill="none" stroke="#d3d8e1" stroke-width="1.100"/>
<rect x="199.0" y="693.0" width="13" height="8.600" fill="none" stroke="#d3d8e1" stroke-width="0.900"/><path d="M204.0,695.1 q-3,2.200 0,4.400 M207.0,695.1 q3,2.200 0,4.400" fill="none" stroke="#d3d8e1" stroke-width="0.900" stroke-dasharray="1.2 0.8"/>
<path d="M25.1,762.0 v-2.600 a2.600,2.600 0 0 1 5.200,0 v1.400" fill="none" stroke="#d3d8e1" stroke-width="1.500"/><rect x="16.5" y="761.6" width="9.800" height="7.800" fill="#d3d8e1"/><rect x="20.6" y="764.2" width="1.600" height="3.200" fill="#5f6675"/>
<path d="M149.6,762.5 q6.400,-7 12.800,0 q-6.400,7 -12.800,0z" fill="none" stroke="#d3d8e1" stroke-width="1.500"/><circle cx="156" cy="762.3" r="2.700" fill="#d3d8e1"/><circle cx="155.3" cy="761.7" r="0.900" fill="#5f6675"/>
<path d="M172.5,760.1 h3.200 l4.400,-3.600 v12 l-4.400,-3.600 h-3.200z" fill="#d3d8e1"/><path d="M182.1,760.1 q1.800,2.400 0,4.800 M184.3,758.1 q3.400,4.400 0,8.800" fill="none" stroke="#d3d8e1" stroke-width="1.100"/>
<rect x="199.0" y="758.0" width="13" height="8.600" fill="none" stroke="#d3d8e1" stroke-width="0.900"/><path d="M204.0,760.1 q-3,2.200 0,4.400 M207.0,760.1 q3,2.200 0,4.400" fill="none" stroke="#d3d8e1" stroke-width="0.900" stroke-dasharray="1.2 0.8"/>
<path d="M25.1,827.0 v-2.600 a2.600,2.600 0 0 1 5.200,0 v1.400" fill="none" stroke="#d3d8e1" stroke-width="1.500"/><rect x="16.5" y="826.6" width="9.800" height="7.800" fill="#d3d8e1"/><rect x="20.6" y="829.2" width="1.600" height="3.200" fill="#394255"/>
<path d="M149.6,827.5 q6.400,-7 12.800,0 q-6.400,7 -12.800,0z" fill="none" stroke="#d3d8e1" stroke-width="1.500"/><circle cx="156" cy="827.3" r="2.700" fill="#d3d8e1"/><circle cx="155.3" cy="826.7" r="0.900" fill="#394255"/>
<path d="M172.5,825.1 h3.200 l4.400,-3.600 v12 l-4.400,-3.600 h-3.200z" fill="#d3d8e1"/><path d="M182.1,825.1 q1.800,2.400 0,4.800 M184.3,823.1 q3.400,4.400 0,8.800" fill="none" stroke="#d3d8e1" stroke-width="1.100"/>
<rect x="199.0" y="823.0" width="13" height="8.600" fill="none" stroke="#d3d8e1" stroke-width="0.900"/><path d="M204.0,825.1 q-3,2.200 0,4.400 M207.0,825.1 q3,2.200 0,4.400" fill="none" stroke="#d3d8e1" stroke-width="0.900" stroke-dasharray="1.2 0.8"/>
<path d="M25.1,877.0 v-2.600 a2.600,2.600 0 0 1 5.200,0 v1.400" fill="none" stroke="#d3d8e1" stroke-width="1.500"/><rect x="16.5" y="876.6" width="9.800" height="7.800" fill="#d3d8e1"/><rect x="20.6" y="879.2" width="1.600" height="3.200" fill="#394255"/>
<path d="M149.6,877.5 q6.400,-7 12.800,0 q-6.400,7 -12.800,0z" fill="none" stroke="#d3d8e1" stroke-width="1.500"/><circle cx="156" cy="877.3" r="2.700" fill="#d3d8e1"/><circle cx="155.3" cy="876.7" r="0.900" fill="#394255"/>
<path d="M172.5,875.1 h3.200 l4.400,-3.600 v12 l-4.400,-3.600 h-3.200z" fill="#d3d8e1"/><path d="M182.1,875.1 q1.800,2.400 0,4.800 M184.3,873.1 q3.400,4.400 0,8.800" fill="none" stroke="#d3d8e1" stroke-width="1.100"/>
<rect x="199.0" y="873.0" width="13" height="8.600" fill="none" stroke="#d3d8e1" stroke-width="0.900"/><path d="M204.0,875.1 q-3,2.200 0,4.400 M207.0,875.1 q3,2.200 0,4.400" fill="none" stroke="#d3d8e1" stroke-width="0.900" stroke-dasharray="1.2 0.8"/>
<path d="M249.2,996.500 V1003.5 M318.6,996.500 V1000.5 M388.1,996.500 V1003.5 M457.5,996.500 V1000.5 M526.9,996.500 V1003.5 M596.4,996.500 V1000.5 M665.8,996.500 V1003.5 M735.2,996.500 V1000.5 M804.7,996.500 V1003.5 M874.1,996.500 V1000.5 M943.5,996.500 V1003.5 M1013.0,996.500 V1000.5 M1082.4,996.500 V1003.5 M1151.9,996.500 V1000.5 M1221.3,996.500 V1003.5 M1290.7,996.500 V1000.5 M1360.2,996.500 V1003.5 M1429.6,996.500 V1000.5 M1499.0,996.500 V1003.5 M1568.5,996.500 V1000.5 M1637.9,996.500 V1003.5 M1707.3,996.500 V1000.5 M1776.8,996.500 V1003.5 M1846.2,996.500 V1000.5" stroke="#7f8798" stroke-width="1"/>
<path d="M249.600,1003 h4.800 v2.800 l-2.400,2.600 l-2.400,-2.600z" fill="#e6e8ec"/>
<path d="M255.600,1021.400 v5.200 l-4,-2.600z" fill="#6470a0"/><path d="M262.600,1021.600 v4.800 M264.600,1021.600 v4.800 M886.600,1021.600 v4.800 M888.600,1021.600 v4.800" stroke="#c0c6d0" stroke-width="0.800"/><rect x="575.400" y="1023.400" width="1.200" height="1.200" fill="#2f3545"/>
<path d="M1896.600,1021.600 v4.800 l3.600,-2.400z" fill="#e0e4ea"/>
<path d="M35.500,1017 v3 M76,1017 v3 M100,1017 v3 M131.500,1017 v3 M163,1017 v3 M187,1017 v3 M211,1017 v3" stroke="#8f97a8" stroke-width="0.900"/>
<path d="M23.4,1022 V1033 M25.8,1022 V1033 M28.2,1022 V1033 M30.6,1022 V1033 M33.0,1022 V1033 M35.4,1022 V1033 M37.8,1022 V1033 M40.2,1022 V1033 M42.6,1022 V1033 M45.0,1022 V1033 M47.4,1022 V1033 M49.8,1022 V1033 M52.2,1022 V1033 M54.6,1022 V1033 M57.0,1022 V1033 M59.4,1022 V1033 M61.8,1022 V1033 M64.2,1022 V1033 M66.6,1022 V1033 M69.0,1022 V1033 M71.4,1022 V1033 M73.8,1022 V1033 M76.2,1022 V1033 M78.6,1022 V1033 M81.0,1022 V1033 M83.4,1022 V1033 M85.8,1022 V1033 M88.2,1022 V1033 M90.6,1022 V1033 M93.0,1022 V1033 M95.4,1022 V1033 M97.8,1022 V1033 M100.2,1022 V1033 M102.6,1022 V1033 M105.0,1022 V1033 M107.4,1022 V1033 M109.8,1022 V1033 M112.2,1022 V1033 M114.6,1022 V1033 M117.0,1022 V1033 M119.4,1022 V1033 M121.8,1022 V1033 M124.2,1022 V1033 M126.6,1022 V1033 M129.0,1022 V1033 M131.4,1022 V1033 M133.8,1022 V1033 M136.2,1022 V1033 M138.6,1022 V1033 M141.0,1022 V1033 M143.4,1022 V1033 M145.8,1022 V1033 M148.2,1022 V1033 M150.6,1022 V1033 M153.0,1022 V1033 M155.4,1022 V1033 M157.8,1022 V1033 M160.2,1022 V1033 M162.6,1022 V1033 M165.0,1022 V1033 M167.4,1022 V1033 M169.8,1022 V1033 M172.2,1022 V1033 M174.6,1022 V1033 M177.0,1022 V1033 M179.4,1022 V1033 M181.8,1022 V1033 M184.2,1022 V1033 M186.6,1022 V1033 M189.0,1022 V1033 M191.4,1022 V1033 M193.8,1022 V1033 M196.2,1022 V1033 M198.6,1022 V1033 M201.0,1022 V1033 M203.4,1022 V1033 M205.8,1022 V1033 M208.2,1022 V1033" stroke="#2f3545" stroke-width="0.400" opacity="0.600"/>
<!-- p_taskbar -->
<path d="M15.500,1054.300 l6.800,-0.950 v6.350 h-6.800z M23.300,1053.200 l8.700,-1.200 v7.700 h-8.700z M15.500,1060.700 h6.800 v6.350 l-6.800,-0.950z M23.300,1060.700 h8.700 v7.700 l-8.700,-1.200z" fill="#0a0a0a"/>
<circle cx="70.400" cy="1057.400" r="4.800" fill="none" stroke="#0a0a0a" stroke-width="1.400"/><path d="M67,1061 l-6.400,6.600" stroke="#0a0a0a" stroke-width="1.500"/>
<circle cx="416" cy="1060" r="6.900" fill="none" stroke="#0a0a0a" stroke-width="2"/>
<rect x="458.600" y="1055.600" width="8.800" height="8.800" fill="none" stroke="#0a0a0a" stroke-width="1.500"/><path d="M455.400,1053.600 h13.600 M455.400,1066.600 h13.600 M471.200,1055 v2.600 M471.200,1059.600 v6" stroke="#0a0a0a" stroke-width="1.500"/>
<path d="M502,1051.600 h8.600 l2,2.400 h13.400 v14.600 h-24z" fill="#f0b429"/><rect x="502" y="1056.600" width="24" height="12" fill="#ffd35a"/><rect x="505" y="1062.600" width="18" height="6" fill="#3a8ee6"/><rect x="510" y="1065" width="8" height="3.600" fill="#ffd35a"/>
<path d="M552.600,1056.600 h22 l-0.800,13 h-20.400z" fill="#101010"/><path d="M559,1056.600 v-2.600 a4.600,4.600 0 0 1 9.200,0 v2.600" fill="none" stroke="#101010" stroke-width="1.600"/><rect x="558.600" y="1059.400" width="4.400" height="4.200" fill="#f25022"/><rect x="564" y="1059.400" width="4.400" height="4.200" fill="#7fba00"/><rect x="558.600" y="1064.400" width="4.400" height="4.200" fill="#00a4ef"/><rect x="564" y="1064.400" width="4.400" height="4.200" fill="#ffb900"/>
<path d="M600,1058.400 l12.600,-6.800 l12.600,6.800 v10.600 h-25.200z" fill="#0a0a0a"/><path d="M601.600,1059.600 l11,5.800 l11,-5.800" fill="none" stroke="#d8e4ea" stroke-width="1.400"/>
<defs><radialGradient id="gFx" cx="0.600" cy="0.250" r="0.800"><stop offset="0" stop-color="#ffe14a"/><stop offset="0.400" stop-color="#ff9a28"/><stop offset="0.750" stop-color="#ff3a4a"/><stop offset="1" stop-color="#c020a0"/></radialGradient><linearGradient id="gEdge" x1="0" x2="1" y1="0" y2="1"><stop offset="0" stop-color="#35c1f1"/><stop offset="0.500" stop-color="#1b9de2"/><stop offset="1" stop-color="#0c59a4"/></linearGradient></defs>
<circle cx="662" cy="1060.400" r="11.600" fill="url(#gFx)"/><circle cx="663.400" cy="1061" r="6.200" fill="#7a3ae0"/><path d="M652,1056 q4,-8 12,-6 q-4,2 -3,5 q4,0 5,4 q-6,-2 -8,2 q-2,4 3,6 q-8,1 -10,-6z" fill="#ffb22a"/>
<rect x="699" y="1048" width="24" height="24" fill="#0d2481"/><path d="M706.400,1053.600 l4.600,3 l-4.600,3 l-4.600,-3z M715.600,1053.600 l4.600,3 l-4.600,3 l-4.600,-3z M706.400,1059.600 l4.600,3 l-4.600,3 l-4.600,-3z M715.600,1059.600 l4.600,3 l-4.600,3 l-4.600,-3z M711,1063.600 l3.600,2.400 l-3.600,2.400 l-3.600,-2.400z" fill="#ffffff"/>
<rect x="748" y="1048" width="24" height="24" fill="#14181c"/><path d="M752,1052 l5,4 l3,-3 l3,3 l5,-4 l-2,10 l-3,6 l-3,-3 l-3,3 l-3,-6z" fill="#8a9298"/><path d="M757,1059 l3,5 l3,-5 l-3,-2z" fill="#14181c"/><rect x="749" y="1049" width="2" height="22" fill="#2ad0e8" opacity="0.700"/><rect x="769" y="1049" width="2" height="22" fill="#2ad0e8" opacity="0.700"/>
<path d="M800,1054.600 l11,-4.600 l6,1.800 v16.800 l-6,1.800 l-11,-4.400 l11,1.400 v-15 l-7,1.800 v9.600 l-4,1.800z" fill="#e8471c"/>
<circle cx="857.500" cy="1060.400" r="12" fill="url(#gEdge)"/><path d="M846.600,1062 q1,-9 10.400,-9.400 q8,0 9.600,7.400 q-4,-4 -9,-2.600 q-5,2 -3.600,7.600 q1.600,4.400 7,4.600 q-5,3 -10,0 q-4.400,-3 -4.400,-7.600z" fill="#a8f0a0" opacity="0.850"/><path d="M853,1062 q2,-5 8,-3.600 q4,1.600 3,5 q-3,-2 -5.600,0 q-1.600,2 0.600,4.600 q-5,0 -6,-6z" fill="#0c59a4"/>
<g transform="translate(906.2,1059.7) scale(0.86) translate(-905.4,-1060)">
<polygon points="901.6,1051.2 905.4,1046.2 911.4,1050.4 910.8,1052.1 905,1059.4" fill="#a696e2"/>
<polygon points="910.8,1052.1 917.200,1052.300 917.200,1060.700 915.200,1061.400 905,1059.400" fill="#b9a8f5"/>
<polygon points="915.200,1061.400 917.200,1067.100 910.800,1070.500 909.100,1068.800 905,1059.400" fill="#bcaaf8"/>
<polygon points="909.100,1068.800 905.400,1073.800 899,1069.400 900.700,1066.800 905,1059.400" fill="#c0aefb"/>
<polygon points="900.700,1066.800 893.600,1067.100 893.600,1059.400 895.300,1058.300 905,1059.400" fill="#8676c4"/>
<polygon points="895.300,1058.300 893.600,1053.300 899.700,1050 901.600,1051.200 905,1059.400" fill="#9384d0"/>
</g>
<path d="M1599.600,1063.400 l5.600,-5.800 l5.600,5.800" fill="none" stroke="#0a0a0a" stroke-width="1.400"/>
<rect x="1624.600" y="1054.600" width="8" height="12" rx="2.400" fill="none" stroke="#0a0a0a" stroke-width="1.300"/><circle cx="1628.600" cy="1060.600" r="2" fill="none" stroke="#0a0a0a" stroke-width="1"/><path d="M1633.600,1058.600 l2.600,-1.600 v7 l-2.600,-1.600" fill="none" stroke="#0a0a0a" stroke-width="1"/>
<circle cx="1651" cy="1059" r="5" fill="none" stroke="#f0b000" stroke-width="2.400"/><circle cx="1655.600" cy="1063" r="4.600" fill="#28a028"/><path d="M1653.400,1063 l1.600,1.600 l2.800,-3" stroke="#fff" stroke-width="1.100" fill="none"/>
<rect x="1669.600" y="1053.600" width="13" height="11" fill="none" stroke="#0a0a0a" stroke-width="1.300"/><path d="M1673,1061 l2,-4 l3,3 l2,-3" fill="none" stroke="#0a0a0a" stroke-width="1"/><circle cx="1682" cy="1065" r="3.400" fill="#f08a00"/>
<rect x="1695.600" y="1056.600" width="14" height="7.600" fill="none" stroke="#0a0a0a" stroke-width="1.300"/><rect x="1697.400" y="1058.400" width="10.400" height="4" fill="#0a0a0a"/><path d="M1694,1058 v-3 M1692.400,1056.600 h3.200" stroke="#0a0a0a" stroke-width="1.200"/>
<path d="M1720,1066 a9,9 0 0 1 12,-9 M1723,1066.400 a6,6 0 0 1 8,-5.600 M1726.400,1066.600 a3,3 0 0 1 4,-2.400" fill="none" stroke="#0a0a0a" stroke-width="1.300"/>
<path d="M1741,1058.600 h2.600 l3.600,-3.400 v11 l-3.600,-3.400 h-2.600z" fill="none" stroke="#0a0a0a" stroke-width="1.100"/><path d="M1749.400,1058 q1.600,2.600 0,5.200 M1751.600,1056 q2.800,4.600 0,9.200 M1753.800,1054.400 q3.800,6.200 0,12.400" fill="none" stroke="#6a747c" stroke-width="1"/>
<path d="M1879.600,1052.600 h16 v11.600 h-10.600 l-3.400,3.400 v-3.400 h-2z" fill="#0a0a0a"/><path d="M1882,1055.600 h11 M1882,1058.200 h11 M1882,1060.800 h11" stroke="#cfdde5" stroke-width="0.800"/><circle cx="1894" cy="1067.600" r="7" fill="#d4e0e6" stroke="#5a6268" stroke-width="0.900"/>
</svg>
<!-- p_layout -->
<!-- p_top -->
<span class="t" style="left:45.20px;top:19.12px;font-size:13.5px;line-height:16px;letter-spacing:-0.072px;color:#d3d8e1;">Fichier</span>
<span class="t" style="left:97.70px;top:19.12px;font-size:13.5px;line-height:16px;letter-spacing:-0.044px;color:#d3d8e1;">Editer</span>
<span class="t" style="left:145.50px;top:19.12px;font-size:13.5px;line-height:16px;letter-spacing:0.152px;color:#d3d8e1;">Panneau de configuration</span>
<span class="t" style="left:319.20px;top:21.41px;font-size:9.5px;line-height:11px;letter-spacing:-0.802px;color:#1e232e;font-weight:bold;">?</span>
<span class="t" style="left:965.00px;top:17.13px;font-size:15.5px;line-height:19px;letter-spacing:0.475px;color:#e4e7ee;">Importer</span>
<span class="t" style="left:1110.50px;top:17.13px;font-size:15.5px;line-height:19px;letter-spacing:0.484px;color:#fff3e0;">Modifier</span>
<span class="t" style="left:1255.00px;top:17.13px;font-size:15.5px;line-height:19px;letter-spacing:-0.072px;color:#6b7594;">Exporter</span>
<!-- p_library -->
<span class="t" style="left:35.00px;top:58.07px;font-size:14.8px;line-height:18px;letter-spacing:-0.330px;color:#ff8400;">Bibliothèque</span>
<span class="t" style="left:173.30px;top:57.67px;font-size:14.8px;line-height:18px;letter-spacing:-0.599px;color:#d3d8e1;">Éditeur</span>
<span class="t" style="left:290.70px;top:57.67px;font-size:14.8px;line-height:18px;letter-spacing:-0.775px;color:#d3d8e1;">Masque</span>
<span class="t" style="left:421.70px;top:57.67px;font-size:14.8px;line-height:18px;letter-spacing:-0.550px;color:#d3d8e1;">Titre</span>
<span class="t" style="left:69.50px;top:90.72px;font-size:13.8px;line-height:17px;letter-spacing:-0.049px;color:#d3d8e1;">Incrustations: Incrustat...</span>
<span class="t" style="left:258.50px;top:90.72px;font-size:13.8px;line-height:17px;letter-spacing:-0.033px;color:#d3d8e1;">Montages et modèles:...</span>
<span class="t" style="left:445.50px;top:90.72px;font-size:13.8px;line-height:17px;letter-spacing:-0.372px;color:#fff8e0;">Transitions: Extra FX</span>
<span class="t" style="left:606.00px;top:90.72px;font-size:13.8px;line-height:17px;letter-spacing:-0.018px;color:#d3d8e1;">Chutier: noel</span>
<span class="t" style="left:686.80px;top:121.64px;font-size:12px;line-height:14px;letter-spacing:-0.070px;color:#d3d8e1;font-weight:bold;">3D</span>
<span class="t" style="left:940.00px;top:121.58px;font-size:11.6px;line-height:14px;letter-spacing:-0.108px;color:#a4abba;font-style:italic;">Recherch. dans votre affich. actu</span>
<span class="t" style="left:79.50px;top:150.69px;font-size:13.6px;line-height:16px;letter-spacing:-0.550px;color:#f2f4f8;">Extra FX</span>
<span class="t" style="left:394.50px;top:151.47px;font-size:12.2px;line-height:15px;letter-spacing:-0.111px;color:#d3d8e1;">HollywoodFx for Studio</span>
<span class="t" style="left:967.00px;top:151.47px;font-size:12.2px;line-height:15px;letter-spacing:-0.290px;color:#d3d8e1;">16 élément(s), 1 sélectionné(s)</span>
<span class="t" style="left:20.20px;top:174.59px;font-size:18.5px;line-height:22px;letter-spacing:0.395px;color:#d3d8e1;font-weight:bold;font-style:italic;font-family:'Liberation Serif',serif;">fx</span>
<span class="t" style="left:20.20px;top:262.81px;font-size:24.5px;line-height:29px;letter-spacing:-0.542px;color:#d3d8e1;font-weight:bold;font-family:'Liberation Serif',serif;">T</span>
<span class="t" style="left:554.60px;top:591.83px;font-size:13.2px;line-height:16px;letter-spacing:0.197px;color:#e8ebf0;font-weight:bold;">Smart</span>
<span class="t" style="left:593.00px;top:591.83px;font-size:13.2px;line-height:16px;letter-spacing:0.878px;color:#e8ebf0;">Movie</span>
<!-- p_thumbs -->
<span class="t" style="left:78.00px;top:258.84px;font-size:12px;line-height:14px;letter-spacing:-0.070px;color:#d6dae3;">4 Spin Out</span>
<span class="t" style="left:215.00px;top:258.84px;font-size:12px;line-height:14px;letter-spacing:-0.264px;color:#d6dae3;">Années 70</span>
<span class="t" style="left:357.00px;top:258.84px;font-size:12px;line-height:14px;letter-spacing:-0.182px;color:#d6dae3;">Arceaux dorés</span>
<span class="t" style="left:492.60px;top:258.84px;font-size:12px;line-height:14px;letter-spacing:-0.194px;color:#d6dae3;">CarrouselGrille</span>
<span class="t" style="left:617.00px;top:258.84px;font-size:12px;line-height:14px;letter-spacing:-0.024px;color:#d6dae3;">Coupeur de disque</span>
<span class="t" style="left:759.40px;top:258.84px;font-size:12px;line-height:14px;letter-spacing:-0.248px;color:#d6dae3;">Egalisateur</span>
<span class="t" style="left:899.00px;top:258.84px;font-size:12px;line-height:14px;letter-spacing:-0.162px;color:#d6dae3;">Etirer et écraser</span>
<span class="t" style="left:1035.80px;top:258.84px;font-size:12px;line-height:14px;letter-spacing:-0.178px;color:#d6dae3;">Etoiles volantes</span>
<span class="t" style="left:67.30px;top:367.54px;font-size:12px;line-height:14px;letter-spacing:-0.056px;color:#d6dae3;">Gyroscope atomique</span>
<span class="t" style="left:222.70px;top:367.54px;font-size:12px;line-height:14px;letter-spacing:-0.005px;color:#d6dae3;">Matrice</span>
<span class="t" style="left:368.50px;top:367.54px;font-size:12px;line-height:14px;letter-spacing:-0.160px;color:#d6dae3;">Oeil</span>
<span class="t" style="left:472.60px;top:367.54px;font-size:12px;line-height:14px;letter-spacing:-0.332px;color:#d6dae3;">Pays des merveilles ...</span>
<span class="t" style="left:624.00px;top:367.54px;font-size:12px;line-height:14px;letter-spacing:-0.359px;color:#d6dae3;">Recherché</span>
<span class="t" style="left:762.00px;top:367.54px;font-size:12px;line-height:14px;letter-spacing:-0.112px;color:#d6dae3;">Rondins volants</span>
<span class="t" style="left:901.70px;top:367.54px;font-size:12px;line-height:14px;letter-spacing:-0.421px;color:#d6dae3;">Tâches carrées</span>
<span class="t" style="left:1047.00px;top:367.54px;font-size:12px;line-height:14px;letter-spacing:-0.167px;color:#d6dae3;">Terre</span>
<!-- p_preview -->
<span class="t" style="left:1182.00px;top:60.12px;font-size:13.8px;line-height:17px;letter-spacing:-0.135px;color:#bcc2cf;">Oeil</span>
<span class="t" style="left:1615.50px;top:60.93px;font-size:12.6px;line-height:15px;letter-spacing:0.696px;color:#aab1c0;">[ ] 00:00:05.00</span>
<span class="t" style="left:1722.00px;top:61.00px;font-size:12.4px;line-height:15px;letter-spacing:-0.452px;color:#aab1c0;transform:scaleX(.8);transform-origin:0 0;">TC</span>
<span class="t" style="left:1745.00px;top:60.93px;font-size:12.6px;line-height:15px;letter-spacing:0.722px;color:#b4bac8;">00:00:01.16</span>
<span class="t" style="left:1227.50px;top:89.83px;font-size:15.2px;line-height:18px;letter-spacing:-0.110px;color:#ff8400;">Source</span>
<span class="t" style="left:1391.00px;top:89.83px;font-size:15.2px;line-height:18px;letter-spacing:0.372px;color:#d6dae2;">Plan de montage</span>
<span class="t" style="left:1159.00px;top:550.60px;font-size:9.8px;line-height:12px;letter-spacing:-0.374px;color:#c8cdd8;">:00.00</span>
<span class="t" style="left:1284.10px;top:550.60px;font-size:9.8px;line-height:12px;letter-spacing:-0.215px;color:#c8cdd8;">00:00:01.00</span>
<span class="t" style="left:1434.10px;top:550.60px;font-size:9.8px;line-height:12px;letter-spacing:-0.215px;color:#c8cdd8;">00:00:02.00</span>
<span class="t" style="left:1584.10px;top:550.60px;font-size:9.8px;line-height:12px;letter-spacing:-0.215px;color:#c8cdd8;">00:00:03.00</span>
<span class="t" style="left:1734.40px;top:550.60px;font-size:9.8px;line-height:12px;letter-spacing:-0.215px;color:#c8cdd8;">00:00:04.00</span>
<span class="t" style="left:1883.90px;top:550.60px;font-size:9.8px;line-height:12px;letter-spacing:-0.204px;color:#c8cdd8;">00:00</span>
<span class="t" style="left:1160.60px;top:591.65px;font-size:14px;line-height:17px;letter-spacing:0.762px;color:#ff8400;">V</span>
<span class="t" style="left:1395.40px;top:591.65px;font-size:14px;line-height:17px;letter-spacing:-0.693px;color:#d3d8e1;">1x</span>
<!-- p_timeline -->
<span class="t" style="left:465.60px;top:627.18px;font-size:14.2px;line-height:17px;letter-spacing:1.728px;color:#d3d8e1;font-weight:bold;font-family:'Liberation Serif',serif;">T</span>
<span class="t" style="left:490.80px;top:627.18px;font-size:14.2px;line-height:17px;letter-spacing:0.927px;color:#d3d8e1;font-family:'Liberation Serif',serif;">T</span>
<span class="t" style="left:499.60px;top:635.73px;font-size:5.4px;line-height:6px;letter-spacing:-0.051px;color:#d3d8e1;font-weight:bold;">3D</span>
<span class="t" style="left:94.10px;top:653.55px;font-size:14px;line-height:17px;letter-spacing:-0.255px;color:#e4e7ee;">Solo</span>
<span class="t" style="left:51.50px;top:688.01px;font-size:14.4px;line-height:17px;letter-spacing:-0.348px;color:#dde0e8;">Piste A/V (1)</span>
<span class="t" style="left:51.50px;top:753.01px;font-size:14.4px;line-height:17px;letter-spacing:-0.348px;color:#dde0e8;">Piste A/V (2)</span>
<span class="t" style="left:51.50px;top:818.01px;font-size:14.4px;line-height:17px;letter-spacing:-0.348px;color:#dde0e8;">Piste A/V (3)</span>
<span class="t" style="left:51.50px;top:868.01px;font-size:14.4px;line-height:17px;letter-spacing:-0.348px;color:#dde0e8;">Piste A/V (4)</span>
<span class="t" style="left:250.50px;top:1001.87px;font-size:9.6px;line-height:12px;letter-spacing:-0.104px;color:#c8cdd8;">00.00</span>
<span class="t" style="left:363.47px;top:1001.87px;font-size:9.6px;line-height:12px;letter-spacing:-0.137px;color:#c8cdd8;">00:00:10.00</span>
<span class="t" style="left:502.34px;top:1001.87px;font-size:9.6px;line-height:12px;letter-spacing:-0.137px;color:#c8cdd8;">00:00:20.00</span>
<span class="t" style="left:641.21px;top:1001.87px;font-size:9.6px;line-height:12px;letter-spacing:-0.137px;color:#c8cdd8;">00:00:30.00</span>
<span class="t" style="left:780.08px;top:1001.87px;font-size:9.6px;line-height:12px;letter-spacing:-0.137px;color:#c8cdd8;">00:00:40.00</span>
<span class="t" style="left:918.95px;top:1001.87px;font-size:9.6px;line-height:12px;letter-spacing:-0.137px;color:#c8cdd8;">00:00:50.00</span>
<span class="t" style="left:1057.82px;top:1001.87px;font-size:9.6px;line-height:12px;letter-spacing:-0.137px;color:#c8cdd8;">00:01:00.00</span>
<span class="t" style="left:1196.69px;top:1001.87px;font-size:9.6px;line-height:12px;letter-spacing:-0.137px;color:#c8cdd8;">00:01:10.00</span>
<span class="t" style="left:1335.56px;top:1001.87px;font-size:9.6px;line-height:12px;letter-spacing:-0.137px;color:#c8cdd8;">00:01:20.00</span>
<span class="t" style="left:1474.43px;top:1001.87px;font-size:9.6px;line-height:12px;letter-spacing:-0.137px;color:#c8cdd8;">00:01:30.00</span>
<span class="t" style="left:1613.30px;top:1001.87px;font-size:9.6px;line-height:12px;letter-spacing:-0.137px;color:#c8cdd8;">00:01:40.00</span>
<span class="t" style="left:1752.17px;top:1001.87px;font-size:9.6px;line-height:12px;letter-spacing:-0.137px;color:#c8cdd8;">00:01:50.00</span>
<span class="t" style="left:1891.00px;top:1001.87px;font-size:9.6px;line-height:12px;letter-spacing:-0.304px;color:#c8cdd8;">00:02</span>
<span class="t" style="left:28.50px;top:1006.60px;font-size:9.8px;line-height:12px;letter-spacing:0.112px;color:#c0c6d2;">-60</span>
<span class="t" style="left:69.00px;top:1006.60px;font-size:9.8px;line-height:12px;letter-spacing:0.112px;color:#c0c6d2;">-22</span>
<span class="t" style="left:92.50px;top:1006.60px;font-size:9.8px;line-height:12px;letter-spacing:0.112px;color:#c0c6d2;">-16</span>
<span class="t" style="left:124.00px;top:1006.60px;font-size:9.8px;line-height:12px;letter-spacing:0.112px;color:#c0c6d2;">-10</span>
<span class="t" style="left:158.50px;top:1006.60px;font-size:9.8px;line-height:12px;letter-spacing:0.394px;color:#c0c6d2;">-6</span>
<span class="t" style="left:182.50px;top:1006.60px;font-size:9.8px;line-height:12px;letter-spacing:0.394px;color:#c0c6d2;">-3</span>
<span class="t" style="left:208.00px;top:1006.60px;font-size:9.8px;line-height:12px;letter-spacing:-0.450px;color:#c0c6d2;">0</span>
<!-- p_taskbar -->
<span class="t" style="left:88.00px;top:1051.94px;font-size:14.6px;line-height:18px;letter-spacing:0.061px;color:#2b2b2b;">Taper ici pour rechercher</span>
<span class="t" style="left:1768.00px;top:1053.48px;font-size:11.6px;line-height:14px;letter-spacing:-0.733px;color:#1a1a1a;">FRA</span>
<span class="t" style="left:1818.00px;top:1044.05px;font-size:11.4px;line-height:14px;letter-spacing:-0.305px;color:#1a1a1a;">09:00</span>
<span class="t" style="left:1803.00px;top:1062.05px;font-size:11.4px;line-height:14px;letter-spacing:0.095px;color:#1a1a1a;">21/12/2020</span>
<span class="t" style="left:1891.00px;top:1061.29px;font-size:11px;line-height:13px;letter-spacing:-0.117px;color:#1a1a1a;">4</span>
</body></html>
